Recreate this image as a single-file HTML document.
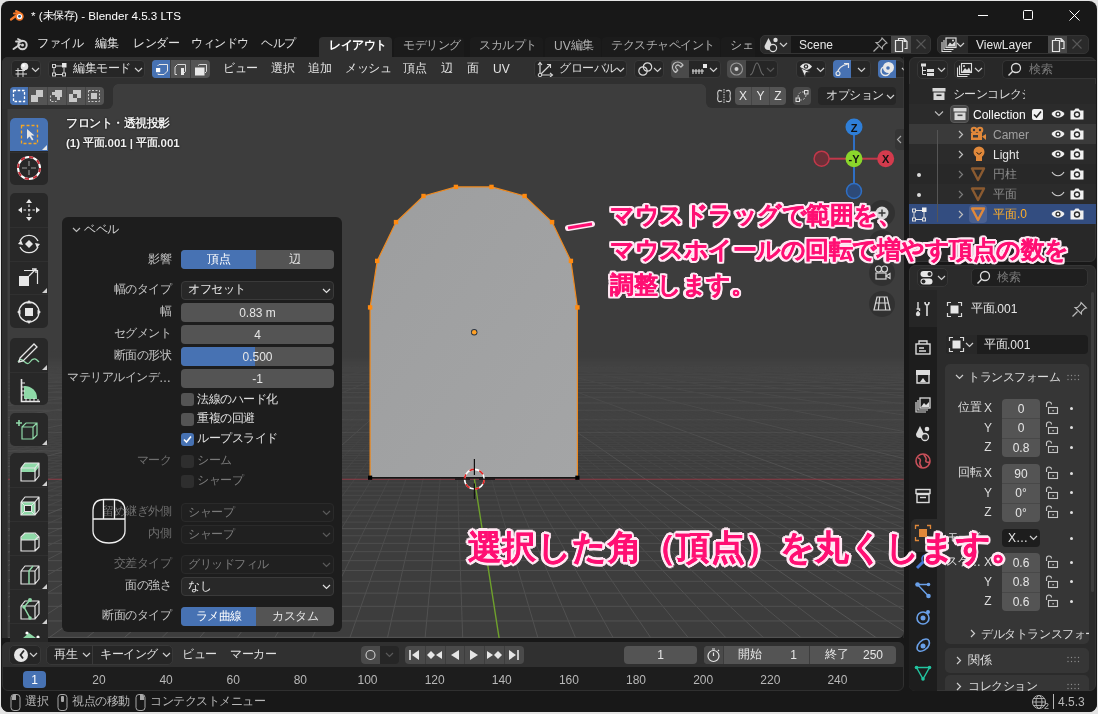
<!DOCTYPE html>
<html lang="ja"><head><meta charset="utf-8"><title>Blender</title>
<style>
*{box-sizing:border-box;margin:0;padding:0}
html,body{width:1098px;height:714px;overflow:hidden}
body{position:relative;background:#e4e4e4;font-family:"Liberation Sans",sans-serif;font-size:12px;color:#e6e6e6}
.a{position:absolute}
.t{white-space:nowrap}
#root{position:absolute;left:0;top:0;width:1098px;height:714px;will-change:transform}
</style></head><body><div id="root">
<div class="a" style="left:1px;top:1px;width:1096px;height:711px;background:#181818;border-radius:8px;"></div>
<svg class="a" style="left:9px;top:8px;" width="16" height="15" viewBox="0 0 16 15"><path d="M2 11.5L8 7" stroke="#f5792a" stroke-width="2.2" stroke-linecap="round"/><path d="M5 5.5L10 5" stroke="#f5792a" stroke-width="2" stroke-linecap="round"/><path d="M7 3L11 5" stroke="#f5792a" stroke-width="2" stroke-linecap="round"/><circle cx="10.5" cy="8.5" r="4.2" fill="#f5792a"/><circle cx="10.5" cy="8.5" r="2.6" fill="#fff"/><circle cx="10.5" cy="8.3" r="1.4" fill="#265787"/></svg>
<div class="a t" style="left:31px;top:6px;height:20px;line-height:20px;font-size:11.6px;color:#ffffff;">* (<span style="font-size:11.12px;letter-spacing:-0.48px;position:relative;top:-0.8px">未保存</span>) - Blender 4.5.3 LTS</div>
<div class="a" style="left:978px;top:15px;width:10px;height:1px;background:#ffffff;"></div>
<div class="a" style="left:1023px;top:10px;width:10px;height:10px;background:transparent;border:1px solid #fff;border-radius:1.5px;"></div>
<svg class="a" style="left:1069px;top:10px;" width="11" height="11" viewBox="0 0 11 11"><path d="M0.5 0.5L10.5 10.5M10.5 0.5L0.5 10.5" stroke="#fff" stroke-width="1"/></svg>
<svg class="a" style="left:12px;top:37px;" width="17" height="14" viewBox="0 0 17 14"><path d="M1.5 12L8 7.5" stroke="#d0d0d0" stroke-width="2" stroke-linecap="round"/><path d="M4 4.5L9 4.5M6 2L10 4" stroke="#d0d0d0" stroke-width="1.8" stroke-linecap="round"/><circle cx="10.5" cy="8" r="4.2" fill="none" stroke="#d0d0d0" stroke-width="2"/><circle cx="10.5" cy="8" r="1.5" fill="#d0d0d0"/></svg>
<div class="a t" style="left:37px;top:34px;height:20px;line-height:20px;font-size:12px;color:#e2e2e2;"><span style="font-size:11.50px;letter-spacing:-0.50px;position:relative;top:-0.8px">ファイル</span></div>
<div class="a t" style="left:95px;top:34px;height:20px;line-height:20px;font-size:12px;color:#e2e2e2;"><span style="font-size:11.50px;letter-spacing:-0.50px;position:relative;top:-0.8px">編集</span></div>
<div class="a t" style="left:133px;top:34px;height:20px;line-height:20px;font-size:12px;color:#e2e2e2;"><span style="font-size:11.50px;letter-spacing:-0.50px;position:relative;top:-0.8px">レンダー</span></div>
<div class="a t" style="left:191px;top:34px;height:20px;line-height:20px;font-size:12px;color:#e2e2e2;"><span style="font-size:11.50px;letter-spacing:-0.50px;position:relative;top:-0.8px">ウィンドウ</span></div>
<div class="a t" style="left:261px;top:34px;height:20px;line-height:20px;font-size:12px;color:#e2e2e2;"><span style="font-size:11.50px;letter-spacing:-0.50px;position:relative;top:-0.8px">ヘルプ</span></div>
<div class="a" style="left:319px;top:37px;width:73px;height:20px;background:#303030;border-radius:4px 4px 0 0;"></div>
<div class="a t" style="left:329px;top:36px;height:20px;line-height:20px;font-size:12px;color:#ffffff;font-weight:bold;"><span style="font-size:11.50px;letter-spacing:-0.50px;position:relative;top:-0.8px">レイアウト</span></div>
<div class="a" style="left:394px;top:37px;width:70px;height:20px;background:#1b1b1b;border-radius:4px 4px 0 0;"></div>
<div class="a t" style="left:403px;top:36px;height:20px;line-height:20px;font-size:12px;color:#b0b0b0;"><span style="font-size:11.50px;letter-spacing:-0.50px;position:relative;top:-0.8px">モデリング</span></div>
<div class="a" style="left:470px;top:37px;width:73px;height:20px;background:#1b1b1b;border-radius:4px 4px 0 0;"></div>
<div class="a t" style="left:479px;top:36px;height:20px;line-height:20px;font-size:12px;color:#b0b0b0;"><span style="font-size:11.50px;letter-spacing:-0.50px;position:relative;top:-0.8px">スカルプト</span></div>
<div class="a" style="left:545px;top:37px;width:56px;height:20px;background:#1b1b1b;border-radius:4px 4px 0 0;"></div>
<div class="a t" style="left:554px;top:36px;height:20px;line-height:20px;font-size:12px;color:#b0b0b0;">UV<span style="font-size:11.50px;letter-spacing:-0.50px;position:relative;top:-0.8px">編集</span></div>
<div class="a" style="left:602px;top:37px;width:118px;height:20px;background:#1b1b1b;border-radius:4px 4px 0 0;"></div>
<div class="a t" style="left:611px;top:36px;height:20px;line-height:20px;font-size:12px;color:#b0b0b0;"><span style="font-size:11.50px;letter-spacing:-0.50px;position:relative;top:-0.8px">テクスチャペイント</span></div>
<div class="a" style="left:721px;top:37px;width:34px;height:20px;background:#1b1b1b;border-radius:4px 4px 0 0;"></div>
<div class="a t" style="left:730px;top:36px;height:20px;line-height:20px;font-size:12px;color:#b0b0b0;"><span style="font-size:11.50px;letter-spacing:-0.50px;position:relative;top:-0.8px">シェ</span></div>
<div class="a" style="left:760px;top:35px;width:171px;height:19px;background:#2a2a2a;border-radius:5px;border:1px solid #343434;"></div>
<div class="a" style="left:791px;top:36px;width:100px;height:17px;background:#181818;"></div>
<div class="a" style="left:891px;top:36px;width:20px;height:17px;background:#484848;"></div>
<svg class="a" style="left:763px;top:36px;" width="18" height="17" viewBox="0 0 18 17"><path d="M5.5 2L1.5 10A4 4 0 0 0 9.5 10Z" fill="#dcdcdc"/><circle cx="12.5" cy="4" r="2.2" fill="#dcdcdc"/><circle cx="10" cy="12" r="3.6" fill="#2a2a2a" stroke="#dcdcdc" stroke-width="1.2"/></svg>
<svg class="a" style="left:779px;top:42px;" width="9" height="6" viewBox="0 0 9 6"><path d="M1 1L4.5 4.5L8 1" fill="none" stroke="#d0d0d0" stroke-width="1.2"/></svg>
<div class="a t" style="left:799px;top:34.5px;height:20px;line-height:20px;font-size:12px;color:#e6e6e6;">Scene</div>
<svg class="a" style="left:872px;top:36px;" width="17" height="17" viewBox="0 0 17 17"><path d="M10 2L15 7L13.5 7.5L10.5 10.5L10.5 13L4 6.5L6.5 6.5L9.5 3.5Z" fill="none" stroke="#a8a8a8" stroke-width="1.1"/><path d="M6.5 10.5L1.5 15.5" stroke="#a8a8a8" stroke-width="1.2"/></svg>
<svg class="a" style="left:892px;top:36px;" width="18" height="17" viewBox="0 0 18 17"><path d="M6.5 4.5V2.5H12L15 5.5V12.5H12.5" fill="none" stroke="#e6e6e6" stroke-width="1.2"/><path d="M3.5 4.5H10.5V15.5H3.5Z" fill="none" stroke="#e6e6e6" stroke-width="1.2"/><path d="M11.5 2.5V6H15" fill="#e6e6e6"/></svg>
<svg class="a" style="left:914px;top:37px;" width="14" height="14" viewBox="0 0 14 14"><path d="M2.5 2.5L11.5 11.5M11.5 2.5L2.5 11.5" stroke="#585858" stroke-width="1.1"/></svg>
<div class="a" style="left:937px;top:35px;width:152px;height:19px;background:#2a2a2a;border-radius:5px;border:1px solid #343434;"></div>
<div class="a" style="left:968px;top:36px;width:80px;height:17px;background:#181818;"></div>
<div class="a" style="left:1048px;top:36px;width:19px;height:17px;background:#484848;"></div>
<svg class="a" style="left:940px;top:36px;" width="18" height="17" viewBox="0 0 18 17"><rect x="6" y="2" width="10" height="9.5" fill="none" stroke="#dcdcdc" stroke-width="1.2"/><path d="M4 4V13.5H13.5M2 6V15.5H11.5" fill="none" stroke="#dcdcdc" stroke-width="1.1"/><path d="M7 10.5L10 6.5L12 8.5L15 5.5V10.5Z" fill="#dcdcdc"/><circle cx="13" cy="4.5" r="1" fill="#dcdcdc"/></svg>
<svg class="a" style="left:956px;top:42px;" width="9" height="6" viewBox="0 0 9 6"><path d="M1 1L4.5 4.5L8 1" fill="none" stroke="#d0d0d0" stroke-width="1.2"/></svg>
<div class="a t" style="left:976px;top:34.5px;height:20px;line-height:20px;font-size:12px;color:#e6e6e6;">ViewLayer</div>
<svg class="a" style="left:1049px;top:36px;" width="18" height="17" viewBox="0 0 18 17"><path d="M6.5 4.5V2.5H12L15 5.5V12.5H12.5" fill="none" stroke="#e6e6e6" stroke-width="1.2"/><path d="M3.5 4.5H10.5V15.5H3.5Z" fill="none" stroke="#e6e6e6" stroke-width="1.2"/><path d="M11.5 2.5V6H15" fill="#e6e6e6"/></svg>
<svg class="a" style="left:1070px;top:37px;" width="14" height="14" viewBox="0 0 14 14"><path d="M2.5 2.5L11.5 11.5M11.5 2.5L2.5 11.5" stroke="#585858" stroke-width="1.1"/></svg>
<div class="a" style="left:2px;top:57px;width:902px;height:581px;background:#3d3d3d;border-radius:6px;overflow:hidden;"><svg style="position:absolute;left:0;top:0" width="902" height="581" viewBox="0 0 902 581"><defs><linearGradient id="gmi" x1="0" y1="0" x2="0" y2="1"><stop offset="0.5095" stop-color="#fff" stop-opacity="0"/><stop offset="0.5508" stop-color="#fff" stop-opacity="0.18"/><stop offset="0.6368" stop-color="#fff" stop-opacity="0.3"/><stop offset="0.7267" stop-color="#fff" stop-opacity="0.45"/><stop offset="0.8657" stop-color="#fff" stop-opacity="0.85"/><stop offset="1.0034" stop-color="#fff" stop-opacity="1"/></linearGradient><mask id="gmim" maskUnits="userSpaceOnUse" x="0" y="0" width="902" height="581"><rect x="0" y="0" width="902" height="581" fill="url(#gmi)"/></mask><linearGradient id="gma" x1="0" y1="0" x2="0" y2="1"><stop offset="0.5060" stop-color="#fff" stop-opacity="0"/><stop offset="0.5508" stop-color="#fff" stop-opacity="0.3"/><stop offset="0.6540" stop-color="#fff" stop-opacity="0.6"/><stop offset="0.7267" stop-color="#fff" stop-opacity="0.8"/><stop offset="1.0034" stop-color="#fff" stop-opacity="1"/></linearGradient><mask id="gmam" maskUnits="userSpaceOnUse" x="0" y="0" width="902" height="581"><rect x="0" y="0" width="902" height="581" fill="url(#gma)"/></mask></defs><g stroke="#525252" stroke-width="1" fill="none" mask="url(#gmim)"><line x1="142.12" y1="296.00" x2="-14623.19" y2="583.00"/><line x1="142.89" y1="296.00" x2="-14585.29" y2="583.00"/><line x1="143.67" y1="296.00" x2="-14547.39" y2="583.00"/><line x1="144.45" y1="296.00" x2="-14509.49" y2="583.00"/><line x1="145.22" y1="296.00" x2="-14471.59" y2="583.00"/><line x1="146.00" y1="296.00" x2="-14433.69" y2="583.00"/><line x1="146.77" y1="296.00" x2="-14395.79" y2="583.00"/><line x1="147.55" y1="296.00" x2="-14357.89" y2="583.00"/><line x1="148.33" y1="296.00" x2="-14319.99" y2="583.00"/><line x1="149.88" y1="296.00" x2="-14244.19" y2="583.00"/><line x1="150.65" y1="296.00" x2="-14206.29" y2="583.00"/><line x1="151.43" y1="296.00" x2="-14168.39" y2="583.00"/><line x1="152.21" y1="296.00" x2="-14130.49" y2="583.00"/><line x1="152.98" y1="296.00" x2="-14092.59" y2="583.00"/><line x1="153.76" y1="296.00" x2="-14054.69" y2="583.00"/><line x1="154.54" y1="296.00" x2="-14016.80" y2="583.00"/><line x1="155.31" y1="296.00" x2="-13978.90" y2="583.00"/><line x1="156.09" y1="296.00" x2="-13941.00" y2="583.00"/><line x1="157.64" y1="296.00" x2="-13865.20" y2="583.00"/><line x1="158.42" y1="296.00" x2="-13827.30" y2="583.00"/><line x1="159.19" y1="296.00" x2="-13789.40" y2="583.00"/><line x1="159.97" y1="296.00" x2="-13751.50" y2="583.00"/><line x1="160.74" y1="296.00" x2="-13713.60" y2="583.00"/><line x1="161.52" y1="296.00" x2="-13675.70" y2="583.00"/><line x1="162.30" y1="296.00" x2="-13637.80" y2="583.00"/><line x1="163.07" y1="296.00" x2="-13599.90" y2="583.00"/><line x1="163.85" y1="296.00" x2="-13562.00" y2="583.00"/><line x1="165.40" y1="296.00" x2="-13486.20" y2="583.00"/><line x1="166.18" y1="296.00" x2="-13448.30" y2="583.00"/><line x1="166.95" y1="296.00" x2="-13410.40" y2="583.00"/><line x1="167.73" y1="296.00" x2="-13372.51" y2="583.00"/><line x1="168.50" y1="296.00" x2="-13334.61" y2="583.00"/><line x1="169.28" y1="296.00" x2="-13296.71" y2="583.00"/><line x1="170.06" y1="296.00" x2="-13258.81" y2="583.00"/><line x1="170.83" y1="296.00" x2="-13220.91" y2="583.00"/><line x1="171.61" y1="296.00" x2="-13183.01" y2="583.00"/><line x1="173.16" y1="296.00" x2="-13107.21" y2="583.00"/><line x1="173.94" y1="296.00" x2="-13069.31" y2="583.00"/><line x1="174.71" y1="296.00" x2="-13031.41" y2="583.00"/><line x1="175.49" y1="296.00" x2="-12993.51" y2="583.00"/><line x1="176.27" y1="296.00" x2="-12955.61" y2="583.00"/><line x1="177.04" y1="296.00" x2="-12917.71" y2="583.00"/><line x1="177.82" y1="296.00" x2="-12879.81" y2="583.00"/><line x1="178.59" y1="296.00" x2="-12841.91" y2="583.00"/><line x1="179.37" y1="296.00" x2="-12804.01" y2="583.00"/><line x1="180.92" y1="296.00" x2="-12728.22" y2="583.00"/><line x1="181.70" y1="296.00" x2="-12690.32" y2="583.00"/><line x1="182.47" y1="296.00" x2="-12652.42" y2="583.00"/><line x1="183.25" y1="296.00" x2="-12614.52" y2="583.00"/><line x1="184.03" y1="296.00" x2="-12576.62" y2="583.00"/><line x1="184.80" y1="296.00" x2="-12538.72" y2="583.00"/><line x1="185.58" y1="296.00" x2="-12500.82" y2="583.00"/><line x1="186.36" y1="296.00" x2="-12462.92" y2="583.00"/><line x1="187.13" y1="296.00" x2="-12425.02" y2="583.00"/><line x1="188.68" y1="296.00" x2="-12349.22" y2="583.00"/><line x1="189.46" y1="296.00" x2="-12311.32" y2="583.00"/><line x1="190.24" y1="296.00" x2="-12273.42" y2="583.00"/><line x1="191.01" y1="296.00" x2="-12235.52" y2="583.00"/><line x1="191.79" y1="296.00" x2="-12197.62" y2="583.00"/><line x1="192.56" y1="296.00" x2="-12159.72" y2="583.00"/><line x1="193.34" y1="296.00" x2="-12121.83" y2="583.00"/><line x1="194.12" y1="296.00" x2="-12083.93" y2="583.00"/><line x1="194.89" y1="296.00" x2="-12046.03" y2="583.00"/><line x1="196.44" y1="296.00" x2="-11970.23" y2="583.00"/><line x1="197.22" y1="296.00" x2="-11932.33" y2="583.00"/><line x1="198.00" y1="296.00" x2="-11894.43" y2="583.00"/><line x1="198.77" y1="296.00" x2="-11856.53" y2="583.00"/><line x1="199.55" y1="296.00" x2="-11818.63" y2="583.00"/><line x1="200.32" y1="296.00" x2="-11780.73" y2="583.00"/><line x1="201.10" y1="296.00" x2="-11742.83" y2="583.00"/><line x1="201.88" y1="296.00" x2="-11704.93" y2="583.00"/><line x1="202.65" y1="296.00" x2="-11667.03" y2="583.00"/><line x1="204.21" y1="296.00" x2="-11591.23" y2="583.00"/><line x1="204.98" y1="296.00" x2="-11553.33" y2="583.00"/><line x1="205.76" y1="296.00" x2="-11515.44" y2="583.00"/><line x1="206.53" y1="296.00" x2="-11477.54" y2="583.00"/><line x1="207.31" y1="296.00" x2="-11439.64" y2="583.00"/><line x1="208.09" y1="296.00" x2="-11401.74" y2="583.00"/><line x1="208.86" y1="296.00" x2="-11363.84" y2="583.00"/><line x1="209.64" y1="296.00" x2="-11325.94" y2="583.00"/><line x1="210.41" y1="296.00" x2="-11288.04" y2="583.00"/><line x1="211.97" y1="296.00" x2="-11212.24" y2="583.00"/><line x1="212.74" y1="296.00" x2="-11174.34" y2="583.00"/><line x1="213.52" y1="296.00" x2="-11136.44" y2="583.00"/><line x1="214.29" y1="296.00" x2="-11098.54" y2="583.00"/><line x1="215.07" y1="296.00" x2="-11060.64" y2="583.00"/><line x1="215.85" y1="296.00" x2="-11022.74" y2="583.00"/><line x1="216.62" y1="296.00" x2="-10984.84" y2="583.00"/><line x1="217.40" y1="296.00" x2="-10946.94" y2="583.00"/><line x1="218.18" y1="296.00" x2="-10909.04" y2="583.00"/><line x1="219.73" y1="296.00" x2="-10833.25" y2="583.00"/><line x1="220.50" y1="296.00" x2="-10795.35" y2="583.00"/><line x1="221.28" y1="296.00" x2="-10757.45" y2="583.00"/><line x1="222.06" y1="296.00" x2="-10719.55" y2="583.00"/><line x1="222.83" y1="296.00" x2="-10681.65" y2="583.00"/><line x1="223.61" y1="296.00" x2="-10643.75" y2="583.00"/><line x1="224.38" y1="296.00" x2="-10605.85" y2="583.00"/><line x1="225.16" y1="296.00" x2="-10567.95" y2="583.00"/><line x1="225.94" y1="296.00" x2="-10530.05" y2="583.00"/><line x1="227.49" y1="296.00" x2="-10454.25" y2="583.00"/><line x1="228.26" y1="296.00" x2="-10416.35" y2="583.00"/><line x1="229.04" y1="296.00" x2="-10378.45" y2="583.00"/><line x1="229.82" y1="296.00" x2="-10340.55" y2="583.00"/><line x1="230.59" y1="296.00" x2="-10302.65" y2="583.00"/><line x1="231.37" y1="296.00" x2="-10264.76" y2="583.00"/><line x1="232.14" y1="296.00" x2="-10226.86" y2="583.00"/><line x1="232.92" y1="296.00" x2="-10188.96" y2="583.00"/><line x1="233.70" y1="296.00" x2="-10151.06" y2="583.00"/><line x1="235.25" y1="296.00" x2="-10075.26" y2="583.00"/><line x1="236.03" y1="296.00" x2="-10037.36" y2="583.00"/><line x1="236.80" y1="296.00" x2="-9999.46" y2="583.00"/><line x1="237.58" y1="296.00" x2="-9961.56" y2="583.00"/><line x1="238.35" y1="296.00" x2="-9923.66" y2="583.00"/><line x1="239.13" y1="296.00" x2="-9885.76" y2="583.00"/><line x1="239.91" y1="296.00" x2="-9847.86" y2="583.00"/><line x1="240.68" y1="296.00" x2="-9809.96" y2="583.00"/><line x1="241.46" y1="296.00" x2="-9772.06" y2="583.00"/><line x1="243.01" y1="296.00" x2="-9696.26" y2="583.00"/><line x1="243.79" y1="296.00" x2="-9658.36" y2="583.00"/><line x1="244.56" y1="296.00" x2="-9620.47" y2="583.00"/><line x1="245.34" y1="296.00" x2="-9582.57" y2="583.00"/><line x1="246.11" y1="296.00" x2="-9544.67" y2="583.00"/><line x1="246.89" y1="296.00" x2="-9506.77" y2="583.00"/><line x1="247.67" y1="296.00" x2="-9468.87" y2="583.00"/><line x1="248.44" y1="296.00" x2="-9430.97" y2="583.00"/><line x1="249.22" y1="296.00" x2="-9393.07" y2="583.00"/><line x1="250.77" y1="296.00" x2="-9317.27" y2="583.00"/><line x1="251.55" y1="296.00" x2="-9279.37" y2="583.00"/><line x1="252.32" y1="296.00" x2="-9241.47" y2="583.00"/><line x1="253.10" y1="296.00" x2="-9203.57" y2="583.00"/><line x1="253.88" y1="296.00" x2="-9165.67" y2="583.00"/><line x1="254.65" y1="296.00" x2="-9127.77" y2="583.00"/><line x1="255.43" y1="296.00" x2="-9089.87" y2="583.00"/><line x1="256.20" y1="296.00" x2="-9051.97" y2="583.00"/><line x1="256.98" y1="296.00" x2="-9014.08" y2="583.00"/><line x1="258.53" y1="296.00" x2="-8938.28" y2="583.00"/><line x1="259.31" y1="296.00" x2="-8900.38" y2="583.00"/><line x1="260.08" y1="296.00" x2="-8862.48" y2="583.00"/><line x1="260.86" y1="296.00" x2="-8824.58" y2="583.00"/><line x1="261.64" y1="296.00" x2="-8786.68" y2="583.00"/><line x1="262.41" y1="296.00" x2="-8748.78" y2="583.00"/><line x1="263.19" y1="296.00" x2="-8710.88" y2="583.00"/><line x1="263.96" y1="296.00" x2="-8672.98" y2="583.00"/><line x1="264.74" y1="296.00" x2="-8635.08" y2="583.00"/><line x1="266.29" y1="296.00" x2="-8559.28" y2="583.00"/><line x1="267.07" y1="296.00" x2="-8521.38" y2="583.00"/><line x1="267.85" y1="296.00" x2="-8483.48" y2="583.00"/><line x1="268.62" y1="296.00" x2="-8445.58" y2="583.00"/><line x1="269.40" y1="296.00" x2="-8407.68" y2="583.00"/><line x1="270.17" y1="296.00" x2="-8369.79" y2="583.00"/><line x1="270.95" y1="296.00" x2="-8331.89" y2="583.00"/><line x1="271.73" y1="296.00" x2="-8293.99" y2="583.00"/><line x1="272.50" y1="296.00" x2="-8256.09" y2="583.00"/><line x1="274.05" y1="296.00" x2="-8180.29" y2="583.00"/><line x1="274.83" y1="296.00" x2="-8142.39" y2="583.00"/><line x1="275.61" y1="296.00" x2="-8104.49" y2="583.00"/><line x1="276.38" y1="296.00" x2="-8066.59" y2="583.00"/><line x1="277.16" y1="296.00" x2="-8028.69" y2="583.00"/><line x1="277.93" y1="296.00" x2="-7990.79" y2="583.00"/><line x1="278.71" y1="296.00" x2="-7952.89" y2="583.00"/><line x1="279.49" y1="296.00" x2="-7914.99" y2="583.00"/><line x1="280.26" y1="296.00" x2="-7877.09" y2="583.00"/><line x1="281.82" y1="296.00" x2="-7801.29" y2="583.00"/><line x1="282.59" y1="296.00" x2="-7763.40" y2="583.00"/><line x1="283.37" y1="296.00" x2="-7725.50" y2="583.00"/><line x1="284.14" y1="296.00" x2="-7687.60" y2="583.00"/><line x1="284.92" y1="296.00" x2="-7649.70" y2="583.00"/><line x1="285.70" y1="296.00" x2="-7611.80" y2="583.00"/><line x1="286.47" y1="296.00" x2="-7573.90" y2="583.00"/><line x1="287.25" y1="296.00" x2="-7536.00" y2="583.00"/><line x1="288.02" y1="296.00" x2="-7498.10" y2="583.00"/><line x1="289.58" y1="296.00" x2="-7422.30" y2="583.00"/><line x1="290.35" y1="296.00" x2="-7384.40" y2="583.00"/><line x1="291.13" y1="296.00" x2="-7346.50" y2="583.00"/><line x1="291.90" y1="296.00" x2="-7308.60" y2="583.00"/><line x1="292.68" y1="296.00" x2="-7270.70" y2="583.00"/><line x1="293.46" y1="296.00" x2="-7232.80" y2="583.00"/><line x1="294.23" y1="296.00" x2="-7194.90" y2="583.00"/><line x1="295.01" y1="296.00" x2="-7157.00" y2="583.00"/><line x1="295.78" y1="296.00" x2="-7119.11" y2="583.00"/><line x1="297.34" y1="296.00" x2="-7043.31" y2="583.00"/><line x1="298.11" y1="296.00" x2="-7005.41" y2="583.00"/><line x1="298.89" y1="296.00" x2="-6967.51" y2="583.00"/><line x1="299.67" y1="296.00" x2="-6929.61" y2="583.00"/><line x1="300.44" y1="296.00" x2="-6891.71" y2="583.00"/><line x1="301.22" y1="296.00" x2="-6853.81" y2="583.00"/><line x1="301.99" y1="296.00" x2="-6815.91" y2="583.00"/><line x1="302.77" y1="296.00" x2="-6778.01" y2="583.00"/><line x1="303.55" y1="296.00" x2="-6740.11" y2="583.00"/><line x1="305.10" y1="296.00" x2="-6664.31" y2="583.00"/><line x1="305.87" y1="296.00" x2="-6626.41" y2="583.00"/><line x1="306.65" y1="296.00" x2="-6588.51" y2="583.00"/><line x1="307.43" y1="296.00" x2="-6550.61" y2="583.00"/><line x1="308.20" y1="296.00" x2="-6512.72" y2="583.00"/><line x1="308.98" y1="296.00" x2="-6474.82" y2="583.00"/><line x1="309.75" y1="296.00" x2="-6436.92" y2="583.00"/><line x1="310.53" y1="296.00" x2="-6399.02" y2="583.00"/><line x1="311.31" y1="296.00" x2="-6361.12" y2="583.00"/><line x1="312.86" y1="296.00" x2="-6285.32" y2="583.00"/><line x1="313.64" y1="296.00" x2="-6247.42" y2="583.00"/><line x1="314.41" y1="296.00" x2="-6209.52" y2="583.00"/><line x1="315.19" y1="296.00" x2="-6171.62" y2="583.00"/><line x1="315.96" y1="296.00" x2="-6133.72" y2="583.00"/><line x1="316.74" y1="296.00" x2="-6095.82" y2="583.00"/><line x1="317.52" y1="296.00" x2="-6057.92" y2="583.00"/><line x1="318.29" y1="296.00" x2="-6020.02" y2="583.00"/><line x1="319.07" y1="296.00" x2="-5982.12" y2="583.00"/><line x1="320.62" y1="296.00" x2="-5906.32" y2="583.00"/><line x1="321.40" y1="296.00" x2="-5868.43" y2="583.00"/><line x1="322.17" y1="296.00" x2="-5830.53" y2="583.00"/><line x1="322.95" y1="296.00" x2="-5792.63" y2="583.00"/><line x1="323.72" y1="296.00" x2="-5754.73" y2="583.00"/><line x1="324.50" y1="296.00" x2="-5716.83" y2="583.00"/><line x1="325.28" y1="296.00" x2="-5678.93" y2="583.00"/><line x1="326.05" y1="296.00" x2="-5641.03" y2="583.00"/><line x1="326.83" y1="296.00" x2="-5603.13" y2="583.00"/><line x1="328.38" y1="296.00" x2="-5527.33" y2="583.00"/><line x1="329.16" y1="296.00" x2="-5489.43" y2="583.00"/><line x1="329.93" y1="296.00" x2="-5451.53" y2="583.00"/><line x1="330.71" y1="296.00" x2="-5413.63" y2="583.00"/><line x1="331.49" y1="296.00" x2="-5375.73" y2="583.00"/><line x1="332.26" y1="296.00" x2="-5337.83" y2="583.00"/><line x1="333.04" y1="296.00" x2="-5299.93" y2="583.00"/><line x1="333.81" y1="296.00" x2="-5262.04" y2="583.00"/><line x1="334.59" y1="296.00" x2="-5224.14" y2="583.00"/><line x1="336.14" y1="296.00" x2="-5148.34" y2="583.00"/><line x1="336.92" y1="296.00" x2="-5110.44" y2="583.00"/><line x1="337.69" y1="296.00" x2="-5072.54" y2="583.00"/><line x1="338.47" y1="296.00" x2="-5034.64" y2="583.00"/><line x1="339.25" y1="296.00" x2="-4996.74" y2="583.00"/><line x1="340.02" y1="296.00" x2="-4958.84" y2="583.00"/><line x1="340.80" y1="296.00" x2="-4920.94" y2="583.00"/><line x1="341.57" y1="296.00" x2="-4883.04" y2="583.00"/><line x1="342.35" y1="296.00" x2="-4845.14" y2="583.00"/><line x1="343.90" y1="296.00" x2="-4769.34" y2="583.00"/><line x1="344.68" y1="296.00" x2="-4731.44" y2="583.00"/><line x1="345.46" y1="296.00" x2="-4693.54" y2="583.00"/><line x1="346.23" y1="296.00" x2="-4655.64" y2="583.00"/><line x1="347.01" y1="296.00" x2="-4617.75" y2="583.00"/><line x1="347.78" y1="296.00" x2="-4579.85" y2="583.00"/><line x1="348.56" y1="296.00" x2="-4541.95" y2="583.00"/><line x1="349.34" y1="296.00" x2="-4504.05" y2="583.00"/><line x1="350.11" y1="296.00" x2="-4466.15" y2="583.00"/><line x1="351.66" y1="296.00" x2="-4390.35" y2="583.00"/><line x1="352.44" y1="296.00" x2="-4352.45" y2="583.00"/><line x1="353.22" y1="296.00" x2="-4314.55" y2="583.00"/><line x1="353.99" y1="296.00" x2="-4276.65" y2="583.00"/><line x1="354.77" y1="296.00" x2="-4238.75" y2="583.00"/><line x1="355.54" y1="296.00" x2="-4200.85" y2="583.00"/><line x1="356.32" y1="296.00" x2="-4162.95" y2="583.00"/><line x1="357.10" y1="296.00" x2="-4125.05" y2="583.00"/><line x1="357.87" y1="296.00" x2="-4087.15" y2="583.00"/><line x1="359.42" y1="296.00" x2="-4011.36" y2="583.00"/><line x1="360.20" y1="296.00" x2="-3973.46" y2="583.00"/><line x1="360.98" y1="296.00" x2="-3935.56" y2="583.00"/><line x1="361.75" y1="296.00" x2="-3897.66" y2="583.00"/><line x1="362.53" y1="296.00" x2="-3859.76" y2="583.00"/><line x1="363.31" y1="296.00" x2="-3821.86" y2="583.00"/><line x1="364.08" y1="296.00" x2="-3783.96" y2="583.00"/><line x1="364.86" y1="296.00" x2="-3746.06" y2="583.00"/><line x1="365.63" y1="296.00" x2="-3708.16" y2="583.00"/><line x1="367.19" y1="296.00" x2="-3632.36" y2="583.00"/><line x1="367.96" y1="296.00" x2="-3594.46" y2="583.00"/><line x1="368.74" y1="296.00" x2="-3556.56" y2="583.00"/><line x1="369.51" y1="296.00" x2="-3518.66" y2="583.00"/><line x1="370.29" y1="296.00" x2="-3480.76" y2="583.00"/><line x1="371.07" y1="296.00" x2="-3442.86" y2="583.00"/><line x1="371.84" y1="296.00" x2="-3404.96" y2="583.00"/><line x1="372.62" y1="296.00" x2="-3367.07" y2="583.00"/><line x1="373.39" y1="296.00" x2="-3329.17" y2="583.00"/><line x1="374.95" y1="296.00" x2="-3253.37" y2="583.00"/><line x1="375.72" y1="296.00" x2="-3215.47" y2="583.00"/><line x1="376.50" y1="296.00" x2="-3177.57" y2="583.00"/><line x1="377.28" y1="296.00" x2="-3139.67" y2="583.00"/><line x1="378.05" y1="296.00" x2="-3101.77" y2="583.00"/><line x1="378.83" y1="296.00" x2="-3063.87" y2="583.00"/><line x1="379.60" y1="296.00" x2="-3025.97" y2="583.00"/><line x1="380.38" y1="296.00" x2="-2988.07" y2="583.00"/><line x1="381.16" y1="296.00" x2="-2950.17" y2="583.00"/><line x1="382.71" y1="296.00" x2="-2874.37" y2="583.00"/><line x1="383.48" y1="296.00" x2="-2836.47" y2="583.00"/><line x1="384.26" y1="296.00" x2="-2798.57" y2="583.00"/><line x1="385.04" y1="296.00" x2="-2760.68" y2="583.00"/><line x1="385.81" y1="296.00" x2="-2722.78" y2="583.00"/><line x1="386.59" y1="296.00" x2="-2684.88" y2="583.00"/><line x1="387.36" y1="296.00" x2="-2646.98" y2="583.00"/><line x1="388.14" y1="296.00" x2="-2609.08" y2="583.00"/><line x1="388.92" y1="296.00" x2="-2571.18" y2="583.00"/><line x1="390.47" y1="296.00" x2="-2495.38" y2="583.00"/><line x1="391.24" y1="296.00" x2="-2457.48" y2="583.00"/><line x1="392.02" y1="296.00" x2="-2419.58" y2="583.00"/><line x1="392.80" y1="296.00" x2="-2381.68" y2="583.00"/><line x1="393.57" y1="296.00" x2="-2343.78" y2="583.00"/><line x1="394.35" y1="296.00" x2="-2305.88" y2="583.00"/><line x1="395.13" y1="296.00" x2="-2267.98" y2="583.00"/><line x1="395.90" y1="296.00" x2="-2230.08" y2="583.00"/><line x1="396.68" y1="296.00" x2="-2192.18" y2="583.00"/><line x1="398.23" y1="296.00" x2="-2116.39" y2="583.00"/><line x1="399.01" y1="296.00" x2="-2078.49" y2="583.00"/><line x1="399.78" y1="296.00" x2="-2040.59" y2="583.00"/><line x1="400.56" y1="296.00" x2="-2002.69" y2="583.00"/><line x1="401.33" y1="296.00" x2="-1964.79" y2="583.00"/><line x1="402.11" y1="296.00" x2="-1926.89" y2="583.00"/><line x1="402.89" y1="296.00" x2="-1888.99" y2="583.00"/><line x1="403.66" y1="296.00" x2="-1851.09" y2="583.00"/><line x1="404.44" y1="296.00" x2="-1813.19" y2="583.00"/><line x1="405.99" y1="296.00" x2="-1737.39" y2="583.00"/><line x1="406.77" y1="296.00" x2="-1699.49" y2="583.00"/><line x1="407.54" y1="296.00" x2="-1661.59" y2="583.00"/><line x1="408.32" y1="296.00" x2="-1623.69" y2="583.00"/><line x1="409.10" y1="296.00" x2="-1585.79" y2="583.00"/><line x1="409.87" y1="296.00" x2="-1547.89" y2="583.00"/><line x1="410.65" y1="296.00" x2="-1510.00" y2="583.00"/><line x1="411.42" y1="296.00" x2="-1472.10" y2="583.00"/><line x1="412.20" y1="296.00" x2="-1434.20" y2="583.00"/><line x1="413.75" y1="296.00" x2="-1358.40" y2="583.00"/><line x1="414.53" y1="296.00" x2="-1320.50" y2="583.00"/><line x1="415.30" y1="296.00" x2="-1282.60" y2="583.00"/><line x1="416.08" y1="296.00" x2="-1244.70" y2="583.00"/><line x1="416.86" y1="296.00" x2="-1206.80" y2="583.00"/><line x1="417.63" y1="296.00" x2="-1168.90" y2="583.00"/><line x1="418.41" y1="296.00" x2="-1131.00" y2="583.00"/><line x1="419.18" y1="296.00" x2="-1093.10" y2="583.00"/><line x1="419.96" y1="296.00" x2="-1055.20" y2="583.00"/><line x1="421.51" y1="296.00" x2="-979.40" y2="583.00"/><line x1="422.29" y1="296.00" x2="-941.50" y2="583.00"/><line x1="423.06" y1="296.00" x2="-903.60" y2="583.00"/><line x1="423.84" y1="296.00" x2="-865.71" y2="583.00"/><line x1="424.62" y1="296.00" x2="-827.81" y2="583.00"/><line x1="425.39" y1="296.00" x2="-789.91" y2="583.00"/><line x1="426.17" y1="296.00" x2="-752.01" y2="583.00"/><line x1="426.95" y1="296.00" x2="-714.11" y2="583.00"/><line x1="427.72" y1="296.00" x2="-676.21" y2="583.00"/><line x1="429.27" y1="296.00" x2="-600.41" y2="583.00"/><line x1="430.05" y1="296.00" x2="-562.51" y2="583.00"/><line x1="430.83" y1="296.00" x2="-524.61" y2="583.00"/><line x1="431.60" y1="296.00" x2="-486.71" y2="583.00"/><line x1="432.38" y1="296.00" x2="-448.81" y2="583.00"/><line x1="433.15" y1="296.00" x2="-410.91" y2="583.00"/><line x1="433.93" y1="296.00" x2="-373.01" y2="583.00"/><line x1="434.71" y1="296.00" x2="-335.11" y2="583.00"/><line x1="435.48" y1="296.00" x2="-297.21" y2="583.00"/><line x1="437.03" y1="296.00" x2="-221.42" y2="583.00"/><line x1="437.81" y1="296.00" x2="-183.52" y2="583.00"/><line x1="438.59" y1="296.00" x2="-145.62" y2="583.00"/><line x1="439.36" y1="296.00" x2="-107.72" y2="583.00"/><line x1="440.14" y1="296.00" x2="-69.82" y2="583.00"/><line x1="440.91" y1="296.00" x2="-31.92" y2="583.00"/><line x1="441.69" y1="296.00" x2="5.98" y2="583.00"/><line x1="442.47" y1="296.00" x2="43.88" y2="583.00"/><line x1="443.24" y1="296.00" x2="81.78" y2="583.00"/><line x1="444.80" y1="296.00" x2="157.58" y2="583.00"/><line x1="445.57" y1="296.00" x2="195.48" y2="583.00"/><line x1="446.35" y1="296.00" x2="233.38" y2="583.00"/><line x1="447.12" y1="296.00" x2="271.28" y2="583.00"/><line x1="447.90" y1="296.00" x2="309.18" y2="583.00"/><line x1="448.68" y1="296.00" x2="347.08" y2="583.00"/><line x1="449.45" y1="296.00" x2="384.97" y2="583.00"/><line x1="450.23" y1="296.00" x2="422.87" y2="583.00"/><line x1="451.00" y1="296.00" x2="460.77" y2="583.00"/><line x1="452.56" y1="296.00" x2="536.57" y2="583.00"/><line x1="453.33" y1="296.00" x2="574.47" y2="583.00"/><line x1="454.11" y1="296.00" x2="612.37" y2="583.00"/><line x1="454.88" y1="296.00" x2="650.27" y2="583.00"/><line x1="455.66" y1="296.00" x2="688.17" y2="583.00"/><line x1="456.44" y1="296.00" x2="726.07" y2="583.00"/><line x1="457.21" y1="296.00" x2="763.97" y2="583.00"/><line x1="457.99" y1="296.00" x2="801.87" y2="583.00"/><line x1="458.77" y1="296.00" x2="839.77" y2="583.00"/><line x1="460.32" y1="296.00" x2="915.57" y2="583.00"/><line x1="461.09" y1="296.00" x2="953.47" y2="583.00"/><line x1="461.87" y1="296.00" x2="991.37" y2="583.00"/><line x1="462.65" y1="296.00" x2="1029.26" y2="583.00"/><line x1="463.42" y1="296.00" x2="1067.16" y2="583.00"/><line x1="464.20" y1="296.00" x2="1105.06" y2="583.00"/><line x1="464.97" y1="296.00" x2="1142.96" y2="583.00"/><line x1="465.75" y1="296.00" x2="1180.86" y2="583.00"/><line x1="466.53" y1="296.00" x2="1218.76" y2="583.00"/><line x1="468.08" y1="296.00" x2="1294.56" y2="583.00"/><line x1="468.85" y1="296.00" x2="1332.46" y2="583.00"/><line x1="469.63" y1="296.00" x2="1370.36" y2="583.00"/><line x1="470.41" y1="296.00" x2="1408.26" y2="583.00"/><line x1="471.18" y1="296.00" x2="1446.16" y2="583.00"/><line x1="471.96" y1="296.00" x2="1484.06" y2="583.00"/><line x1="472.73" y1="296.00" x2="1521.96" y2="583.00"/><line x1="473.51" y1="296.00" x2="1559.86" y2="583.00"/><line x1="474.29" y1="296.00" x2="1597.76" y2="583.00"/><line x1="475.84" y1="296.00" x2="1673.55" y2="583.00"/><line x1="476.62" y1="296.00" x2="1711.45" y2="583.00"/><line x1="477.39" y1="296.00" x2="1749.35" y2="583.00"/><line x1="478.17" y1="296.00" x2="1787.25" y2="583.00"/><line x1="478.94" y1="296.00" x2="1825.15" y2="583.00"/><line x1="479.72" y1="296.00" x2="1863.05" y2="583.00"/><line x1="480.50" y1="296.00" x2="1900.95" y2="583.00"/><line x1="481.27" y1="296.00" x2="1938.85" y2="583.00"/><line x1="482.05" y1="296.00" x2="1976.75" y2="583.00"/><line x1="483.60" y1="296.00" x2="2052.55" y2="583.00"/><line x1="484.38" y1="296.00" x2="2090.45" y2="583.00"/><line x1="485.15" y1="296.00" x2="2128.35" y2="583.00"/><line x1="485.93" y1="296.00" x2="2166.25" y2="583.00"/><line x1="486.70" y1="296.00" x2="2204.15" y2="583.00"/><line x1="487.48" y1="296.00" x2="2242.05" y2="583.00"/><line x1="488.26" y1="296.00" x2="2279.94" y2="583.00"/><line x1="489.03" y1="296.00" x2="2317.84" y2="583.00"/><line x1="489.81" y1="296.00" x2="2355.74" y2="583.00"/><line x1="491.36" y1="296.00" x2="2431.54" y2="583.00"/><line x1="492.14" y1="296.00" x2="2469.44" y2="583.00"/><line x1="492.91" y1="296.00" x2="2507.34" y2="583.00"/><line x1="493.69" y1="296.00" x2="2545.24" y2="583.00"/><line x1="494.47" y1="296.00" x2="2583.14" y2="583.00"/><line x1="495.24" y1="296.00" x2="2621.04" y2="583.00"/><line x1="496.02" y1="296.00" x2="2658.94" y2="583.00"/><line x1="496.79" y1="296.00" x2="2696.84" y2="583.00"/><line x1="497.57" y1="296.00" x2="2734.74" y2="583.00"/><line x1="499.12" y1="296.00" x2="2810.54" y2="583.00"/><line x1="499.90" y1="296.00" x2="2848.44" y2="583.00"/><line x1="500.67" y1="296.00" x2="2886.33" y2="583.00"/><line x1="501.45" y1="296.00" x2="2924.23" y2="583.00"/><line x1="502.23" y1="296.00" x2="2962.13" y2="583.00"/><line x1="503.00" y1="296.00" x2="3000.03" y2="583.00"/><line x1="503.78" y1="296.00" x2="3037.93" y2="583.00"/><line x1="504.55" y1="296.00" x2="3075.83" y2="583.00"/><line x1="505.33" y1="296.00" x2="3113.73" y2="583.00"/><line x1="506.88" y1="296.00" x2="3189.53" y2="583.00"/><line x1="507.66" y1="296.00" x2="3227.43" y2="583.00"/><line x1="508.44" y1="296.00" x2="3265.33" y2="583.00"/><line x1="509.21" y1="296.00" x2="3303.23" y2="583.00"/><line x1="509.99" y1="296.00" x2="3341.13" y2="583.00"/><line x1="510.76" y1="296.00" x2="3379.03" y2="583.00"/><line x1="511.54" y1="296.00" x2="3416.93" y2="583.00"/><line x1="512.32" y1="296.00" x2="3454.83" y2="583.00"/><line x1="513.09" y1="296.00" x2="3492.73" y2="583.00"/><line x1="514.64" y1="296.00" x2="3568.52" y2="583.00"/><line x1="515.42" y1="296.00" x2="3606.42" y2="583.00"/><line x1="516.20" y1="296.00" x2="3644.32" y2="583.00"/><line x1="516.97" y1="296.00" x2="3682.22" y2="583.00"/><line x1="517.75" y1="296.00" x2="3720.12" y2="583.00"/><line x1="518.52" y1="296.00" x2="3758.02" y2="583.00"/><line x1="519.30" y1="296.00" x2="3795.92" y2="583.00"/><line x1="520.08" y1="296.00" x2="3833.82" y2="583.00"/><line x1="520.85" y1="296.00" x2="3871.72" y2="583.00"/><line x1="522.41" y1="296.00" x2="3947.52" y2="583.00"/><line x1="523.18" y1="296.00" x2="3985.42" y2="583.00"/><line x1="523.96" y1="296.00" x2="4023.32" y2="583.00"/><line x1="524.73" y1="296.00" x2="4061.22" y2="583.00"/><line x1="525.51" y1="296.00" x2="4099.12" y2="583.00"/><line x1="526.29" y1="296.00" x2="4137.01" y2="583.00"/><line x1="527.06" y1="296.00" x2="4174.91" y2="583.00"/><line x1="527.84" y1="296.00" x2="4212.81" y2="583.00"/><line x1="528.61" y1="296.00" x2="4250.71" y2="583.00"/><line x1="530.17" y1="296.00" x2="4326.51" y2="583.00"/><line x1="530.94" y1="296.00" x2="4364.41" y2="583.00"/><line x1="531.72" y1="296.00" x2="4402.31" y2="583.00"/><line x1="532.49" y1="296.00" x2="4440.21" y2="583.00"/><line x1="533.27" y1="296.00" x2="4478.11" y2="583.00"/><line x1="534.05" y1="296.00" x2="4516.01" y2="583.00"/><line x1="534.82" y1="296.00" x2="4553.91" y2="583.00"/><line x1="535.60" y1="296.00" x2="4591.81" y2="583.00"/><line x1="536.37" y1="296.00" x2="4629.71" y2="583.00"/><line x1="537.93" y1="296.00" x2="4705.51" y2="583.00"/><line x1="538.70" y1="296.00" x2="4743.41" y2="583.00"/><line x1="539.48" y1="296.00" x2="4781.30" y2="583.00"/><line x1="540.26" y1="296.00" x2="4819.20" y2="583.00"/><line x1="541.03" y1="296.00" x2="4857.10" y2="583.00"/><line x1="541.81" y1="296.00" x2="4895.00" y2="583.00"/><line x1="542.58" y1="296.00" x2="4932.90" y2="583.00"/><line x1="543.36" y1="296.00" x2="4970.80" y2="583.00"/><line x1="544.14" y1="296.00" x2="5008.70" y2="583.00"/><line x1="545.69" y1="296.00" x2="5084.50" y2="583.00"/><line x1="546.46" y1="296.00" x2="5122.40" y2="583.00"/><line x1="547.24" y1="296.00" x2="5160.30" y2="583.00"/><line x1="548.02" y1="296.00" x2="5198.20" y2="583.00"/><line x1="548.79" y1="296.00" x2="5236.10" y2="583.00"/><line x1="549.57" y1="296.00" x2="5274.00" y2="583.00"/><line x1="550.34" y1="296.00" x2="5311.90" y2="583.00"/><line x1="551.12" y1="296.00" x2="5349.80" y2="583.00"/><line x1="551.90" y1="296.00" x2="5387.69" y2="583.00"/><line x1="553.45" y1="296.00" x2="5463.49" y2="583.00"/><line x1="554.23" y1="296.00" x2="5501.39" y2="583.00"/><line x1="555.00" y1="296.00" x2="5539.29" y2="583.00"/><line x1="555.78" y1="296.00" x2="5577.19" y2="583.00"/><line x1="556.55" y1="296.00" x2="5615.09" y2="583.00"/><line x1="557.33" y1="296.00" x2="5652.99" y2="583.00"/><line x1="558.11" y1="296.00" x2="5690.89" y2="583.00"/><line x1="558.88" y1="296.00" x2="5728.79" y2="583.00"/><line x1="559.66" y1="296.00" x2="5766.69" y2="583.00"/><line x1="561.21" y1="296.00" x2="5842.49" y2="583.00"/><line x1="561.99" y1="296.00" x2="5880.39" y2="583.00"/><line x1="562.76" y1="296.00" x2="5918.29" y2="583.00"/><line x1="563.54" y1="296.00" x2="5956.19" y2="583.00"/><line x1="564.31" y1="296.00" x2="5994.09" y2="583.00"/><line x1="565.09" y1="296.00" x2="6031.98" y2="583.00"/><line x1="565.87" y1="296.00" x2="6069.88" y2="583.00"/><line x1="566.64" y1="296.00" x2="6107.78" y2="583.00"/><line x1="567.42" y1="296.00" x2="6145.68" y2="583.00"/><line x1="568.97" y1="296.00" x2="6221.48" y2="583.00"/><line x1="569.75" y1="296.00" x2="6259.38" y2="583.00"/><line x1="570.52" y1="296.00" x2="6297.28" y2="583.00"/><line x1="571.30" y1="296.00" x2="6335.18" y2="583.00"/><line x1="572.08" y1="296.00" x2="6373.08" y2="583.00"/><line x1="572.85" y1="296.00" x2="6410.98" y2="583.00"/><line x1="573.63" y1="296.00" x2="6448.88" y2="583.00"/><line x1="574.40" y1="296.00" x2="6486.78" y2="583.00"/><line x1="575.18" y1="296.00" x2="6524.68" y2="583.00"/><line x1="576.73" y1="296.00" x2="6600.48" y2="583.00"/><line x1="577.51" y1="296.00" x2="6638.37" y2="583.00"/><line x1="578.28" y1="296.00" x2="6676.27" y2="583.00"/><line x1="579.06" y1="296.00" x2="6714.17" y2="583.00"/><line x1="579.84" y1="296.00" x2="6752.07" y2="583.00"/><line x1="580.61" y1="296.00" x2="6789.97" y2="583.00"/><line x1="581.39" y1="296.00" x2="6827.87" y2="583.00"/><line x1="582.16" y1="296.00" x2="6865.77" y2="583.00"/><line x1="582.94" y1="296.00" x2="6903.67" y2="583.00"/><line x1="584.49" y1="296.00" x2="6979.47" y2="583.00"/><line x1="585.27" y1="296.00" x2="7017.37" y2="583.00"/><line x1="586.05" y1="296.00" x2="7055.27" y2="583.00"/><line x1="586.82" y1="296.00" x2="7093.17" y2="583.00"/><line x1="587.60" y1="296.00" x2="7131.07" y2="583.00"/><line x1="588.37" y1="296.00" x2="7168.97" y2="583.00"/><line x1="589.15" y1="296.00" x2="7206.87" y2="583.00"/><line x1="589.93" y1="296.00" x2="7244.77" y2="583.00"/><line x1="590.70" y1="296.00" x2="7282.66" y2="583.00"/><line x1="592.25" y1="296.00" x2="7358.46" y2="583.00"/><line x1="593.03" y1="296.00" x2="7396.36" y2="583.00"/><line x1="593.81" y1="296.00" x2="7434.26" y2="583.00"/><line x1="594.58" y1="296.00" x2="7472.16" y2="583.00"/><line x1="595.36" y1="296.00" x2="7510.06" y2="583.00"/><line x1="596.13" y1="296.00" x2="7547.96" y2="583.00"/><line x1="596.91" y1="296.00" x2="7585.86" y2="583.00"/><line x1="597.69" y1="296.00" x2="7623.76" y2="583.00"/><line x1="598.46" y1="296.00" x2="7661.66" y2="583.00"/><line x1="600.01" y1="296.00" x2="7737.46" y2="583.00"/><line x1="600.79" y1="296.00" x2="7775.36" y2="583.00"/><line x1="601.57" y1="296.00" x2="7813.26" y2="583.00"/><line x1="602.34" y1="296.00" x2="7851.16" y2="583.00"/><line x1="603.12" y1="296.00" x2="7889.05" y2="583.00"/><line x1="603.90" y1="296.00" x2="7926.95" y2="583.00"/><line x1="604.67" y1="296.00" x2="7964.85" y2="583.00"/><line x1="605.45" y1="296.00" x2="8002.75" y2="583.00"/><line x1="606.22" y1="296.00" x2="8040.65" y2="583.00"/><line x1="607.78" y1="296.00" x2="8116.45" y2="583.00"/><line x1="608.55" y1="296.00" x2="8154.35" y2="583.00"/><line x1="609.33" y1="296.00" x2="8192.25" y2="583.00"/><line x1="610.10" y1="296.00" x2="8230.15" y2="583.00"/><line x1="610.88" y1="296.00" x2="8268.05" y2="583.00"/><line x1="611.66" y1="296.00" x2="8305.95" y2="583.00"/><line x1="612.43" y1="296.00" x2="8343.85" y2="583.00"/><line x1="613.21" y1="296.00" x2="8381.75" y2="583.00"/><line x1="613.98" y1="296.00" x2="8419.65" y2="583.00"/><line x1="615.54" y1="296.00" x2="8495.45" y2="583.00"/><line x1="616.31" y1="296.00" x2="8533.34" y2="583.00"/><line x1="617.09" y1="296.00" x2="8571.24" y2="583.00"/><line x1="617.87" y1="296.00" x2="8609.14" y2="583.00"/><line x1="618.64" y1="296.00" x2="8647.04" y2="583.00"/><line x1="619.42" y1="296.00" x2="8684.94" y2="583.00"/><line x1="620.19" y1="296.00" x2="8722.84" y2="583.00"/><line x1="620.97" y1="296.00" x2="8760.74" y2="583.00"/><line x1="621.75" y1="296.00" x2="8798.64" y2="583.00"/><line x1="623.30" y1="296.00" x2="8874.44" y2="583.00"/><line x1="624.07" y1="296.00" x2="8912.34" y2="583.00"/><line x1="624.85" y1="296.00" x2="8950.24" y2="583.00"/><line x1="625.63" y1="296.00" x2="8988.14" y2="583.00"/><line x1="626.40" y1="296.00" x2="9026.04" y2="583.00"/><line x1="627.18" y1="296.00" x2="9063.94" y2="583.00"/><line x1="627.95" y1="296.00" x2="9101.84" y2="583.00"/><line x1="628.73" y1="296.00" x2="9139.73" y2="583.00"/><line x1="629.51" y1="296.00" x2="9177.63" y2="583.00"/><line x1="631.06" y1="296.00" x2="9253.43" y2="583.00"/><line x1="631.83" y1="296.00" x2="9291.33" y2="583.00"/><line x1="632.61" y1="296.00" x2="9329.23" y2="583.00"/><line x1="633.39" y1="296.00" x2="9367.13" y2="583.00"/><line x1="634.16" y1="296.00" x2="9405.03" y2="583.00"/><line x1="634.94" y1="296.00" x2="9442.93" y2="583.00"/><line x1="635.72" y1="296.00" x2="9480.83" y2="583.00"/><line x1="636.49" y1="296.00" x2="9518.73" y2="583.00"/><line x1="637.27" y1="296.00" x2="9556.63" y2="583.00"/><line x1="638.82" y1="296.00" x2="9632.43" y2="583.00"/><line x1="639.60" y1="296.00" x2="9670.33" y2="583.00"/><line x1="640.37" y1="296.00" x2="9708.23" y2="583.00"/><line x1="641.15" y1="296.00" x2="9746.13" y2="583.00"/><line x1="641.92" y1="296.00" x2="9784.02" y2="583.00"/><line x1="642.70" y1="296.00" x2="9821.92" y2="583.00"/><line x1="643.48" y1="296.00" x2="9859.82" y2="583.00"/><line x1="644.25" y1="296.00" x2="9897.72" y2="583.00"/><line x1="645.03" y1="296.00" x2="9935.62" y2="583.00"/><line x1="646.58" y1="296.00" x2="10011.42" y2="583.00"/><line x1="647.36" y1="296.00" x2="10049.32" y2="583.00"/><line x1="648.13" y1="296.00" x2="10087.22" y2="583.00"/><line x1="648.91" y1="296.00" x2="10125.12" y2="583.00"/><line x1="649.69" y1="296.00" x2="10163.02" y2="583.00"/><line x1="650.46" y1="296.00" x2="10200.92" y2="583.00"/><line x1="651.24" y1="296.00" x2="10238.82" y2="583.00"/><line x1="652.01" y1="296.00" x2="10276.72" y2="583.00"/><line x1="652.79" y1="296.00" x2="10314.62" y2="583.00"/><line x1="654.34" y1="296.00" x2="10390.41" y2="583.00"/><line x1="655.12" y1="296.00" x2="10428.31" y2="583.00"/><line x1="655.89" y1="296.00" x2="10466.21" y2="583.00"/><line x1="656.67" y1="296.00" x2="10504.11" y2="583.00"/><line x1="657.45" y1="296.00" x2="10542.01" y2="583.00"/><line x1="658.22" y1="296.00" x2="10579.91" y2="583.00"/><line x1="659.00" y1="296.00" x2="10617.81" y2="583.00"/><line x1="659.77" y1="296.00" x2="10655.71" y2="583.00"/><line x1="660.55" y1="296.00" x2="10693.61" y2="583.00"/><line x1="662.10" y1="296.00" x2="10769.41" y2="583.00"/><line x1="662.88" y1="296.00" x2="10807.31" y2="583.00"/><line x1="663.65" y1="296.00" x2="10845.21" y2="583.00"/><line x1="664.43" y1="296.00" x2="10883.11" y2="583.00"/><line x1="665.21" y1="296.00" x2="10921.01" y2="583.00"/><line x1="665.98" y1="296.00" x2="10958.91" y2="583.00"/><line x1="666.76" y1="296.00" x2="10996.81" y2="583.00"/><line x1="667.54" y1="296.00" x2="11034.70" y2="583.00"/><line x1="668.31" y1="296.00" x2="11072.60" y2="583.00"/><line x1="669.86" y1="296.00" x2="11148.40" y2="583.00"/><line x1="670.64" y1="296.00" x2="11186.30" y2="583.00"/><line x1="671.42" y1="296.00" x2="11224.20" y2="583.00"/><line x1="672.19" y1="296.00" x2="11262.10" y2="583.00"/><line x1="672.97" y1="296.00" x2="11300.00" y2="583.00"/><line x1="673.74" y1="296.00" x2="11337.90" y2="583.00"/><line x1="674.52" y1="296.00" x2="11375.80" y2="583.00"/><line x1="675.30" y1="296.00" x2="11413.70" y2="583.00"/><line x1="676.07" y1="296.00" x2="11451.60" y2="583.00"/><line x1="677.62" y1="296.00" x2="11527.40" y2="583.00"/><line x1="678.40" y1="296.00" x2="11565.30" y2="583.00"/><line x1="679.18" y1="296.00" x2="11603.20" y2="583.00"/><line x1="679.95" y1="296.00" x2="11641.10" y2="583.00"/><line x1="680.73" y1="296.00" x2="11678.99" y2="583.00"/><line x1="681.50" y1="296.00" x2="11716.89" y2="583.00"/><line x1="682.28" y1="296.00" x2="11754.79" y2="583.00"/><line x1="683.06" y1="296.00" x2="11792.69" y2="583.00"/><line x1="683.83" y1="296.00" x2="11830.59" y2="583.00"/><line x1="685.39" y1="296.00" x2="11906.39" y2="583.00"/><line x1="686.16" y1="296.00" x2="11944.29" y2="583.00"/><line x1="686.94" y1="296.00" x2="11982.19" y2="583.00"/><line x1="687.71" y1="296.00" x2="12020.09" y2="583.00"/><line x1="688.49" y1="296.00" x2="12057.99" y2="583.00"/><line x1="689.27" y1="296.00" x2="12095.89" y2="583.00"/><line x1="690.04" y1="296.00" x2="12133.79" y2="583.00"/><line x1="690.82" y1="296.00" x2="12171.69" y2="583.00"/><line x1="691.59" y1="296.00" x2="12209.59" y2="583.00"/><line x1="693.15" y1="296.00" x2="12285.38" y2="583.00"/><line x1="693.92" y1="296.00" x2="12323.28" y2="583.00"/><line x1="694.70" y1="296.00" x2="12361.18" y2="583.00"/><line x1="695.47" y1="296.00" x2="12399.08" y2="583.00"/><line x1="696.25" y1="296.00" x2="12436.98" y2="583.00"/><line x1="697.03" y1="296.00" x2="12474.88" y2="583.00"/><line x1="697.80" y1="296.00" x2="12512.78" y2="583.00"/><line x1="698.58" y1="296.00" x2="12550.68" y2="583.00"/><line x1="699.36" y1="296.00" x2="12588.58" y2="583.00"/><line x1="700.91" y1="296.00" x2="12664.38" y2="583.00"/><line x1="701.68" y1="296.00" x2="12702.28" y2="583.00"/><line x1="702.46" y1="296.00" x2="12740.18" y2="583.00"/><line x1="703.24" y1="296.00" x2="12778.08" y2="583.00"/><line x1="704.01" y1="296.00" x2="12815.98" y2="583.00"/><line x1="704.79" y1="296.00" x2="12853.88" y2="583.00"/><line x1="705.56" y1="296.00" x2="12891.78" y2="583.00"/><line x1="706.34" y1="296.00" x2="12929.67" y2="583.00"/><line x1="707.12" y1="296.00" x2="12967.57" y2="583.00"/><line x1="708.67" y1="296.00" x2="13043.37" y2="583.00"/><line x1="709.44" y1="296.00" x2="13081.27" y2="583.00"/><line x1="710.22" y1="296.00" x2="13119.17" y2="583.00"/><line x1="711.00" y1="296.00" x2="13157.07" y2="583.00"/><line x1="711.77" y1="296.00" x2="13194.97" y2="583.00"/><line x1="712.55" y1="296.00" x2="13232.87" y2="583.00"/><line x1="713.32" y1="296.00" x2="13270.77" y2="583.00"/><line x1="714.10" y1="296.00" x2="13308.67" y2="583.00"/><line x1="714.88" y1="296.00" x2="13346.57" y2="583.00"/><line x1="716.43" y1="296.00" x2="13422.37" y2="583.00"/><line x1="717.21" y1="296.00" x2="13460.27" y2="583.00"/><line x1="717.98" y1="296.00" x2="13498.17" y2="583.00"/><line x1="718.76" y1="296.00" x2="13536.06" y2="583.00"/><line x1="719.53" y1="296.00" x2="13573.96" y2="583.00"/><line x1="720.31" y1="296.00" x2="13611.86" y2="583.00"/><line x1="721.09" y1="296.00" x2="13649.76" y2="583.00"/><line x1="721.86" y1="296.00" x2="13687.66" y2="583.00"/><line x1="722.64" y1="296.00" x2="13725.56" y2="583.00"/><line x1="724.19" y1="296.00" x2="13801.36" y2="583.00"/><line x1="724.97" y1="296.00" x2="13839.26" y2="583.00"/><line x1="725.74" y1="296.00" x2="13877.16" y2="583.00"/><line x1="726.52" y1="296.00" x2="13915.06" y2="583.00"/><line x1="727.29" y1="296.00" x2="13952.96" y2="583.00"/><line x1="728.07" y1="296.00" x2="13990.86" y2="583.00"/><line x1="728.85" y1="296.00" x2="14028.76" y2="583.00"/><line x1="729.62" y1="296.00" x2="14066.66" y2="583.00"/><line x1="730.40" y1="296.00" x2="14104.56" y2="583.00"/><line x1="731.95" y1="296.00" x2="14180.35" y2="583.00"/><line x1="732.73" y1="296.00" x2="14218.25" y2="583.00"/><line x1="733.50" y1="296.00" x2="14256.15" y2="583.00"/><line x1="734.28" y1="296.00" x2="14294.05" y2="583.00"/><line x1="735.06" y1="296.00" x2="14331.95" y2="583.00"/><line x1="735.83" y1="296.00" x2="14369.85" y2="583.00"/><line x1="736.61" y1="296.00" x2="14407.75" y2="583.00"/><line x1="737.38" y1="296.00" x2="14445.65" y2="583.00"/><line x1="738.16" y1="296.00" x2="14483.55" y2="583.00"/><line x1="739.71" y1="296.00" x2="14559.35" y2="583.00"/><line x1="740.49" y1="296.00" x2="14597.25" y2="583.00"/><line x1="741.26" y1="296.00" x2="14635.15" y2="583.00"/><line x1="742.04" y1="296.00" x2="14673.05" y2="583.00"/><line x1="742.82" y1="296.00" x2="14710.95" y2="583.00"/><line x1="743.59" y1="296.00" x2="14748.85" y2="583.00"/><line x1="744.37" y1="296.00" x2="14786.74" y2="583.00"/><line x1="745.14" y1="296.00" x2="14824.64" y2="583.00"/><line x1="745.92" y1="296.00" x2="14862.54" y2="583.00"/><line x1="747.47" y1="296.00" x2="14938.34" y2="583.00"/><line x1="748.25" y1="296.00" x2="14976.24" y2="583.00"/><line x1="749.03" y1="296.00" x2="15014.14" y2="583.00"/><line x1="749.80" y1="296.00" x2="15052.04" y2="583.00"/><line x1="750.58" y1="296.00" x2="15089.94" y2="583.00"/><line x1="751.35" y1="296.00" x2="15127.84" y2="583.00"/><line x1="752.13" y1="296.00" x2="15165.74" y2="583.00"/><line x1="752.91" y1="296.00" x2="15203.64" y2="583.00"/><line x1="753.68" y1="296.00" x2="15241.54" y2="583.00"/><line x1="755.23" y1="296.00" x2="15317.34" y2="583.00"/><line x1="756.01" y1="296.00" x2="15355.24" y2="583.00"/><line x1="756.79" y1="296.00" x2="15393.14" y2="583.00"/><line x1="757.56" y1="296.00" x2="15431.03" y2="583.00"/><line x1="758.34" y1="296.00" x2="15468.93" y2="583.00"/><line x1="759.11" y1="296.00" x2="15506.83" y2="583.00"/><line x1="759.89" y1="296.00" x2="15544.73" y2="583.00"/><line x1="760.67" y1="296.00" x2="15582.63" y2="583.00"/><line x1="761.44" y1="296.00" x2="15620.53" y2="583.00"/><line x1="0" y1="295.00" x2="902" y2="295.00"/><line x1="0" y1="295.01" x2="902" y2="295.01"/><line x1="0" y1="295.01" x2="902" y2="295.01"/><line x1="0" y1="295.02" x2="902" y2="295.02"/><line x1="0" y1="295.03" x2="902" y2="295.03"/><line x1="0" y1="295.03" x2="902" y2="295.03"/><line x1="0" y1="295.04" x2="902" y2="295.04"/><line x1="0" y1="295.04" x2="902" y2="295.04"/><line x1="0" y1="295.05" x2="902" y2="295.05"/><line x1="0" y1="295.05" x2="902" y2="295.05"/><line x1="0" y1="295.06" x2="902" y2="295.06"/><line x1="0" y1="295.06" x2="902" y2="295.06"/><line x1="0" y1="295.07" x2="902" y2="295.07"/><line x1="0" y1="295.08" x2="902" y2="295.08"/><line x1="0" y1="295.08" x2="902" y2="295.08"/><line x1="0" y1="295.09" x2="902" y2="295.09"/><line x1="0" y1="295.10" x2="902" y2="295.10"/><line x1="0" y1="295.10" x2="902" y2="295.10"/><line x1="0" y1="295.11" x2="902" y2="295.11"/><line x1="0" y1="295.11" x2="902" y2="295.11"/><line x1="0" y1="295.12" x2="902" y2="295.12"/><line x1="0" y1="295.12" x2="902" y2="295.12"/><line x1="0" y1="295.13" x2="902" y2="295.13"/><line x1="0" y1="295.14" x2="902" y2="295.14"/><line x1="0" y1="295.14" x2="902" y2="295.14"/><line x1="0" y1="295.15" x2="902" y2="295.15"/><line x1="0" y1="295.15" x2="902" y2="295.15"/><line x1="0" y1="295.16" x2="902" y2="295.16"/><line x1="0" y1="295.17" x2="902" y2="295.17"/><line x1="0" y1="295.17" x2="902" y2="295.17"/><line x1="0" y1="295.18" x2="902" y2="295.18"/><line x1="0" y1="295.19" x2="902" y2="295.19"/><line x1="0" y1="295.19" x2="902" y2="295.19"/><line x1="0" y1="295.20" x2="902" y2="295.20"/><line x1="0" y1="295.20" x2="902" y2="295.20"/><line x1="0" y1="295.21" x2="902" y2="295.21"/><line x1="0" y1="295.22" x2="902" y2="295.22"/><line x1="0" y1="295.22" x2="902" y2="295.22"/><line x1="0" y1="295.23" x2="902" y2="295.23"/><line x1="0" y1="295.23" x2="902" y2="295.23"/><line x1="0" y1="295.24" x2="902" y2="295.24"/><line x1="0" y1="295.25" x2="902" y2="295.25"/><line x1="0" y1="295.26" x2="902" y2="295.26"/><line x1="0" y1="295.26" x2="902" y2="295.26"/><line x1="0" y1="295.27" x2="902" y2="295.27"/><line x1="0" y1="295.27" x2="902" y2="295.27"/><line x1="0" y1="295.28" x2="902" y2="295.28"/><line x1="0" y1="295.28" x2="902" y2="295.28"/><line x1="0" y1="295.29" x2="902" y2="295.29"/><line x1="0" y1="295.30" x2="902" y2="295.30"/><line x1="0" y1="295.31" x2="902" y2="295.31"/><line x1="0" y1="295.31" x2="902" y2="295.31"/><line x1="0" y1="295.32" x2="902" y2="295.32"/><line x1="0" y1="295.32" x2="902" y2="295.32"/><line x1="0" y1="295.33" x2="902" y2="295.33"/><line x1="0" y1="295.34" x2="902" y2="295.34"/><line x1="0" y1="295.34" x2="902" y2="295.34"/><line x1="0" y1="295.35" x2="902" y2="295.35"/><line x1="0" y1="295.36" x2="902" y2="295.36"/><line x1="0" y1="295.37" x2="902" y2="295.37"/><line x1="0" y1="295.37" x2="902" y2="295.37"/><line x1="0" y1="295.38" x2="902" y2="295.38"/><line x1="0" y1="295.38" x2="902" y2="295.38"/><line x1="0" y1="295.39" x2="902" y2="295.39"/><line x1="0" y1="295.40" x2="902" y2="295.40"/><line x1="0" y1="295.40" x2="902" y2="295.40"/><line x1="0" y1="295.41" x2="902" y2="295.41"/><line x1="0" y1="295.42" x2="902" y2="295.42"/><line x1="0" y1="295.43" x2="902" y2="295.43"/><line x1="0" y1="295.43" x2="902" y2="295.43"/><line x1="0" y1="295.44" x2="902" y2="295.44"/><line x1="0" y1="295.44" x2="902" y2="295.44"/><line x1="0" y1="295.45" x2="902" y2="295.45"/><line x1="0" y1="295.46" x2="902" y2="295.46"/><line x1="0" y1="295.46" x2="902" y2="295.46"/><line x1="0" y1="295.47" x2="902" y2="295.47"/><line x1="0" y1="295.48" x2="902" y2="295.48"/><line x1="0" y1="295.49" x2="902" y2="295.49"/><line x1="0" y1="295.49" x2="902" y2="295.49"/><line x1="0" y1="295.50" x2="902" y2="295.50"/><line x1="0" y1="295.51" x2="902" y2="295.51"/><line x1="0" y1="295.51" x2="902" y2="295.51"/><line x1="0" y1="295.52" x2="902" y2="295.52"/><line x1="0" y1="295.52" x2="902" y2="295.52"/><line x1="0" y1="295.53" x2="902" y2="295.53"/><line x1="0" y1="295.54" x2="902" y2="295.54"/><line x1="0" y1="295.55" x2="902" y2="295.55"/><line x1="0" y1="295.56" x2="902" y2="295.56"/><line x1="0" y1="295.56" x2="902" y2="295.56"/><line x1="0" y1="295.57" x2="902" y2="295.57"/><line x1="0" y1="295.58" x2="902" y2="295.58"/><line x1="0" y1="295.58" x2="902" y2="295.58"/><line x1="0" y1="295.59" x2="902" y2="295.59"/><line x1="0" y1="295.59" x2="902" y2="295.59"/><line x1="0" y1="295.61" x2="902" y2="295.61"/><line x1="0" y1="295.61" x2="902" y2="295.61"/><line x1="0" y1="295.62" x2="902" y2="295.62"/><line x1="0" y1="295.63" x2="902" y2="295.63"/><line x1="0" y1="295.63" x2="902" y2="295.63"/><line x1="0" y1="295.64" x2="902" y2="295.64"/><line x1="0" y1="295.65" x2="902" y2="295.65"/><line x1="0" y1="295.65" x2="902" y2="295.65"/><line x1="0" y1="295.66" x2="902" y2="295.66"/><line x1="0" y1="295.67" x2="902" y2="295.67"/><line x1="0" y1="295.68" x2="902" y2="295.68"/><line x1="0" y1="295.69" x2="902" y2="295.69"/><line x1="0" y1="295.69" x2="902" y2="295.69"/><line x1="0" y1="295.70" x2="902" y2="295.70"/><line x1="0" y1="295.71" x2="902" y2="295.71"/><line x1="0" y1="295.71" x2="902" y2="295.71"/><line x1="0" y1="295.72" x2="902" y2="295.72"/><line x1="0" y1="295.73" x2="902" y2="295.73"/><line x1="0" y1="295.74" x2="902" y2="295.74"/><line x1="0" y1="295.75" x2="902" y2="295.75"/><line x1="0" y1="295.75" x2="902" y2="295.75"/><line x1="0" y1="295.76" x2="902" y2="295.76"/><line x1="0" y1="295.77" x2="902" y2="295.77"/><line x1="0" y1="295.77" x2="902" y2="295.77"/><line x1="0" y1="295.78" x2="902" y2="295.78"/><line x1="0" y1="295.79" x2="902" y2="295.79"/><line x1="0" y1="295.79" x2="902" y2="295.79"/><line x1="0" y1="295.81" x2="902" y2="295.81"/><line x1="0" y1="295.82" x2="902" y2="295.82"/><line x1="0" y1="295.82" x2="902" y2="295.82"/><line x1="0" y1="295.83" x2="902" y2="295.83"/><line x1="0" y1="295.84" x2="902" y2="295.84"/><line x1="0" y1="295.84" x2="902" y2="295.84"/><line x1="0" y1="295.85" x2="902" y2="295.85"/><line x1="0" y1="295.86" x2="902" y2="295.86"/><line x1="0" y1="295.86" x2="902" y2="295.86"/><line x1="0" y1="295.88" x2="902" y2="295.88"/><line x1="0" y1="295.89" x2="902" y2="295.89"/><line x1="0" y1="295.89" x2="902" y2="295.89"/><line x1="0" y1="295.90" x2="902" y2="295.90"/><line x1="0" y1="295.91" x2="902" y2="295.91"/><line x1="0" y1="295.91" x2="902" y2="295.91"/><line x1="0" y1="295.92" x2="902" y2="295.92"/><line x1="0" y1="295.93" x2="902" y2="295.93"/><line x1="0" y1="295.94" x2="902" y2="295.94"/><line x1="0" y1="295.95" x2="902" y2="295.95"/><line x1="0" y1="295.96" x2="902" y2="295.96"/><line x1="0" y1="295.97" x2="902" y2="295.97"/><line x1="0" y1="295.97" x2="902" y2="295.97"/><line x1="0" y1="295.98" x2="902" y2="295.98"/><line x1="0" y1="295.99" x2="902" y2="295.99"/><line x1="0" y1="296.00" x2="902" y2="296.00"/><line x1="0" y1="296.00" x2="902" y2="296.00"/><line x1="0" y1="296.01" x2="902" y2="296.01"/><line x1="0" y1="296.02" x2="902" y2="296.02"/><line x1="0" y1="296.03" x2="902" y2="296.03"/><line x1="0" y1="296.04" x2="902" y2="296.04"/><line x1="0" y1="296.05" x2="902" y2="296.05"/><line x1="0" y1="296.05" x2="902" y2="296.05"/><line x1="0" y1="296.06" x2="902" y2="296.06"/><line x1="0" y1="296.07" x2="902" y2="296.07"/><line x1="0" y1="296.08" x2="902" y2="296.08"/><line x1="0" y1="296.09" x2="902" y2="296.09"/><line x1="0" y1="296.10" x2="902" y2="296.10"/><line x1="0" y1="296.11" x2="902" y2="296.11"/><line x1="0" y1="296.12" x2="902" y2="296.12"/><line x1="0" y1="296.12" x2="902" y2="296.12"/><line x1="0" y1="296.13" x2="902" y2="296.13"/><line x1="0" y1="296.14" x2="902" y2="296.14"/><line x1="0" y1="296.15" x2="902" y2="296.15"/><line x1="0" y1="296.15" x2="902" y2="296.15"/><line x1="0" y1="296.16" x2="902" y2="296.16"/><line x1="0" y1="296.18" x2="902" y2="296.18"/><line x1="0" y1="296.19" x2="902" y2="296.19"/><line x1="0" y1="296.19" x2="902" y2="296.19"/><line x1="0" y1="296.20" x2="902" y2="296.20"/><line x1="0" y1="296.21" x2="902" y2="296.21"/><line x1="0" y1="296.22" x2="902" y2="296.22"/><line x1="0" y1="296.23" x2="902" y2="296.23"/><line x1="0" y1="296.23" x2="902" y2="296.23"/><line x1="0" y1="296.24" x2="902" y2="296.24"/><line x1="0" y1="296.26" x2="902" y2="296.26"/><line x1="0" y1="296.27" x2="902" y2="296.27"/><line x1="0" y1="296.27" x2="902" y2="296.27"/><line x1="0" y1="296.28" x2="902" y2="296.28"/><line x1="0" y1="296.29" x2="902" y2="296.29"/><line x1="0" y1="296.30" x2="902" y2="296.30"/><line x1="0" y1="296.31" x2="902" y2="296.31"/><line x1="0" y1="296.31" x2="902" y2="296.31"/><line x1="0" y1="296.32" x2="902" y2="296.32"/><line x1="0" y1="296.34" x2="902" y2="296.34"/><line x1="0" y1="296.35" x2="902" y2="296.35"/><line x1="0" y1="296.36" x2="902" y2="296.36"/><line x1="0" y1="296.36" x2="902" y2="296.36"/><line x1="0" y1="296.37" x2="902" y2="296.37"/><line x1="0" y1="296.38" x2="902" y2="296.38"/><line x1="0" y1="296.39" x2="902" y2="296.39"/><line x1="0" y1="296.40" x2="902" y2="296.40"/><line x1="0" y1="296.41" x2="902" y2="296.41"/><line x1="0" y1="296.42" x2="902" y2="296.42"/><line x1="0" y1="296.43" x2="902" y2="296.43"/><line x1="0" y1="296.44" x2="902" y2="296.44"/><line x1="0" y1="296.45" x2="902" y2="296.45"/><line x1="0" y1="296.46" x2="902" y2="296.46"/><line x1="0" y1="296.47" x2="902" y2="296.47"/><line x1="0" y1="296.47" x2="902" y2="296.47"/><line x1="0" y1="296.48" x2="902" y2="296.48"/><line x1="0" y1="296.49" x2="902" y2="296.49"/><line x1="0" y1="296.51" x2="902" y2="296.51"/><line x1="0" y1="296.52" x2="902" y2="296.52"/><line x1="0" y1="296.53" x2="902" y2="296.53"/><line x1="0" y1="296.54" x2="902" y2="296.54"/><line x1="0" y1="296.54" x2="902" y2="296.54"/><line x1="0" y1="296.55" x2="902" y2="296.55"/><line x1="0" y1="296.56" x2="902" y2="296.56"/><line x1="0" y1="296.57" x2="902" y2="296.57"/><line x1="0" y1="296.58" x2="902" y2="296.58"/><line x1="0" y1="296.60" x2="902" y2="296.60"/><line x1="0" y1="296.61" x2="902" y2="296.61"/><line x1="0" y1="296.62" x2="902" y2="296.62"/><line x1="0" y1="296.63" x2="902" y2="296.63"/><line x1="0" y1="296.63" x2="902" y2="296.63"/><line x1="0" y1="296.64" x2="902" y2="296.64"/><line x1="0" y1="296.65" x2="902" y2="296.65"/><line x1="0" y1="296.66" x2="902" y2="296.66"/><line x1="0" y1="296.67" x2="902" y2="296.67"/><line x1="0" y1="296.69" x2="902" y2="296.69"/><line x1="0" y1="296.70" x2="902" y2="296.70"/><line x1="0" y1="296.71" x2="902" y2="296.71"/><line x1="0" y1="296.72" x2="902" y2="296.72"/><line x1="0" y1="296.73" x2="902" y2="296.73"/><line x1="0" y1="296.74" x2="902" y2="296.74"/><line x1="0" y1="296.74" x2="902" y2="296.74"/><line x1="0" y1="296.75" x2="902" y2="296.75"/><line x1="0" y1="296.76" x2="902" y2="296.76"/><line x1="0" y1="296.78" x2="902" y2="296.78"/><line x1="0" y1="296.79" x2="902" y2="296.79"/><line x1="0" y1="296.80" x2="902" y2="296.80"/><line x1="0" y1="296.81" x2="902" y2="296.81"/><line x1="0" y1="296.82" x2="902" y2="296.82"/><line x1="0" y1="296.83" x2="902" y2="296.83"/><line x1="0" y1="296.84" x2="902" y2="296.84"/><line x1="0" y1="296.85" x2="902" y2="296.85"/><line x1="0" y1="296.86" x2="902" y2="296.86"/><line x1="0" y1="296.88" x2="902" y2="296.88"/><line x1="0" y1="296.89" x2="902" y2="296.89"/><line x1="0" y1="296.90" x2="902" y2="296.90"/><line x1="0" y1="296.91" x2="902" y2="296.91"/><line x1="0" y1="296.92" x2="902" y2="296.92"/><line x1="0" y1="296.93" x2="902" y2="296.93"/><line x1="0" y1="296.94" x2="902" y2="296.94"/><line x1="0" y1="296.95" x2="902" y2="296.95"/><line x1="0" y1="296.96" x2="902" y2="296.96"/><line x1="0" y1="296.98" x2="902" y2="296.98"/><line x1="0" y1="296.99" x2="902" y2="296.99"/><line x1="0" y1="297.00" x2="902" y2="297.00"/><line x1="0" y1="297.01" x2="902" y2="297.01"/><line x1="0" y1="297.02" x2="902" y2="297.02"/><line x1="0" y1="297.03" x2="902" y2="297.03"/><line x1="0" y1="297.04" x2="902" y2="297.04"/><line x1="0" y1="297.05" x2="902" y2="297.05"/><line x1="0" y1="297.06" x2="902" y2="297.06"/><line x1="0" y1="297.08" x2="902" y2="297.08"/><line x1="0" y1="297.09" x2="902" y2="297.09"/><line x1="0" y1="297.10" x2="902" y2="297.10"/><line x1="0" y1="297.11" x2="902" y2="297.11"/><line x1="0" y1="297.12" x2="902" y2="297.12"/><line x1="0" y1="297.13" x2="902" y2="297.13"/><line x1="0" y1="297.14" x2="902" y2="297.14"/><line x1="0" y1="297.15" x2="902" y2="297.15"/><line x1="0" y1="297.16" x2="902" y2="297.16"/><line x1="0" y1="297.18" x2="902" y2="297.18"/><line x1="0" y1="297.19" x2="902" y2="297.19"/><line x1="0" y1="297.21" x2="902" y2="297.21"/><line x1="0" y1="297.22" x2="902" y2="297.22"/><line x1="0" y1="297.23" x2="902" y2="297.23"/><line x1="0" y1="297.24" x2="902" y2="297.24"/><line x1="0" y1="297.25" x2="902" y2="297.25"/><line x1="0" y1="297.26" x2="902" y2="297.26"/><line x1="0" y1="297.27" x2="902" y2="297.27"/><line x1="0" y1="297.29" x2="902" y2="297.29"/><line x1="0" y1="297.30" x2="902" y2="297.30"/><line x1="0" y1="297.31" x2="902" y2="297.31"/><line x1="0" y1="297.32" x2="902" y2="297.32"/><line x1="0" y1="297.34" x2="902" y2="297.34"/><line x1="0" y1="297.35" x2="902" y2="297.35"/><line x1="0" y1="297.36" x2="902" y2="297.36"/><line x1="0" y1="297.37" x2="902" y2="297.37"/><line x1="0" y1="297.38" x2="902" y2="297.38"/><line x1="0" y1="297.40" x2="902" y2="297.40"/><line x1="0" y1="297.41" x2="902" y2="297.41"/><line x1="0" y1="297.43" x2="902" y2="297.43"/><line x1="0" y1="297.44" x2="902" y2="297.44"/><line x1="0" y1="297.45" x2="902" y2="297.45"/><line x1="0" y1="297.46" x2="902" y2="297.46"/><line x1="0" y1="297.47" x2="902" y2="297.47"/><line x1="0" y1="297.48" x2="902" y2="297.48"/><line x1="0" y1="297.49" x2="902" y2="297.49"/><line x1="0" y1="297.52" x2="902" y2="297.52"/><line x1="0" y1="297.53" x2="902" y2="297.53"/><line x1="0" y1="297.54" x2="902" y2="297.54"/><line x1="0" y1="297.55" x2="902" y2="297.55"/><line x1="0" y1="297.56" x2="902" y2="297.56"/><line x1="0" y1="297.58" x2="902" y2="297.58"/><line x1="0" y1="297.59" x2="902" y2="297.59"/><line x1="0" y1="297.60" x2="902" y2="297.60"/><line x1="0" y1="297.61" x2="902" y2="297.61"/><line x1="0" y1="297.64" x2="902" y2="297.64"/><line x1="0" y1="297.65" x2="902" y2="297.65"/><line x1="0" y1="297.66" x2="902" y2="297.66"/><line x1="0" y1="297.67" x2="902" y2="297.67"/><line x1="0" y1="297.68" x2="902" y2="297.68"/><line x1="0" y1="297.70" x2="902" y2="297.70"/><line x1="0" y1="297.71" x2="902" y2="297.71"/><line x1="0" y1="297.72" x2="902" y2="297.72"/><line x1="0" y1="297.73" x2="902" y2="297.73"/><line x1="0" y1="297.76" x2="902" y2="297.76"/><line x1="0" y1="297.77" x2="902" y2="297.77"/><line x1="0" y1="297.78" x2="902" y2="297.78"/><line x1="0" y1="297.80" x2="902" y2="297.80"/><line x1="0" y1="297.81" x2="902" y2="297.81"/><line x1="0" y1="297.82" x2="902" y2="297.82"/><line x1="0" y1="297.83" x2="902" y2="297.83"/><line x1="0" y1="297.85" x2="902" y2="297.85"/><line x1="0" y1="297.86" x2="902" y2="297.86"/><line x1="0" y1="297.88" x2="902" y2="297.88"/><line x1="0" y1="297.90" x2="902" y2="297.90"/><line x1="0" y1="297.91" x2="902" y2="297.91"/><line x1="0" y1="297.92" x2="902" y2="297.92"/><line x1="0" y1="297.94" x2="902" y2="297.94"/><line x1="0" y1="297.95" x2="902" y2="297.95"/><line x1="0" y1="297.96" x2="902" y2="297.96"/><line x1="0" y1="297.97" x2="902" y2="297.97"/><line x1="0" y1="297.99" x2="902" y2="297.99"/><line x1="0" y1="298.01" x2="902" y2="298.01"/><line x1="0" y1="298.03" x2="902" y2="298.03"/><line x1="0" y1="298.04" x2="902" y2="298.04"/><line x1="0" y1="298.05" x2="902" y2="298.05"/><line x1="0" y1="298.07" x2="902" y2="298.07"/><line x1="0" y1="298.08" x2="902" y2="298.08"/><line x1="0" y1="298.09" x2="902" y2="298.09"/><line x1="0" y1="298.11" x2="902" y2="298.11"/><line x1="0" y1="298.12" x2="902" y2="298.12"/><line x1="0" y1="298.15" x2="902" y2="298.15"/><line x1="0" y1="298.16" x2="902" y2="298.16"/><line x1="0" y1="298.18" x2="902" y2="298.18"/><line x1="0" y1="298.19" x2="902" y2="298.19"/><line x1="0" y1="298.20" x2="902" y2="298.20"/><line x1="0" y1="298.22" x2="902" y2="298.22"/><line x1="0" y1="298.23" x2="902" y2="298.23"/><line x1="0" y1="298.25" x2="902" y2="298.25"/><line x1="0" y1="298.26" x2="902" y2="298.26"/><line x1="0" y1="298.29" x2="902" y2="298.29"/><line x1="0" y1="298.30" x2="902" y2="298.30"/><line x1="0" y1="298.32" x2="902" y2="298.32"/><line x1="0" y1="298.33" x2="902" y2="298.33"/><line x1="0" y1="298.34" x2="902" y2="298.34"/><line x1="0" y1="298.36" x2="902" y2="298.36"/><line x1="0" y1="298.37" x2="902" y2="298.37"/><line x1="0" y1="298.39" x2="902" y2="298.39"/><line x1="0" y1="298.40" x2="902" y2="298.40"/><line x1="0" y1="298.43" x2="902" y2="298.43"/><line x1="0" y1="298.45" x2="902" y2="298.45"/><line x1="0" y1="298.46" x2="902" y2="298.46"/><line x1="0" y1="298.48" x2="902" y2="298.48"/><line x1="0" y1="298.49" x2="902" y2="298.49"/><line x1="0" y1="298.51" x2="902" y2="298.51"/><line x1="0" y1="298.52" x2="902" y2="298.52"/><line x1="0" y1="298.54" x2="902" y2="298.54"/><line x1="0" y1="298.55" x2="902" y2="298.55"/><line x1="0" y1="298.58" x2="902" y2="298.58"/><line x1="0" y1="298.60" x2="902" y2="298.60"/><line x1="0" y1="298.61" x2="902" y2="298.61"/><line x1="0" y1="298.63" x2="902" y2="298.63"/><line x1="0" y1="298.64" x2="902" y2="298.64"/><line x1="0" y1="298.66" x2="902" y2="298.66"/><line x1="0" y1="298.67" x2="902" y2="298.67"/><line x1="0" y1="298.69" x2="902" y2="298.69"/><line x1="0" y1="298.70" x2="902" y2="298.70"/><line x1="0" y1="298.74" x2="902" y2="298.74"/><line x1="0" y1="298.75" x2="902" y2="298.75"/><line x1="0" y1="298.77" x2="902" y2="298.77"/><line x1="0" y1="298.78" x2="902" y2="298.78"/><line x1="0" y1="298.80" x2="902" y2="298.80"/><line x1="0" y1="298.81" x2="902" y2="298.81"/><line x1="0" y1="298.83" x2="902" y2="298.83"/><line x1="0" y1="298.85" x2="902" y2="298.85"/><line x1="0" y1="298.86" x2="902" y2="298.86"/><line x1="0" y1="298.90" x2="902" y2="298.90"/><line x1="0" y1="298.91" x2="902" y2="298.91"/><line x1="0" y1="298.93" x2="902" y2="298.93"/><line x1="0" y1="298.94" x2="902" y2="298.94"/><line x1="0" y1="298.96" x2="902" y2="298.96"/><line x1="0" y1="298.98" x2="902" y2="298.98"/><line x1="0" y1="298.99" x2="902" y2="298.99"/><line x1="0" y1="299.01" x2="902" y2="299.01"/><line x1="0" y1="299.03" x2="902" y2="299.03"/><line x1="0" y1="299.06" x2="902" y2="299.06"/><line x1="0" y1="299.08" x2="902" y2="299.08"/><line x1="0" y1="299.10" x2="902" y2="299.10"/><line x1="0" y1="299.11" x2="902" y2="299.11"/><line x1="0" y1="299.13" x2="902" y2="299.13"/><line x1="0" y1="299.15" x2="902" y2="299.15"/><line x1="0" y1="299.16" x2="902" y2="299.16"/><line x1="0" y1="299.18" x2="902" y2="299.18"/><line x1="0" y1="299.20" x2="902" y2="299.20"/><line x1="0" y1="299.23" x2="902" y2="299.23"/><line x1="0" y1="299.25" x2="902" y2="299.25"/><line x1="0" y1="299.27" x2="902" y2="299.27"/><line x1="0" y1="299.29" x2="902" y2="299.29"/><line x1="0" y1="299.30" x2="902" y2="299.30"/><line x1="0" y1="299.32" x2="902" y2="299.32"/><line x1="0" y1="299.34" x2="902" y2="299.34"/><line x1="0" y1="299.36" x2="902" y2="299.36"/><line x1="0" y1="299.38" x2="902" y2="299.38"/><line x1="0" y1="299.41" x2="902" y2="299.41"/><line x1="0" y1="299.43" x2="902" y2="299.43"/><line x1="0" y1="299.45" x2="902" y2="299.45"/><line x1="0" y1="299.47" x2="902" y2="299.47"/><line x1="0" y1="299.49" x2="902" y2="299.49"/><line x1="0" y1="299.50" x2="902" y2="299.50"/><line x1="0" y1="299.52" x2="902" y2="299.52"/><line x1="0" y1="299.54" x2="902" y2="299.54"/><line x1="0" y1="299.56" x2="902" y2="299.56"/><line x1="0" y1="299.60" x2="902" y2="299.60"/><line x1="0" y1="299.62" x2="902" y2="299.62"/><line x1="0" y1="299.64" x2="902" y2="299.64"/><line x1="0" y1="299.66" x2="902" y2="299.66"/><line x1="0" y1="299.68" x2="902" y2="299.68"/><line x1="0" y1="299.69" x2="902" y2="299.69"/><line x1="0" y1="299.71" x2="902" y2="299.71"/><line x1="0" y1="299.73" x2="902" y2="299.73"/><line x1="0" y1="299.75" x2="902" y2="299.75"/><line x1="0" y1="299.79" x2="902" y2="299.79"/><line x1="0" y1="299.81" x2="902" y2="299.81"/><line x1="0" y1="299.83" x2="902" y2="299.83"/><line x1="0" y1="299.85" x2="902" y2="299.85"/><line x1="0" y1="299.87" x2="902" y2="299.87"/><line x1="0" y1="299.89" x2="902" y2="299.89"/><line x1="0" y1="299.91" x2="902" y2="299.91"/><line x1="0" y1="299.93" x2="902" y2="299.93"/><line x1="0" y1="299.95" x2="902" y2="299.95"/><line x1="0" y1="299.99" x2="902" y2="299.99"/><line x1="0" y1="300.01" x2="902" y2="300.01"/><line x1="0" y1="300.04" x2="902" y2="300.04"/><line x1="0" y1="300.06" x2="902" y2="300.06"/><line x1="0" y1="300.08" x2="902" y2="300.08"/><line x1="0" y1="300.10" x2="902" y2="300.10"/><line x1="0" y1="300.12" x2="902" y2="300.12"/><line x1="0" y1="300.14" x2="902" y2="300.14"/><line x1="0" y1="300.16" x2="902" y2="300.16"/><line x1="0" y1="300.20" x2="902" y2="300.20"/><line x1="0" y1="300.23" x2="902" y2="300.23"/><line x1="0" y1="300.25" x2="902" y2="300.25"/><line x1="0" y1="300.27" x2="902" y2="300.27"/><line x1="0" y1="300.29" x2="902" y2="300.29"/><line x1="0" y1="300.31" x2="902" y2="300.31"/><line x1="0" y1="300.33" x2="902" y2="300.33"/><line x1="0" y1="300.36" x2="902" y2="300.36"/><line x1="0" y1="300.38" x2="902" y2="300.38"/><line x1="0" y1="300.42" x2="902" y2="300.42"/><line x1="0" y1="300.45" x2="902" y2="300.45"/><line x1="0" y1="300.47" x2="902" y2="300.47"/><line x1="0" y1="300.49" x2="902" y2="300.49"/><line x1="0" y1="300.51" x2="902" y2="300.51"/><line x1="0" y1="300.54" x2="902" y2="300.54"/><line x1="0" y1="300.56" x2="902" y2="300.56"/><line x1="0" y1="300.58" x2="902" y2="300.58"/><line x1="0" y1="300.61" x2="902" y2="300.61"/><line x1="0" y1="300.65" x2="902" y2="300.65"/><line x1="0" y1="300.68" x2="902" y2="300.68"/><line x1="0" y1="300.70" x2="902" y2="300.70"/><line x1="0" y1="300.72" x2="902" y2="300.72"/><line x1="0" y1="300.75" x2="902" y2="300.75"/><line x1="0" y1="300.77" x2="902" y2="300.77"/><line x1="0" y1="300.79" x2="902" y2="300.79"/><line x1="0" y1="300.82" x2="902" y2="300.82"/><line x1="0" y1="300.84" x2="902" y2="300.84"/><line x1="0" y1="300.89" x2="902" y2="300.89"/><line x1="0" y1="300.92" x2="902" y2="300.92"/><line x1="0" y1="300.94" x2="902" y2="300.94"/><line x1="0" y1="300.96" x2="902" y2="300.96"/><line x1="0" y1="300.99" x2="902" y2="300.99"/><line x1="0" y1="301.01" x2="902" y2="301.01"/><line x1="0" y1="301.04" x2="902" y2="301.04"/><line x1="0" y1="301.06" x2="902" y2="301.06"/><line x1="0" y1="301.09" x2="902" y2="301.09"/><line x1="0" y1="301.14" x2="902" y2="301.14"/><line x1="0" y1="301.17" x2="902" y2="301.17"/><line x1="0" y1="301.19" x2="902" y2="301.19"/><line x1="0" y1="301.22" x2="902" y2="301.22"/><line x1="0" y1="301.24" x2="902" y2="301.24"/><line x1="0" y1="301.27" x2="902" y2="301.27"/><line x1="0" y1="301.30" x2="902" y2="301.30"/><line x1="0" y1="301.32" x2="902" y2="301.32"/><line x1="0" y1="301.35" x2="902" y2="301.35"/><line x1="0" y1="301.40" x2="902" y2="301.40"/><line x1="0" y1="301.43" x2="902" y2="301.43"/><line x1="0" y1="301.46" x2="902" y2="301.46"/><line x1="0" y1="301.48" x2="902" y2="301.48"/><line x1="0" y1="301.51" x2="902" y2="301.51"/><line x1="0" y1="301.54" x2="902" y2="301.54"/><line x1="0" y1="301.57" x2="902" y2="301.57"/><line x1="0" y1="301.59" x2="902" y2="301.59"/><line x1="0" y1="301.62" x2="902" y2="301.62"/><line x1="0" y1="301.68" x2="902" y2="301.68"/><line x1="0" y1="301.71" x2="902" y2="301.71"/><line x1="0" y1="301.73" x2="902" y2="301.73"/><line x1="0" y1="301.76" x2="902" y2="301.76"/><line x1="0" y1="301.79" x2="902" y2="301.79"/><line x1="0" y1="301.82" x2="902" y2="301.82"/><line x1="0" y1="301.85" x2="902" y2="301.85"/><line x1="0" y1="301.88" x2="902" y2="301.88"/><line x1="0" y1="301.91" x2="902" y2="301.91"/><line x1="0" y1="301.96" x2="902" y2="301.96"/><line x1="0" y1="301.99" x2="902" y2="301.99"/><line x1="0" y1="302.02" x2="902" y2="302.02"/><line x1="0" y1="302.05" x2="902" y2="302.05"/><line x1="0" y1="302.08" x2="902" y2="302.08"/><line x1="0" y1="302.11" x2="902" y2="302.11"/><line x1="0" y1="302.14" x2="902" y2="302.14"/><line x1="0" y1="302.17" x2="902" y2="302.17"/><line x1="0" y1="302.21" x2="902" y2="302.21"/><line x1="0" y1="302.27" x2="902" y2="302.27"/><line x1="0" y1="302.30" x2="902" y2="302.30"/><line x1="0" y1="302.33" x2="902" y2="302.33"/><line x1="0" y1="302.36" x2="902" y2="302.36"/><line x1="0" y1="302.39" x2="902" y2="302.39"/><line x1="0" y1="302.42" x2="902" y2="302.42"/><line x1="0" y1="302.46" x2="902" y2="302.46"/><line x1="0" y1="302.49" x2="902" y2="302.49"/><line x1="0" y1="302.52" x2="902" y2="302.52"/><line x1="0" y1="302.59" x2="902" y2="302.59"/><line x1="0" y1="302.62" x2="902" y2="302.62"/><line x1="0" y1="302.65" x2="902" y2="302.65"/><line x1="0" y1="302.68" x2="902" y2="302.68"/><line x1="0" y1="302.72" x2="902" y2="302.72"/><line x1="0" y1="302.75" x2="902" y2="302.75"/><line x1="0" y1="302.78" x2="902" y2="302.78"/><line x1="0" y1="302.82" x2="902" y2="302.82"/><line x1="0" y1="302.85" x2="902" y2="302.85"/><line x1="0" y1="302.92" x2="902" y2="302.92"/><line x1="0" y1="302.95" x2="902" y2="302.95"/><line x1="0" y1="302.99" x2="902" y2="302.99"/><line x1="0" y1="303.02" x2="902" y2="303.02"/><line x1="0" y1="303.06" x2="902" y2="303.06"/><line x1="0" y1="303.09" x2="902" y2="303.09"/><line x1="0" y1="303.13" x2="902" y2="303.13"/><line x1="0" y1="303.17" x2="902" y2="303.17"/><line x1="0" y1="303.20" x2="902" y2="303.20"/><line x1="0" y1="303.27" x2="902" y2="303.27"/><line x1="0" y1="303.31" x2="902" y2="303.31"/><line x1="0" y1="303.35" x2="902" y2="303.35"/><line x1="0" y1="303.38" x2="902" y2="303.38"/><line x1="0" y1="303.42" x2="902" y2="303.42"/><line x1="0" y1="303.46" x2="902" y2="303.46"/><line x1="0" y1="303.49" x2="902" y2="303.49"/><line x1="0" y1="303.53" x2="902" y2="303.53"/><line x1="0" y1="303.57" x2="902" y2="303.57"/><line x1="0" y1="303.65" x2="902" y2="303.65"/><line x1="0" y1="303.69" x2="902" y2="303.69"/><line x1="0" y1="303.72" x2="902" y2="303.72"/><line x1="0" y1="303.76" x2="902" y2="303.76"/><line x1="0" y1="303.80" x2="902" y2="303.80"/><line x1="0" y1="303.84" x2="902" y2="303.84"/><line x1="0" y1="303.88" x2="902" y2="303.88"/><line x1="0" y1="303.92" x2="902" y2="303.92"/><line x1="0" y1="303.96" x2="902" y2="303.96"/><line x1="0" y1="304.04" x2="902" y2="304.04"/><line x1="0" y1="304.08" x2="902" y2="304.08"/><line x1="0" y1="304.12" x2="902" y2="304.12"/><line x1="0" y1="304.16" x2="902" y2="304.16"/><line x1="0" y1="304.21" x2="902" y2="304.21"/><line x1="0" y1="304.25" x2="902" y2="304.25"/><line x1="0" y1="304.29" x2="902" y2="304.29"/><line x1="0" y1="304.33" x2="902" y2="304.33"/><line x1="0" y1="304.37" x2="902" y2="304.37"/><line x1="0" y1="304.46" x2="902" y2="304.46"/><line x1="0" y1="304.50" x2="902" y2="304.50"/><line x1="0" y1="304.55" x2="902" y2="304.55"/><line x1="0" y1="304.59" x2="902" y2="304.59"/><line x1="0" y1="304.63" x2="902" y2="304.63"/><line x1="0" y1="304.68" x2="902" y2="304.68"/><line x1="0" y1="304.72" x2="902" y2="304.72"/><line x1="0" y1="304.77" x2="902" y2="304.77"/><line x1="0" y1="304.81" x2="902" y2="304.81"/><line x1="0" y1="304.90" x2="902" y2="304.90"/><line x1="0" y1="304.95" x2="902" y2="304.95"/><line x1="0" y1="305.00" x2="902" y2="305.00"/><line x1="0" y1="305.04" x2="902" y2="305.04"/><line x1="0" y1="305.09" x2="902" y2="305.09"/><line x1="0" y1="305.14" x2="902" y2="305.14"/><line x1="0" y1="305.18" x2="902" y2="305.18"/><line x1="0" y1="305.23" x2="902" y2="305.23"/><line x1="0" y1="305.28" x2="902" y2="305.28"/><line x1="0" y1="305.38" x2="902" y2="305.38"/><line x1="0" y1="305.42" x2="902" y2="305.42"/><line x1="0" y1="305.47" x2="902" y2="305.47"/><line x1="0" y1="305.52" x2="902" y2="305.52"/><line x1="0" y1="305.57" x2="902" y2="305.57"/><line x1="0" y1="305.62" x2="902" y2="305.62"/><line x1="0" y1="305.67" x2="902" y2="305.67"/><line x1="0" y1="305.72" x2="902" y2="305.72"/><line x1="0" y1="305.78" x2="902" y2="305.78"/><line x1="0" y1="305.88" x2="902" y2="305.88"/><line x1="0" y1="305.93" x2="902" y2="305.93"/><line x1="0" y1="305.98" x2="902" y2="305.98"/><line x1="0" y1="306.04" x2="902" y2="306.04"/><line x1="0" y1="306.09" x2="902" y2="306.09"/><line x1="0" y1="306.14" x2="902" y2="306.14"/><line x1="0" y1="306.20" x2="902" y2="306.20"/><line x1="0" y1="306.25" x2="902" y2="306.25"/><line x1="0" y1="306.31" x2="902" y2="306.31"/><line x1="0" y1="306.42" x2="902" y2="306.42"/><line x1="0" y1="306.47" x2="902" y2="306.47"/><line x1="0" y1="306.53" x2="902" y2="306.53"/><line x1="0" y1="306.58" x2="902" y2="306.58"/><line x1="0" y1="306.64" x2="902" y2="306.64"/><line x1="0" y1="306.70" x2="902" y2="306.70"/><line x1="0" y1="306.76" x2="902" y2="306.76"/><line x1="0" y1="306.81" x2="902" y2="306.81"/><line x1="0" y1="306.87" x2="902" y2="306.87"/><line x1="0" y1="306.99" x2="902" y2="306.99"/><line x1="0" y1="307.05" x2="902" y2="307.05"/><line x1="0" y1="307.11" x2="902" y2="307.11"/><line x1="0" y1="307.17" x2="902" y2="307.17"/><line x1="0" y1="307.23" x2="902" y2="307.23"/><line x1="0" y1="307.29" x2="902" y2="307.29"/><line x1="0" y1="307.35" x2="902" y2="307.35"/><line x1="0" y1="307.42" x2="902" y2="307.42"/><line x1="0" y1="307.48" x2="902" y2="307.48"/><line x1="0" y1="307.61" x2="902" y2="307.61"/><line x1="0" y1="307.67" x2="902" y2="307.67"/><line x1="0" y1="307.73" x2="902" y2="307.73"/><line x1="0" y1="307.80" x2="902" y2="307.80"/><line x1="0" y1="307.87" x2="902" y2="307.87"/><line x1="0" y1="307.93" x2="902" y2="307.93"/><line x1="0" y1="308.00" x2="902" y2="308.00"/><line x1="0" y1="308.06" x2="902" y2="308.06"/><line x1="0" y1="308.13" x2="902" y2="308.13"/><line x1="0" y1="308.27" x2="902" y2="308.27"/><line x1="0" y1="308.34" x2="902" y2="308.34"/><line x1="0" y1="308.41" x2="902" y2="308.41"/><line x1="0" y1="308.48" x2="902" y2="308.48"/><line x1="0" y1="308.55" x2="902" y2="308.55"/><line x1="0" y1="308.62" x2="902" y2="308.62"/><line x1="0" y1="308.69" x2="902" y2="308.69"/><line x1="0" y1="308.76" x2="902" y2="308.76"/><line x1="0" y1="308.84" x2="902" y2="308.84"/><line x1="0" y1="308.98" x2="902" y2="308.98"/><line x1="0" y1="309.06" x2="902" y2="309.06"/><line x1="0" y1="309.13" x2="902" y2="309.13"/><line x1="0" y1="309.21" x2="902" y2="309.21"/><line x1="0" y1="309.28" x2="902" y2="309.28"/><line x1="0" y1="309.36" x2="902" y2="309.36"/><line x1="0" y1="309.44" x2="902" y2="309.44"/><line x1="0" y1="309.52" x2="902" y2="309.52"/><line x1="0" y1="309.60" x2="902" y2="309.60"/><line x1="0" y1="309.76" x2="902" y2="309.76"/><line x1="0" y1="309.84" x2="902" y2="309.84"/><line x1="0" y1="309.92" x2="902" y2="309.92"/><line x1="0" y1="310.00" x2="902" y2="310.00"/><line x1="0" y1="310.08" x2="902" y2="310.08"/><line x1="0" y1="310.17" x2="902" y2="310.17"/><line x1="0" y1="310.25" x2="902" y2="310.25"/><line x1="0" y1="310.34" x2="902" y2="310.34"/><line x1="0" y1="310.42" x2="902" y2="310.42"/><line x1="0" y1="310.59" x2="902" y2="310.59"/><line x1="0" y1="310.68" x2="902" y2="310.68"/><line x1="0" y1="310.77" x2="902" y2="310.77"/><line x1="0" y1="310.86" x2="902" y2="310.86"/><line x1="0" y1="310.95" x2="902" y2="310.95"/><line x1="0" y1="311.04" x2="902" y2="311.04"/><line x1="0" y1="311.13" x2="902" y2="311.13"/><line x1="0" y1="311.22" x2="902" y2="311.22"/><line x1="0" y1="311.32" x2="902" y2="311.32"/><line x1="0" y1="311.51" x2="902" y2="311.51"/><line x1="0" y1="311.60" x2="902" y2="311.60"/><line x1="0" y1="311.70" x2="902" y2="311.70"/><line x1="0" y1="311.80" x2="902" y2="311.80"/><line x1="0" y1="311.89" x2="902" y2="311.89"/><line x1="0" y1="311.99" x2="902" y2="311.99"/><line x1="0" y1="312.09" x2="902" y2="312.09"/><line x1="0" y1="312.19" x2="902" y2="312.19"/><line x1="0" y1="312.30" x2="902" y2="312.30"/><line x1="0" y1="312.50" x2="902" y2="312.50"/><line x1="0" y1="312.61" x2="902" y2="312.61"/><line x1="0" y1="312.71" x2="902" y2="312.71"/><line x1="0" y1="312.82" x2="902" y2="312.82"/><line x1="0" y1="312.93" x2="902" y2="312.93"/><line x1="0" y1="313.04" x2="902" y2="313.04"/><line x1="0" y1="313.15" x2="902" y2="313.15"/><line x1="0" y1="313.26" x2="902" y2="313.26"/><line x1="0" y1="313.37" x2="902" y2="313.37"/><line x1="0" y1="313.60" x2="902" y2="313.60"/><line x1="0" y1="313.71" x2="902" y2="313.71"/><line x1="0" y1="313.83" x2="902" y2="313.83"/><line x1="0" y1="313.95" x2="902" y2="313.95"/><line x1="0" y1="314.06" x2="902" y2="314.06"/><line x1="0" y1="314.18" x2="902" y2="314.18"/><line x1="0" y1="314.31" x2="902" y2="314.31"/><line x1="0" y1="314.43" x2="902" y2="314.43"/><line x1="0" y1="314.55" x2="902" y2="314.55"/><line x1="0" y1="314.80" x2="902" y2="314.80"/><line x1="0" y1="314.93" x2="902" y2="314.93"/><line x1="0" y1="315.06" x2="902" y2="315.06"/><line x1="0" y1="315.19" x2="902" y2="315.19"/><line x1="0" y1="315.32" x2="902" y2="315.32"/><line x1="0" y1="315.45" x2="902" y2="315.45"/><line x1="0" y1="315.59" x2="902" y2="315.59"/><line x1="0" y1="315.72" x2="902" y2="315.72"/><line x1="0" y1="315.86" x2="902" y2="315.86"/><line x1="0" y1="316.14" x2="902" y2="316.14"/><line x1="0" y1="316.28" x2="902" y2="316.28"/><line x1="0" y1="316.42" x2="902" y2="316.42"/><line x1="0" y1="316.57" x2="902" y2="316.57"/><line x1="0" y1="316.71" x2="902" y2="316.71"/><line x1="0" y1="316.86" x2="902" y2="316.86"/><line x1="0" y1="317.01" x2="902" y2="317.01"/><line x1="0" y1="317.16" x2="902" y2="317.16"/><line x1="0" y1="317.31" x2="902" y2="317.31"/><line x1="0" y1="317.63" x2="902" y2="317.63"/><line x1="0" y1="317.78" x2="902" y2="317.78"/><line x1="0" y1="317.94" x2="902" y2="317.94"/><line x1="0" y1="318.11" x2="902" y2="318.11"/><line x1="0" y1="318.27" x2="902" y2="318.27"/><line x1="0" y1="318.43" x2="902" y2="318.43"/><line x1="0" y1="318.60" x2="902" y2="318.60"/><line x1="0" y1="318.77" x2="902" y2="318.77"/><line x1="0" y1="318.94" x2="902" y2="318.94"/><line x1="0" y1="319.29" x2="902" y2="319.29"/><line x1="0" y1="319.47" x2="902" y2="319.47"/><line x1="0" y1="319.65" x2="902" y2="319.65"/><line x1="0" y1="319.83" x2="902" y2="319.83"/><line x1="0" y1="320.02" x2="902" y2="320.02"/><line x1="0" y1="320.20" x2="902" y2="320.20"/><line x1="0" y1="320.39" x2="902" y2="320.39"/><line x1="0" y1="320.58" x2="902" y2="320.58"/><line x1="0" y1="320.78" x2="902" y2="320.78"/><line x1="0" y1="321.17" x2="902" y2="321.17"/><line x1="0" y1="321.38" x2="902" y2="321.38"/><line x1="0" y1="321.58" x2="902" y2="321.58"/><line x1="0" y1="321.79" x2="902" y2="321.79"/><line x1="0" y1="322.00" x2="902" y2="322.00"/><line x1="0" y1="322.21" x2="902" y2="322.21"/><line x1="0" y1="322.42" x2="902" y2="322.42"/><line x1="0" y1="322.64" x2="902" y2="322.64"/><line x1="0" y1="322.86" x2="902" y2="322.86"/><line x1="0" y1="323.31" x2="902" y2="323.31"/><line x1="0" y1="323.54" x2="902" y2="323.54"/><line x1="0" y1="323.78" x2="902" y2="323.78"/><line x1="0" y1="324.01" x2="902" y2="324.01"/><line x1="0" y1="324.25" x2="902" y2="324.25"/><line x1="0" y1="324.50" x2="902" y2="324.50"/><line x1="0" y1="324.74" x2="902" y2="324.74"/><line x1="0" y1="324.99" x2="902" y2="324.99"/><line x1="0" y1="325.25" x2="902" y2="325.25"/><line x1="0" y1="325.77" x2="902" y2="325.77"/><line x1="0" y1="326.03" x2="902" y2="326.03"/><line x1="0" y1="326.30" x2="902" y2="326.30"/><line x1="0" y1="326.58" x2="902" y2="326.58"/><line x1="0" y1="326.85" x2="902" y2="326.85"/><line x1="0" y1="327.14" x2="902" y2="327.14"/><line x1="0" y1="327.42" x2="902" y2="327.42"/><line x1="0" y1="327.71" x2="902" y2="327.71"/><line x1="0" y1="328.01" x2="902" y2="328.01"/><line x1="0" y1="328.61" x2="902" y2="328.61"/><line x1="0" y1="328.92" x2="902" y2="328.92"/><line x1="0" y1="329.24" x2="902" y2="329.24"/><line x1="0" y1="329.56" x2="902" y2="329.56"/><line x1="0" y1="329.88" x2="902" y2="329.88"/><line x1="0" y1="330.21" x2="902" y2="330.21"/><line x1="0" y1="330.55" x2="902" y2="330.55"/><line x1="0" y1="330.89" x2="902" y2="330.89"/><line x1="0" y1="331.24" x2="902" y2="331.24"/><line x1="0" y1="331.95" x2="902" y2="331.95"/><line x1="0" y1="332.31" x2="902" y2="332.31"/><line x1="0" y1="332.69" x2="902" y2="332.69"/><line x1="0" y1="333.07" x2="902" y2="333.07"/><line x1="0" y1="333.45" x2="902" y2="333.45"/><line x1="0" y1="333.84" x2="902" y2="333.84"/><line x1="0" y1="334.24" x2="902" y2="334.24"/><line x1="0" y1="334.65" x2="902" y2="334.65"/><line x1="0" y1="335.06" x2="902" y2="335.06"/><line x1="0" y1="335.92" x2="902" y2="335.92"/><line x1="0" y1="336.36" x2="902" y2="336.36"/><line x1="0" y1="336.80" x2="902" y2="336.80"/><line x1="0" y1="337.26" x2="902" y2="337.26"/><line x1="0" y1="337.72" x2="902" y2="337.72"/><line x1="0" y1="338.20" x2="902" y2="338.20"/><line x1="0" y1="338.68" x2="902" y2="338.68"/><line x1="0" y1="339.17" x2="902" y2="339.17"/><line x1="0" y1="339.68" x2="902" y2="339.68"/><line x1="0" y1="340.71" x2="902" y2="340.71"/><line x1="0" y1="341.25" x2="902" y2="341.25"/><line x1="0" y1="341.80" x2="902" y2="341.80"/><line x1="0" y1="342.36" x2="902" y2="342.36"/><line x1="0" y1="342.93" x2="902" y2="342.93"/><line x1="0" y1="343.51" x2="902" y2="343.51"/><line x1="0" y1="344.11" x2="902" y2="344.11"/><line x1="0" y1="344.72" x2="902" y2="344.72"/><line x1="0" y1="345.34" x2="902" y2="345.34"/><line x1="0" y1="346.63" x2="902" y2="346.63"/><line x1="0" y1="347.30" x2="902" y2="347.30"/><line x1="0" y1="347.98" x2="902" y2="347.98"/><line x1="0" y1="348.68" x2="902" y2="348.68"/><line x1="0" y1="349.40" x2="902" y2="349.40"/><line x1="0" y1="350.14" x2="902" y2="350.14"/><line x1="0" y1="350.89" x2="902" y2="350.89"/><line x1="0" y1="351.67" x2="902" y2="351.67"/><line x1="0" y1="352.46" x2="902" y2="352.46"/><line x1="0" y1="354.11" x2="902" y2="354.11"/><line x1="0" y1="354.97" x2="902" y2="354.97"/><line x1="0" y1="355.85" x2="902" y2="355.85"/><line x1="0" y1="356.75" x2="902" y2="356.75"/><line x1="0" y1="357.69" x2="902" y2="357.69"/><line x1="0" y1="358.64" x2="902" y2="358.64"/><line x1="0" y1="359.63" x2="902" y2="359.63"/><line x1="0" y1="360.64" x2="902" y2="360.64"/><line x1="0" y1="361.68" x2="902" y2="361.68"/><line x1="0" y1="363.86" x2="902" y2="363.86"/><line x1="0" y1="365.01" x2="902" y2="365.01"/><line x1="0" y1="366.18" x2="902" y2="366.18"/><line x1="0" y1="367.40" x2="902" y2="367.40"/><line x1="0" y1="368.65" x2="902" y2="368.65"/><line x1="0" y1="369.95" x2="902" y2="369.95"/><line x1="0" y1="371.29" x2="902" y2="371.29"/><line x1="0" y1="372.67" x2="902" y2="372.67"/><line x1="0" y1="374.10" x2="902" y2="374.10"/><line x1="0" y1="377.12" x2="902" y2="377.12"/><line x1="0" y1="378.71" x2="902" y2="378.71"/><line x1="0" y1="380.36" x2="902" y2="380.36"/><line x1="0" y1="382.08" x2="902" y2="382.08"/><line x1="0" y1="383.86" x2="902" y2="383.86"/><line x1="0" y1="385.71" x2="902" y2="385.71"/><line x1="0" y1="387.63" x2="902" y2="387.63"/><line x1="0" y1="389.64" x2="902" y2="389.64"/><line x1="0" y1="391.73" x2="902" y2="391.73"/><line x1="0" y1="396.18" x2="902" y2="396.18"/><line x1="0" y1="398.55" x2="902" y2="398.55"/><line x1="0" y1="401.03" x2="902" y2="401.03"/><line x1="0" y1="403.63" x2="902" y2="403.63"/><line x1="0" y1="406.36" x2="902" y2="406.36"/><line x1="0" y1="409.21" x2="902" y2="409.21"/><line x1="0" y1="412.22" x2="902" y2="412.22"/><line x1="0" y1="415.37" x2="902" y2="415.37"/><line x1="0" y1="418.70" x2="902" y2="418.70"/><line x1="0" y1="425.90" x2="902" y2="425.90"/><line x1="0" y1="429.82" x2="902" y2="429.82"/><line x1="0" y1="433.96" x2="902" y2="433.96"/><line x1="0" y1="438.36" x2="902" y2="438.36"/><line x1="0" y1="443.04" x2="902" y2="443.04"/><line x1="0" y1="448.02" x2="902" y2="448.02"/><line x1="0" y1="453.34" x2="902" y2="453.34"/><line x1="0" y1="459.02" x2="902" y2="459.02"/><line x1="0" y1="465.12" x2="902" y2="465.12"/><line x1="0" y1="478.74" x2="902" y2="478.74"/><line x1="0" y1="486.38" x2="902" y2="486.38"/><line x1="0" y1="494.65" x2="902" y2="494.65"/><line x1="0" y1="503.66" x2="902" y2="503.66"/><line x1="0" y1="513.50" x2="902" y2="513.50"/><line x1="0" y1="524.29" x2="902" y2="524.29"/><line x1="0" y1="536.17" x2="902" y2="536.17"/><line x1="0" y1="549.32" x2="902" y2="549.32"/><line x1="0" y1="563.95" x2="902" y2="563.95"/></g><g stroke="#575757" stroke-width="1" fill="none" mask="url(#gmam)"><line x1="141.34" y1="296.00" x2="-14661.09" y2="583.00"/><line x1="149.10" y1="296.00" x2="-14282.09" y2="583.00"/><line x1="156.86" y1="296.00" x2="-13903.10" y2="583.00"/><line x1="164.62" y1="296.00" x2="-13524.10" y2="583.00"/><line x1="172.39" y1="296.00" x2="-13145.11" y2="583.00"/><line x1="180.15" y1="296.00" x2="-12766.12" y2="583.00"/><line x1="187.91" y1="296.00" x2="-12387.12" y2="583.00"/><line x1="195.67" y1="296.00" x2="-12008.13" y2="583.00"/><line x1="203.43" y1="296.00" x2="-11629.13" y2="583.00"/><line x1="211.19" y1="296.00" x2="-11250.14" y2="583.00"/><line x1="218.95" y1="296.00" x2="-10871.15" y2="583.00"/><line x1="226.71" y1="296.00" x2="-10492.15" y2="583.00"/><line x1="234.47" y1="296.00" x2="-10113.16" y2="583.00"/><line x1="242.23" y1="296.00" x2="-9734.16" y2="583.00"/><line x1="250.00" y1="296.00" x2="-9355.17" y2="583.00"/><line x1="257.76" y1="296.00" x2="-8976.18" y2="583.00"/><line x1="265.52" y1="296.00" x2="-8597.18" y2="583.00"/><line x1="273.28" y1="296.00" x2="-8218.19" y2="583.00"/><line x1="281.04" y1="296.00" x2="-7839.19" y2="583.00"/><line x1="288.80" y1="296.00" x2="-7460.20" y2="583.00"/><line x1="296.56" y1="296.00" x2="-7081.21" y2="583.00"/><line x1="304.32" y1="296.00" x2="-6702.21" y2="583.00"/><line x1="312.08" y1="296.00" x2="-6323.22" y2="583.00"/><line x1="319.84" y1="296.00" x2="-5944.22" y2="583.00"/><line x1="327.60" y1="296.00" x2="-5565.23" y2="583.00"/><line x1="335.37" y1="296.00" x2="-5186.24" y2="583.00"/><line x1="343.13" y1="296.00" x2="-4807.24" y2="583.00"/><line x1="350.89" y1="296.00" x2="-4428.25" y2="583.00"/><line x1="358.65" y1="296.00" x2="-4049.25" y2="583.00"/><line x1="366.41" y1="296.00" x2="-3670.26" y2="583.00"/><line x1="374.17" y1="296.00" x2="-3291.27" y2="583.00"/><line x1="381.93" y1="296.00" x2="-2912.27" y2="583.00"/><line x1="389.69" y1="296.00" x2="-2533.28" y2="583.00"/><line x1="397.45" y1="296.00" x2="-2154.28" y2="583.00"/><line x1="405.21" y1="296.00" x2="-1775.29" y2="583.00"/><line x1="412.98" y1="296.00" x2="-1396.30" y2="583.00"/><line x1="420.74" y1="296.00" x2="-1017.30" y2="583.00"/><line x1="428.50" y1="296.00" x2="-638.31" y2="583.00"/><line x1="436.26" y1="296.00" x2="-259.31" y2="583.00"/><line x1="444.02" y1="296.00" x2="119.68" y2="583.00"/><line x1="459.54" y1="296.00" x2="877.67" y2="583.00"/><line x1="467.30" y1="296.00" x2="1256.66" y2="583.00"/><line x1="475.06" y1="296.00" x2="1635.65" y2="583.00"/><line x1="482.82" y1="296.00" x2="2014.65" y2="583.00"/><line x1="490.59" y1="296.00" x2="2393.64" y2="583.00"/><line x1="498.35" y1="296.00" x2="2772.64" y2="583.00"/><line x1="506.11" y1="296.00" x2="3151.63" y2="583.00"/><line x1="513.87" y1="296.00" x2="3530.62" y2="583.00"/><line x1="521.63" y1="296.00" x2="3909.62" y2="583.00"/><line x1="529.39" y1="296.00" x2="4288.61" y2="583.00"/><line x1="537.15" y1="296.00" x2="4667.61" y2="583.00"/><line x1="544.91" y1="296.00" x2="5046.60" y2="583.00"/><line x1="552.67" y1="296.00" x2="5425.59" y2="583.00"/><line x1="560.43" y1="296.00" x2="5804.59" y2="583.00"/><line x1="568.19" y1="296.00" x2="6183.58" y2="583.00"/><line x1="575.96" y1="296.00" x2="6562.58" y2="583.00"/><line x1="583.72" y1="296.00" x2="6941.57" y2="583.00"/><line x1="591.48" y1="296.00" x2="7320.56" y2="583.00"/><line x1="599.24" y1="296.00" x2="7699.56" y2="583.00"/><line x1="607.00" y1="296.00" x2="8078.55" y2="583.00"/><line x1="614.76" y1="296.00" x2="8457.55" y2="583.00"/><line x1="622.52" y1="296.00" x2="8836.54" y2="583.00"/><line x1="630.28" y1="296.00" x2="9215.53" y2="583.00"/><line x1="638.04" y1="296.00" x2="9594.53" y2="583.00"/><line x1="645.80" y1="296.00" x2="9973.52" y2="583.00"/><line x1="653.57" y1="296.00" x2="10352.52" y2="583.00"/><line x1="661.33" y1="296.00" x2="10731.51" y2="583.00"/><line x1="669.09" y1="296.00" x2="11110.50" y2="583.00"/><line x1="676.85" y1="296.00" x2="11489.50" y2="583.00"/><line x1="684.61" y1="296.00" x2="11868.49" y2="583.00"/><line x1="692.37" y1="296.00" x2="12247.49" y2="583.00"/><line x1="700.13" y1="296.00" x2="12626.48" y2="583.00"/><line x1="707.89" y1="296.00" x2="13005.47" y2="583.00"/><line x1="715.65" y1="296.00" x2="13384.47" y2="583.00"/><line x1="723.41" y1="296.00" x2="13763.46" y2="583.00"/><line x1="731.18" y1="296.00" x2="14142.46" y2="583.00"/><line x1="738.94" y1="296.00" x2="14521.45" y2="583.00"/><line x1="746.70" y1="296.00" x2="14900.44" y2="583.00"/><line x1="754.46" y1="296.00" x2="15279.44" y2="583.00"/><line x1="762.22" y1="296.00" x2="15658.43" y2="583.00"/><line x1="0" y1="295.02" x2="902" y2="295.02"/><line x1="0" y1="295.07" x2="902" y2="295.07"/><line x1="0" y1="295.13" x2="902" y2="295.13"/><line x1="0" y1="295.18" x2="902" y2="295.18"/><line x1="0" y1="295.24" x2="902" y2="295.24"/><line x1="0" y1="295.30" x2="902" y2="295.30"/><line x1="0" y1="295.35" x2="902" y2="295.35"/><line x1="0" y1="295.41" x2="902" y2="295.41"/><line x1="0" y1="295.47" x2="902" y2="295.47"/><line x1="0" y1="295.54" x2="902" y2="295.54"/><line x1="0" y1="295.60" x2="902" y2="295.60"/><line x1="0" y1="295.67" x2="902" y2="295.67"/><line x1="0" y1="295.73" x2="902" y2="295.73"/><line x1="0" y1="295.80" x2="902" y2="295.80"/><line x1="0" y1="295.87" x2="902" y2="295.87"/><line x1="0" y1="295.94" x2="902" y2="295.94"/><line x1="0" y1="296.02" x2="902" y2="296.02"/><line x1="0" y1="296.09" x2="902" y2="296.09"/><line x1="0" y1="296.17" x2="902" y2="296.17"/><line x1="0" y1="296.25" x2="902" y2="296.25"/><line x1="0" y1="296.33" x2="902" y2="296.33"/><line x1="0" y1="296.42" x2="902" y2="296.42"/><line x1="0" y1="296.50" x2="902" y2="296.50"/><line x1="0" y1="296.59" x2="902" y2="296.59"/><line x1="0" y1="296.68" x2="902" y2="296.68"/><line x1="0" y1="296.77" x2="902" y2="296.77"/><line x1="0" y1="296.87" x2="902" y2="296.87"/><line x1="0" y1="296.97" x2="902" y2="296.97"/><line x1="0" y1="297.07" x2="902" y2="297.07"/><line x1="0" y1="297.17" x2="902" y2="297.17"/><line x1="0" y1="297.28" x2="902" y2="297.28"/><line x1="0" y1="297.39" x2="902" y2="297.39"/><line x1="0" y1="297.51" x2="902" y2="297.51"/><line x1="0" y1="297.62" x2="902" y2="297.62"/><line x1="0" y1="297.75" x2="902" y2="297.75"/><line x1="0" y1="297.87" x2="902" y2="297.87"/><line x1="0" y1="298.00" x2="902" y2="298.00"/><line x1="0" y1="298.14" x2="902" y2="298.14"/><line x1="0" y1="298.27" x2="902" y2="298.27"/><line x1="0" y1="298.42" x2="902" y2="298.42"/><line x1="0" y1="298.57" x2="902" y2="298.57"/><line x1="0" y1="298.72" x2="902" y2="298.72"/><line x1="0" y1="298.88" x2="902" y2="298.88"/><line x1="0" y1="299.04" x2="902" y2="299.04"/><line x1="0" y1="299.22" x2="902" y2="299.22"/><line x1="0" y1="299.39" x2="902" y2="299.39"/><line x1="0" y1="299.58" x2="902" y2="299.58"/><line x1="0" y1="299.77" x2="902" y2="299.77"/><line x1="0" y1="299.97" x2="902" y2="299.97"/><line x1="0" y1="300.18" x2="902" y2="300.18"/><line x1="0" y1="300.40" x2="902" y2="300.40"/><line x1="0" y1="300.63" x2="902" y2="300.63"/><line x1="0" y1="300.87" x2="902" y2="300.87"/><line x1="0" y1="301.12" x2="902" y2="301.12"/><line x1="0" y1="301.38" x2="902" y2="301.38"/><line x1="0" y1="301.65" x2="902" y2="301.65"/><line x1="0" y1="301.94" x2="902" y2="301.94"/><line x1="0" y1="302.24" x2="902" y2="302.24"/><line x1="0" y1="302.55" x2="902" y2="302.55"/><line x1="0" y1="302.89" x2="902" y2="302.89"/><line x1="0" y1="303.24" x2="902" y2="303.24"/><line x1="0" y1="303.61" x2="902" y2="303.61"/><line x1="0" y1="304.00" x2="902" y2="304.00"/><line x1="0" y1="304.42" x2="902" y2="304.42"/><line x1="0" y1="304.86" x2="902" y2="304.86"/><line x1="0" y1="305.33" x2="902" y2="305.33"/><line x1="0" y1="305.83" x2="902" y2="305.83"/><line x1="0" y1="306.36" x2="902" y2="306.36"/><line x1="0" y1="306.93" x2="902" y2="306.93"/><line x1="0" y1="307.54" x2="902" y2="307.54"/><line x1="0" y1="308.20" x2="902" y2="308.20"/><line x1="0" y1="308.91" x2="902" y2="308.91"/><line x1="0" y1="309.68" x2="902" y2="309.68"/><line x1="0" y1="310.51" x2="902" y2="310.51"/><line x1="0" y1="311.41" x2="902" y2="311.41"/><line x1="0" y1="312.40" x2="902" y2="312.40"/><line x1="0" y1="313.48" x2="902" y2="313.48"/><line x1="0" y1="314.68" x2="902" y2="314.68"/><line x1="0" y1="316.00" x2="902" y2="316.00"/><line x1="0" y1="317.47" x2="902" y2="317.47"/><line x1="0" y1="319.12" x2="902" y2="319.12"/><line x1="0" y1="320.97" x2="902" y2="320.97"/><line x1="0" y1="323.09" x2="902" y2="323.09"/><line x1="0" y1="325.51" x2="902" y2="325.51"/><line x1="0" y1="328.31" x2="902" y2="328.31"/><line x1="0" y1="331.59" x2="902" y2="331.59"/><line x1="0" y1="335.49" x2="902" y2="335.49"/><line x1="0" y1="340.19" x2="902" y2="340.19"/><line x1="0" y1="345.98" x2="902" y2="345.98"/><line x1="0" y1="353.27" x2="902" y2="353.27"/><line x1="0" y1="362.76" x2="902" y2="362.76"/><line x1="0" y1="375.58" x2="902" y2="375.58"/><line x1="0" y1="393.90" x2="902" y2="393.90"/><line x1="0" y1="471.68" x2="902" y2="471.68"/><line x1="0" y1="580.34" x2="902" y2="580.34"/></g><line x1="0" y1="422.2" x2="902" y2="422.2" stroke="#8e3b46" stroke-width="1.1"/><line x1="472.4" y1="422.2" x2="497.1" y2="581" stroke="#6fa12c" stroke-width="1.4"/></svg></div>
<div class="a" style="left:2px;top:84px;width:5px;height:554px;background:#2e2e2e;"></div>
<div class="a" style="left:7px;top:84px;width:1px;height:554px;background:#353535;"></div>
<svg class="a" style="left:0px;top:0px;pointer-events:none;" width="1098" height="714" viewBox="0 0 1098 714"><defs><linearGradient id="pg" x1="0" y1="0" x2="1" y2="1"><stop offset="0" stop-color="#9d9e9f"/><stop offset="1" stop-color="#a4a5a6"/></linearGradient></defs><polygon points="370.1,477.7 370.1,307.4 377.2,260.9 396.0,222.1 423.5,196.0 455.9,186.9 491.5,186.9 524.6,196.0 552.1,222.1 570.9,260.9 577.4,307.4 577.4,477.7" fill="url(#pg)"/><polyline points="370.1,477.7 370.1,307.4 377.2,260.9 396.0,222.1 423.5,196.0 455.9,186.9 491.5,186.9 524.6,196.0 552.1,222.1 570.9,260.9 577.4,307.4 577.4,477.7" fill="none" stroke="#f08a1f" stroke-width="1.2"/><line x1="370.1" y1="477.7" x2="577.4" y2="477.7" stroke="#151515" stroke-width="1.6"/><rect x="367.9" y="305.2" width="4.4" height="4.4" fill="#ff8a10"/><rect x="375.0" y="258.7" width="4.4" height="4.4" fill="#ff8a10"/><rect x="393.8" y="219.9" width="4.4" height="4.4" fill="#ff8a10"/><rect x="421.3" y="193.8" width="4.4" height="4.4" fill="#ff8a10"/><rect x="453.7" y="184.7" width="4.4" height="4.4" fill="#ff8a10"/><rect x="489.3" y="184.7" width="4.4" height="4.4" fill="#ff8a10"/><rect x="522.4" y="193.8" width="4.4" height="4.4" fill="#ff8a10"/><rect x="549.9" y="219.9" width="4.4" height="4.4" fill="#ff8a10"/><rect x="568.7" y="258.7" width="4.4" height="4.4" fill="#ff8a10"/><rect x="575.2" y="305.2" width="4.4" height="4.4" fill="#ff8a10"/><rect x="368" y="475.6" width="4.2" height="4.2" fill="#000"/><rect x="575.3" y="475.6" width="4.2" height="4.2" fill="#000"/><circle cx="474.2" cy="332.2" r="3.2" fill="#2a3340"/><circle cx="474.2" cy="332.2" r="2.3" fill="#ffa126"/><circle cx="474.4" cy="479.2" r="9.8" fill="none" stroke="#ffffff" stroke-width="1.6"/><circle cx="474.4" cy="479.2" r="9.8" fill="none" stroke="#e02020" stroke-width="1.6" stroke-dasharray="5.1 5.1"/><path d="M474.4 459V475M474.4 483.5V499M455 479.2H470M479 479.2H495" stroke="#111" stroke-width="1.2"/></svg>
<div class="a" style="left:2px;top:57px;width:902px;height:27px;background:#303030;border-radius:6px 6px 0 0;"></div>
<div class="a" style="left:2px;top:84px;width:111px;height:25px;background:#303030;border-radius:0 0 6px 0;"></div>
<div class="a" style="left:113px;top:84px;width:5px;height:5px;background:radial-gradient(circle at 100% 100%, transparent 4.5px, #303030 5px);"></div>
<div class="a" style="left:706px;top:84px;width:198px;height:24px;background:#303030;border-radius:0 0 0 6px;"></div>
<div class="a" style="left:701px;top:84px;width:5px;height:5px;background:radial-gradient(circle at 0% 100%, transparent 4.5px, #303030 5px);"></div>
<div class="a" style="left:11px;top:60px;width:30px;height:18px;background:#262626;border-radius:4px;border:1px solid #383838;"></div>
<svg class="a" style="left:14px;top:61px;" width="16" height="16" viewBox="0 0 16 16"><path d="M1.5 9.5H11M1.5 13H13M4 7V16M9 10V16" stroke="#d8d8d8" stroke-width="1"/><circle cx="10.5" cy="5.5" r="3.8" fill="#e0e0e0"/><circle cx="9.5" cy="4.5" r="1.4" fill="#fff"/></svg>
<svg class="a" style="left:31px;top:67px;" width="9" height="6" viewBox="0 0 9 6"><path d="M1 1L4.5 4.5L8 1" fill="none" stroke="#d0d0d0" stroke-width="1.2"/></svg>
<div class="a" style="left:48px;top:60px;width:97px;height:18px;background:#262626;border-radius:4px;border:1px solid #383838;"></div>
<svg class="a" style="left:51px;top:61px;" width="17" height="16" viewBox="0 0 17 16"><rect x="1.5" y="3.5" width="3" height="3" fill="none" stroke="#cfcfcf"/><rect x="1.5" y="12" width="3" height="3" fill="none" stroke="#cfcfcf"/><rect x="11.5" y="12" width="3" height="3" fill="none" stroke="#cfcfcf"/><rect x="11" y="2" width="4.5" height="4.5" fill="#e8e8e8"/><path d="M4.5 5H11M3 6.5V12M4.5 13.5H11.5M13 6.5V12" stroke="#cfcfcf"/></svg>
<div class="a t" style="left:73px;top:59px;height:20px;line-height:20px;font-size:12px;color:#dedede;"><span style="font-size:11.50px;letter-spacing:-0.50px;position:relative;top:-0.8px">編集モード</span></div>
<svg class="a" style="left:134px;top:67px;" width="9" height="6" viewBox="0 0 9 6"><path d="M1 1L4.5 4.5L8 1" fill="none" stroke="#d0d0d0" stroke-width="1.2"/></svg>
<div class="a" style="left:152px;top:60px;width:58px;height:18px;background:#545454;border-radius:4px;"></div>
<div class="a" style="left:152px;top:60px;width:18px;height:18px;background:#4772b3;border-radius:4px 0 0 4px;"></div>
<div class="a" style="left:170px;top:60px;width:1px;height:18px;background:#3d3d3d;"></div>
<div class="a" style="left:190px;top:60px;width:1px;height:18px;background:#3d3d3d;"></div>
<svg class="a" style="left:153px;top:61px;" width="17" height="16" viewBox="0 0 17 16"><path d="M5 12.5V13.5H11L14.5 10V3.5H6L4.5 5" fill="none" stroke="#e6e6e6" stroke-width="1"/><rect x="3" y="7" width="4.2" height="4.2" fill="#fff"/></svg>
<svg class="a" style="left:171px;top:61px;" width="19" height="16" viewBox="0 0 19 16"><path d="M6 13.5H4V6L6.5 3.5H14.5V10.5L13 12" fill="none" stroke="#d8d8d8" stroke-width="1"/><rect x="10" y="7" width="3" height="7" fill="#e8e8e8"/></svg>
<svg class="a" style="left:191px;top:61px;" width="19" height="16" viewBox="0 0 19 16"><path d="M7 4.5L8.5 3.5H15.5V10.5L14 12" fill="none" stroke="#d8d8d8" stroke-width="1"/><rect x="4" y="6.5" width="9.5" height="8" fill="#e8e8e8"/></svg>
<div class="a t" style="left:223px;top:59px;height:20px;line-height:20px;font-size:12px;color:#e4e4e4;"><span style="font-size:11.50px;letter-spacing:-0.50px;position:relative;top:-0.8px">ビュー</span></div>
<div class="a t" style="left:271px;top:59px;height:20px;line-height:20px;font-size:12px;color:#e4e4e4;"><span style="font-size:11.50px;letter-spacing:-0.50px;position:relative;top:-0.8px">選択</span></div>
<div class="a t" style="left:308px;top:59px;height:20px;line-height:20px;font-size:12px;color:#e4e4e4;"><span style="font-size:11.50px;letter-spacing:-0.50px;position:relative;top:-0.8px">追加</span></div>
<div class="a t" style="left:345px;top:59px;height:20px;line-height:20px;font-size:12px;color:#e4e4e4;"><span style="font-size:11.50px;letter-spacing:-0.50px;position:relative;top:-0.8px">メッシュ</span></div>
<div class="a t" style="left:403px;top:59px;height:20px;line-height:20px;font-size:12px;color:#e4e4e4;"><span style="font-size:11.50px;letter-spacing:-0.50px;position:relative;top:-0.8px">頂点</span></div>
<div class="a t" style="left:441px;top:59px;height:20px;line-height:20px;font-size:12px;color:#e4e4e4;"><span style="font-size:11.50px;letter-spacing:-0.50px;position:relative;top:-0.8px">辺</span></div>
<div class="a t" style="left:467px;top:59px;height:20px;line-height:20px;font-size:12px;color:#e4e4e4;"><span style="font-size:11.50px;letter-spacing:-0.50px;position:relative;top:-0.8px">面</span></div>
<div class="a t" style="left:493px;top:59px;height:20px;line-height:20px;font-size:12px;color:#e4e4e4;">UV</div>
<div class="a" style="left:534px;top:60px;width:93px;height:18px;background:#262626;border-radius:4px;border:1px solid #383838;"></div>
<svg class="a" style="left:537px;top:61px;" width="17" height="16" viewBox="0 0 17 16"><path d="M3 2V14H15" fill="none" stroke="#d8d8d8" stroke-width="1.2"/><path d="M3 14L13 4" stroke="#d8d8d8" stroke-width="1.2"/><path d="M1 4L3 1.5L5 4M13 12L15.5 14L13 16M10 3.5H13.5V7" fill="none" stroke="#d8d8d8" stroke-width="1.1"/><circle cx="3" cy="14" r="1.8" fill="#303030" stroke="#d8d8d8"/></svg>
<div class="a t" style="left:559px;top:59px;height:20px;line-height:20px;font-size:12px;color:#dedede;"><span style="font-size:11.50px;letter-spacing:-0.50px;position:relative;top:-0.8px">グローバル</span></div>
<svg class="a" style="left:616px;top:67px;" width="9" height="6" viewBox="0 0 9 6"><path d="M1 1L4.5 4.5L8 1" fill="none" stroke="#d0d0d0" stroke-width="1.2"/></svg>
<div class="a" style="left:634px;top:60px;width:30px;height:18px;background:#262626;border-radius:4px;border:1px solid #383838;"></div>
<svg class="a" style="left:637px;top:61px;" width="17" height="16" viewBox="0 0 17 16"><circle cx="6" cy="10" r="4.2" fill="none" stroke="#d8d8d8" stroke-width="1.2"/><circle cx="10.5" cy="6" r="4.2" fill="none" stroke="#d8d8d8" stroke-width="1.2"/></svg>
<svg class="a" style="left:653px;top:67px;" width="9" height="6" viewBox="0 0 9 6"><path d="M1 1L4.5 4.5L8 1" fill="none" stroke="#d0d0d0" stroke-width="1.2"/></svg>
<div class="a" style="left:671px;top:60px;width:50px;height:18px;background:#262626;border-radius:4px;border:1px solid #383838;"></div>
<div class="a" style="left:671px;top:60px;width:18px;height:18px;background:#4a4a4a;border-radius:4px 0 0 4px;"></div>
<svg class="a" style="left:671px;top:60px;" width="18" height="18" viewBox="0 0 18 18"><path d="M4.5 12.5L3 11A5.2 5.2 0 0 1 10.5 3.5L12 5L9.8 7.2L8.3 5.7A2.1 2.1 0 0 0 5.3 8.7L6.8 10.2Z" fill="none" stroke="#c0c0c0" stroke-width="1.1" stroke-linejoin="round"/><path d="M4.5 12.5L6.8 10.2M12 5L9.8 7.2" stroke="#c0c0c0" stroke-width="1.1"/></svg>
<svg class="a" style="left:691px;top:61px;" width="18" height="16" viewBox="0 0 18 16"><path d="M1 10H13M2 8V13M5 8V13M8 8V13M11 8V13" stroke="#d8d8d8" stroke-width="1.1"/><rect x="12" y="3" width="4" height="4" fill="#e8e8e8"/></svg>
<svg class="a" style="left:709px;top:67px;" width="9" height="6" viewBox="0 0 9 6"><path d="M1 1L4.5 4.5L8 1" fill="none" stroke="#d0d0d0" stroke-width="1.2"/></svg>
<div class="a" style="left:727px;top:60px;width:51px;height:18px;background:#262626;border-radius:4px;border:1px solid #383838;"></div>
<div class="a" style="left:727px;top:60px;width:19px;height:18px;background:#4a4a4a;border-radius:4px 0 0 4px;"></div>
<svg class="a" style="left:728px;top:61px;" width="17" height="16" viewBox="0 0 17 16"><circle cx="8.5" cy="8" r="6" fill="none" stroke="#9a9a9a" stroke-width="1.1"/><circle cx="8.5" cy="8" r="2" fill="#cfcfcf"/></svg>
<svg class="a" style="left:749px;top:61px;" width="16" height="16" viewBox="0 0 16 16"><path d="M1 14C5 14 5 2 8 2C11 2 11 14 15 14" fill="none" stroke="#6a6a6a" stroke-width="1.1"/></svg>
<svg class="a" style="left:766px;top:67px;" width="9" height="6" viewBox="0 0 9 6"><path d="M1 1L4.5 4.5L8 1" fill="none" stroke="#5a5a5a" stroke-width="1.2"/></svg>
<div class="a" style="left:796px;top:60px;width:30px;height:18px;background:#262626;border-radius:4px;border:1px solid #383838;"></div>
<svg class="a" style="left:798px;top:61px;" width="18" height="16" viewBox="0 0 18 16"><path d="M2 5.5C5 1 11 1 14 5.5C11 10 5 10 2 5.5Z" fill="#e6e6e6"/><circle cx="8" cy="5.5" r="2.3" fill="#303030"/><circle cx="8" cy="5.5" r="1" fill="#e6e6e6"/><path d="M3 7L7 16L8 11.5L12 11Z" fill="#e6e6e6" stroke="#303030" stroke-width="0.8"/></svg>
<svg class="a" style="left:816px;top:67px;" width="9" height="6" viewBox="0 0 9 6"><path d="M1 1L4.5 4.5L8 1" fill="none" stroke="#d0d0d0" stroke-width="1.2"/></svg>
<div class="a" style="left:833px;top:60px;width:38px;height:18px;background:#262626;border-radius:4px;border:1px solid #383838;"></div>
<div class="a" style="left:833px;top:60px;width:18px;height:18px;background:#4772b3;border-radius:4px 0 0 4px;"></div>
<svg class="a" style="left:834px;top:61px;" width="17" height="16" viewBox="0 0 17 16"><path d="M3 13C4 7 8 4 14 3" fill="none" stroke="#e8e8e8" stroke-width="1.2"/><path d="M10 2.5H14.5V7" fill="none" stroke="#e8e8e8" stroke-width="1.2"/><circle cx="4" cy="12.5" r="2" fill="#4772b3" stroke="#e8e8e8" stroke-width="1.1"/></svg>
<svg class="a" style="left:857px;top:67px;" width="9" height="6" viewBox="0 0 9 6"><path d="M1 1L4.5 4.5L8 1" fill="none" stroke="#d0d0d0" stroke-width="1.2"/></svg>
<div class="a" style="left:878px;top:60px;width:26px;height:18px;background:#262626;border-radius:4px 6px 0 4px;border:1px solid #383838;border-right:0;"></div>
<div class="a" style="left:878px;top:60px;width:18px;height:18px;background:#4772b3;border-radius:4px 0 0 4px;"></div>
<svg class="a" style="left:879px;top:61px;" width="17" height="16" viewBox="0 0 17 16"><circle cx="9.5" cy="6.5" r="5.5" fill="#e8e8e8"/><circle cx="6.5" cy="10" r="4.5" fill="none" stroke="#e8e8e8" stroke-width="1.5"/><circle cx="9" cy="7" r="1.8" fill="#4772b3"/></svg>
<svg class="a" style="left:901px;top:67px;" width="7" height="6" viewBox="0 0 7 6"><path d="M1 1L4.5 4.5L8 1" fill="none" stroke="#d0d0d0" stroke-width="1.2"/></svg>
<div class="a" style="left:10px;top:87px;width:94px;height:18px;background:#545454;border-radius:4px;"></div>
<div class="a" style="left:10px;top:87px;width:18px;height:18px;background:#4772b3;border-radius:4px 0 0 4px;"></div>
<div class="a" style="left:28px;top:87px;width:1px;height:18px;background:#454545;"></div>
<div class="a" style="left:47px;top:87px;width:1px;height:18px;background:#454545;"></div>
<div class="a" style="left:66px;top:87px;width:1px;height:18px;background:#454545;"></div>
<div class="a" style="left:85px;top:87px;width:1px;height:18px;background:#454545;"></div>
<svg class="a" style="left:10px;top:87px;" width="18" height="18" viewBox="0 0 18 18"><rect x="3.5" y="3.5" width="11" height="11" fill="none" stroke="#fff" stroke-width="1.3" stroke-dasharray="2.6 1.6"/></svg>
<svg class="a" style="left:28px;top:87px;" width="19" height="18" viewBox="0 0 19 18"><path d="M3 8H8V3H15V10H10V15H3Z" fill="#c8c8c8"/></svg>
<svg class="a" style="left:47px;top:87px;" width="19" height="18" viewBox="0 0 19 18"><path d="M3.5 8.5V14.5H9.5" fill="none" stroke="#c8c8c8" stroke-width="1.1" stroke-dasharray="2 1.5"/><path d="M8 3H15V10H8Z" fill="#c8c8c8"/><path d="M3 8H8V3H15V10H10V15H3Z" fill="none"/><rect x="5" y="5" width="3" height="3" fill="#c8c8c8"/><rect x="10" y="10" width="3" height="3" fill="#c8c8c8"/></svg>
<svg class="a" style="left:66px;top:87px;" width="19" height="18" viewBox="0 0 19 18"><path d="M3 7H7V3H15V11H11V15H3Z" fill="#c8c8c8"/><rect x="7" y="7" width="4" height="4" fill="#545454"/></svg>
<svg class="a" style="left:85px;top:87px;" width="19" height="18" viewBox="0 0 19 18"><rect x="3.5" y="3.5" width="11" height="11" fill="none" stroke="#c8c8c8" stroke-width="1" stroke-dasharray="2 1.5"/><rect x="6" y="6" width="6" height="6" fill="#c8c8c8"/></svg>
<svg class="a" style="left:716px;top:87px;" width="16" height="18" viewBox="0 0 16 18"><path d="M8 2V16" stroke="#cfcfcf" stroke-width="1" stroke-dasharray="1.5 1"/><path d="M6 4C2 2 1 5 2 9C1 13 2 16 6 14M10 4C14 2 15 5 14 9C15 13 14 16 10 14" fill="none" stroke="#cfcfcf" stroke-width="1.1"/></svg>
<div class="a" style="left:735px;top:87px;width:51px;height:18px;background:#545454;border-radius:4px;"></div>
<div class="a" style="left:751px;top:87px;width:1px;height:18px;background:#454545;"></div>
<div class="a" style="left:769px;top:87px;width:1px;height:18px;background:#454545;"></div>
<div class="a t" style="left:735px;top:86px;width:16px;height:20px;line-height:20px;text-align:center;font-size:12px;color:#e6e6e6;">X</div>
<div class="a t" style="left:752px;top:86px;width:17px;height:20px;line-height:20px;text-align:center;font-size:12px;color:#e6e6e6;">Y</div>
<div class="a t" style="left:770px;top:86px;width:16px;height:20px;line-height:20px;text-align:center;font-size:12px;color:#e6e6e6;">Z</div>
<div class="a" style="left:793px;top:87px;width:18px;height:18px;background:#4a4a4a;border-radius:4px;"></div>
<svg class="a" style="left:793px;top:87px;" width="18" height="18" viewBox="0 0 18 18"><rect x="3" y="11" width="3.5" height="3.5" fill="none" stroke="#e0e0e0" stroke-width="1"/><rect x="11.5" y="3.5" width="3.5" height="3.5" fill="none" stroke="#e0e0e0" stroke-width="1"/><path d="M5 10C5 6 8 4.5 11 5M13 8C13 11 10 13.5 7 13" fill="none" stroke="#bbb" stroke-width="1" stroke-dasharray="2 1.5"/></svg>
<div class="a" style="left:818px;top:87px;width:78px;height:18px;background:#262626;border-radius:4px;"></div>
<div class="a t" style="left:826px;top:86px;height:20px;line-height:20px;font-size:12px;color:#dedede;"><span style="font-size:11.50px;letter-spacing:-0.50px;position:relative;top:-0.8px">オプション</span></div>
<svg class="a" style="left:886px;top:94px;" width="9" height="6" viewBox="0 0 9 6"><path d="M1 1L4.5 4.5L8 1" fill="none" stroke="#d0d0d0" stroke-width="1.2"/></svg>
<div class="a" style="left:904px;top:57px;width:5px;height:581px;background:#181818;"></div>
<div class="a" style="left:903px;top:57px;width:1px;height:581px;background:rgba(70,70,70,0.35);border-radius:0;"></div>
<div class="a t" style="left:66px;top:114px;height:20px;line-height:20px;font-size:12px;color:#f0f0f0;font-weight:bold;text-shadow:0 0 2px #000;"><span style="font-size:11.50px;letter-spacing:-0.50px;position:relative;top:-0.8px">フロント・透視投影</span></div>
<div class="a t" style="left:66px;top:133px;height:20px;line-height:20px;font-size:11.5px;color:#f0f0f0;font-weight:bold;text-shadow:0 0 2px #000;">(1) <span style="font-size:11.02px;letter-spacing:-0.48px;position:relative;top:-0.8px">平面</span>.001 | <span style="font-size:11.02px;letter-spacing:-0.48px;position:relative;top:-0.8px">平面</span>.001</div>
<div class="a" style="left:10px;top:118px;width:38px;height:67.0px;background:#282828;border-radius:5px;"></div>
<div class="a" style="left:10px;top:151.5px;width:38px;height:1px;background:#303030;"></div>
<div class="a" style="left:10px;top:118px;width:38px;height:33px;background:#4772b3;border-radius:5px 5px 0 0;"></div>
<div class="a" style="left:10px;top:193px;width:38px;height:135.0px;background:#282828;border-radius:5px;"></div>
<div class="a" style="left:10px;top:226.75px;width:38px;height:1px;background:#303030;"></div>
<div class="a" style="left:10px;top:260.5px;width:38px;height:1px;background:#303030;"></div>
<div class="a" style="left:10px;top:294.25px;width:38px;height:1px;background:#303030;"></div>
<div class="a" style="left:10px;top:338px;width:38px;height:67.0px;background:#282828;border-radius:5px;"></div>
<div class="a" style="left:10px;top:371.5px;width:38px;height:1px;background:#303030;"></div>
<div class="a" style="left:10px;top:413px;width:38px;height:33px;background:#282828;border-radius:5px;"></div>
<div class="a" style="left:10px;top:453px;width:38px;height:204px;background:#282828;border-radius:5px;"></div>
<div class="a" style="left:10px;top:487px;width:38px;height:1px;background:#303030;"></div>
<div class="a" style="left:10px;top:521px;width:38px;height:1px;background:#303030;"></div>
<div class="a" style="left:10px;top:555px;width:38px;height:1px;background:#303030;"></div>
<div class="a" style="left:10px;top:589px;width:38px;height:1px;background:#303030;"></div>
<div class="a" style="left:10px;top:623px;width:38px;height:1px;background:#303030;"></div>
<svg class="a" style="left:10px;top:118px;" width="38" height="33" viewBox="0 0 38 33"><rect x="11.5" y="7.5" width="16" height="18" fill="none" stroke="#f5a623" stroke-width="1.3" stroke-dasharray="3 2"/><path d="M17 11V21L19.5 18.5L22 22.5L23.5 21.5L21 17.5H24.5Z" fill="#e6e6e6"/></svg>
<svg class="a" style="left:42px;top:145px;" width="5" height="5" viewBox="0 0 5 5"><path d="M5 0V5H0Z" fill="#e6e6e6"/></svg>
<svg class="a" style="left:10px;top:151px;" width="38" height="34" viewBox="0 0 38 34"><circle cx="19" cy="17" r="11" fill="none" stroke="#ffffff" stroke-width="2"/><circle cx="19" cy="17" r="11" fill="none" stroke="#c0303a" stroke-width="2" stroke-dasharray="4.3 4.3"/><path d="M19 10V15M19 19V24M12 17H17M21 17H26" stroke="#9a9a9a" stroke-width="1.1"/></svg>
<svg class="a" style="left:10px;top:193px;" width="38" height="34" viewBox="0 0 38 34"><path d="M19 7V27M9 17H29" stroke="#e6e6e6" stroke-width="1.2" stroke-dasharray="2.5 2"/><path d="M19 6L16 10H22ZM19 28L16 24H22ZM8 17L12 14V20ZM30 17L26 14V20Z" fill="#e6e6e6"/></svg>
<svg class="a" style="left:10px;top:227px;" width="38" height="34" viewBox="0 0 38 34"><path d="M10 14A10 10 0 0 1 28 14M28 20A10 10 0 0 1 10 20" fill="none" stroke="#e6e6e6" stroke-width="1.3"/><path d="M19 13L23 17L19 21L15 17Z" fill="#e6e6e6"/><path d="M8 17L11 13L13 18ZM30 17L27 21L25 16Z" fill="#e6e6e6"/></svg>
<svg class="a" style="left:10px;top:261px;" width="38" height="34" viewBox="0 0 38 34"><rect x="9" y="15" width="10" height="10" fill="#e6e6e6"/><path d="M14 9.5H27.5V23" fill="none" stroke="#e6e6e6" stroke-width="1.2"/><path d="M19 15L26 8M22 8H26V12" fill="none" stroke="#e6e6e6" stroke-width="1.3"/></svg>
<svg class="a" style="left:42px;top:288px;" width="5" height="5" viewBox="0 0 5 5"><path d="M5 0V5H0Z" fill="#cfcfcf"/></svg>
<svg class="a" style="left:10px;top:295px;" width="38" height="34" viewBox="0 0 38 34"><circle cx="19" cy="17" r="10" fill="none" stroke="#e6e6e6" stroke-width="1.3"/><rect x="15" y="13" width="8" height="8" fill="#e6e6e6"/><path d="M19 5L16.5 8.5H21.5ZM19 29L16.5 25.5H21.5ZM7 17L10.5 14.5V19.5ZM31 17L27.5 14.5V19.5Z" fill="#e6e6e6"/></svg>
<svg class="a" style="left:10px;top:338px;" width="38" height="34" viewBox="0 0 38 34"><path d="M8 24C12 16 16 30 20 24C24 18 27 22 29 24" fill="none" stroke="#8fd9a8" stroke-width="1.3"/><path d="M10 20L24 6L27 9L13 23L9 24Z" fill="none" stroke="#e6e6e6" stroke-width="1.3"/></svg>
<svg class="a" style="left:42px;top:365px;" width="5" height="5" viewBox="0 0 5 5"><path d="M5 0V5H0Z" fill="#cfcfcf"/></svg>
<svg class="a" style="left:10px;top:372px;" width="38" height="34" viewBox="0 0 38 34"><path d="M14 14A12 12 0 0 1 27 27H14Z" fill="#8fd9a8"/><path d="M11.5 7V29.5H30" fill="none" stroke="#e6e6e6" stroke-width="1.6"/><path d="M11.5 11H15M11.5 15H14M11.5 19H15M11.5 23H14M16 29.5V26M20 29.5V27M24 29.5V26M28 29.5V27" stroke="#e6e6e6" stroke-width="1"/></svg>
<svg class="a" style="left:10px;top:413px;" width="38" height="33" viewBox="0 0 38 33"><path d="M6 10H12M9 7V13" stroke="#8fd9a8" stroke-width="1.6"/><path d="M12 14L16 10H27V22L23 26H12ZM12 14H23V26M23 14L27 10" fill="none" stroke="#8fd9a8" stroke-width="1.2"/></svg>
<svg class="a" style="left:42px;top:440px;" width="5" height="5" viewBox="0 0 5 5"><path d="M5 0V5H0Z" fill="#cfcfcf"/></svg>
<svg class="a" style="left:10px;top:453px;" width="38" height="34" viewBox="0 0 38 34"><path d="M11 15L15 10H29V14L25 19H11Z" fill="#8fd9a8"/><path d="M11 15H25V28H11ZM11 15L15 10H29V23L25 28M25 15L29 10" fill="none" stroke="#e6e6e6" stroke-width="1.2" stroke-linejoin="round"/></svg>
<svg class="a" style="left:42px;top:481px;" width="5" height="5" viewBox="0 0 5 5"><path d="M5 0V5H0Z" fill="#cfcfcf"/></svg>
<svg class="a" style="left:10px;top:487px;" width="38" height="34" viewBox="0 0 38 34"><path d="M11 15H25V28H11Z" fill="#8fd9a8"/><rect x="14.5" y="18.5" width="7" height="6" fill="#282828" stroke="#e6e6e6" stroke-width="1"/><path d="M11 15L14.5 18.5M25 15L21.5 18.5M11 28L14.5 24.5M25 28L21.5 24.5" stroke="#e6e6e6" stroke-width="1"/><path d="M11 15H25V28H11ZM11 15L15 10H29V23L25 28M25 15L29 10" fill="none" stroke="#e6e6e6" stroke-width="1.2" stroke-linejoin="round"/></svg>
<svg class="a" style="left:10px;top:521px;" width="38" height="35" viewBox="0 0 38 35"><path d="M11 17L15 12H24L28 16V19H11Z" fill="#8fd9a8"/><path d="M11 19H25V30H11ZM11 19V16L15 12H25L29 16V26L25 30M25 19L29 15" fill="none" stroke="#e6e6e6" stroke-width="1.2" stroke-linejoin="round"/><path d="M11 16H25L29 12" fill="none" stroke="#e6e6e6" stroke-width="0"/></svg>
<svg class="a" style="left:10px;top:556px;" width="38" height="35" viewBox="0 0 38 35"><path d="M11 15H25V28H11ZM11 15L15 10H29V23L25 28M25 15L29 10" fill="none" stroke="#e6e6e6" stroke-width="1.2" stroke-linejoin="round"/><path d="M19 28V15L23 10" fill="none" stroke="#8fd9a8" stroke-width="1.5"/></svg>
<svg class="a" style="left:42px;top:584px;" width="5" height="5" viewBox="0 0 5 5"><path d="M5 0V5H0Z" fill="#cfcfcf"/></svg>
<svg class="a" style="left:10px;top:591px;" width="38" height="35" viewBox="0 0 38 35"><path d="M11 15H25V28H11ZM11 15L15 10H29V23L25 28M25 15L29 10" fill="none" stroke="#e6e6e6" stroke-width="1.2" stroke-linejoin="round"/><path d="M20 9L14 16L20 27" fill="none" stroke="#8fd9a8" stroke-width="1.5"/><circle cx="20" cy="9" r="2" fill="#8fd9a8"/><circle cx="14" cy="16" r="1.8" fill="#8fd9a8"/><circle cx="20" cy="27" r="1.8" fill="#8fd9a8"/></svg>
<svg class="a" style="left:42px;top:619px;" width="5" height="5" viewBox="0 0 5 5"><path d="M5 0V5H0Z" fill="#cfcfcf"/></svg>
<svg class="a" style="left:10px;top:626px;" width="38" height="12" viewBox="0 0 38 12"><path d="M13 12L19 7L26 12Z" fill="#8fd9a8"/><circle cx="17" cy="7" r="1.6" fill="#fff"/><circle cx="28" cy="11" r="1.6" fill="#fff"/></svg>
<svg class="a" style="left:805px;top:110px;" width="100" height="95" viewBox="0 0 100 95"><line x1="49" y1="48.7" x2="49" y2="17" stroke="#2f6fc4" stroke-width="2"/><line x1="49" y1="48.7" x2="81" y2="48.7" stroke="#c2384a" stroke-width="2"/><line x1="49" y1="48.7" x2="17" y2="48.7" stroke="#c2384a" stroke-width="2"/><line x1="49" y1="48.7" x2="49" y2="81" stroke="#2f6fc4" stroke-width="2"/><circle cx="16.6" cy="48.7" r="7.5" fill="#6b3038" stroke="#c2384a" stroke-width="1.5"/><circle cx="49" cy="81" r="7.5" fill="#2d4a78" stroke="#2f6fc4" stroke-width="1.5"/><circle cx="49" cy="17" r="8.5" fill="#2f7fd8"/><circle cx="80.7" cy="48.7" r="8.5" fill="#d43b4d"/><circle cx="49" cy="48.7" r="8.5" fill="#8bd62b"/><text x="49" y="21.5" font-size="11" font-weight="bold" fill="#111" text-anchor="middle" font-family="Liberation Sans">Z</text><text x="80.7" y="53" font-size="11" font-weight="bold" fill="#111" text-anchor="middle" font-family="Liberation Sans">X</text><text x="49" y="53" font-size="11" font-weight="bold" fill="#111" text-anchor="middle" font-family="Liberation Sans">-Y</text></svg>
<div class="a" style="left:895px;top:129px;width:9px;height:21px;background:#353535;border-radius:4px 0 0 4px;"></div>
<svg class="a" style="left:896px;top:135px;" width="7" height="9" viewBox="0 0 7 9"><path d="M5 1L1.5 4.5L5 8" fill="none" stroke="#aaa" stroke-width="1.1"/></svg>
<div class="a" style="left:868.7px;top:200px;width:26px;height:26px;border-radius:13px;background:rgba(40,40,40,0.55)"></div>
<div class="a" style="left:868.7px;top:230px;width:26px;height:26px;border-radius:13px;background:rgba(40,40,40,0.55)"></div>
<div class="a" style="left:868.7px;top:260px;width:26px;height:26px;border-radius:13px;background:rgba(40,40,40,0.55)"></div>
<div class="a" style="left:868.7px;top:290.5px;width:26px;height:26px;border-radius:13px;background:rgba(40,40,40,0.55)"></div>
<svg class="a" style="left:869px;top:200px;" width="26" height="26" viewBox="0 0 26 26"><circle cx="13" cy="13" r="6.5" fill="#d8d8d8"/><path d="M13 9.5V16.5M9.5 13H16.5" stroke="#333" stroke-width="1.4"/></svg>
<svg class="a" style="left:869px;top:230px;" width="26" height="26" viewBox="0 0 26 26"><path d="M9 12V16C9 19 11 20 13 20C16 20 17 18 17 16V10M11 12V8M13 12V7M15 12V8" fill="none" stroke="#d8d8d8" stroke-width="1.3"/></svg>
<svg class="a" style="left:869px;top:260px;" width="26" height="26" viewBox="0 0 26 26"><circle cx="9.5" cy="9" r="3" fill="none" stroke="#d8d8d8" stroke-width="1.2"/><circle cx="15.5" cy="9" r="3" fill="none" stroke="#d8d8d8" stroke-width="1.2"/><rect x="7" y="13" width="10" height="6" fill="none" stroke="#d8d8d8" stroke-width="1.2"/><path d="M17 16L21 13.5V18.5Z" fill="none" stroke="#d8d8d8" stroke-width="1.1"/></svg>
<svg class="a" style="left:869px;top:290px;" width="26" height="26" viewBox="0 0 26 26"><path d="M8 7H18L21 20H5Z M10.7 7L9.3 20M15.3 7L16.7 20M6.5 13H19.5" fill="none" stroke="#d8d8d8" stroke-width="1.2"/></svg>
<div class="a" style="left:62px;top:217px;width:280px;height:415px;background:#1d1d1d;border-radius:6px;"></div>
<svg class="a" style="left:72px;top:227px;" width="9" height="6" viewBox="0 0 9 6"><path d="M1 1L4.5 4.5L8 1" fill="none" stroke="#bbbbbb" stroke-width="1.2"/></svg>
<div class="a t" style="left:84px;top:220px;height:20px;line-height:20px;font-size:12px;color:#cfcfcf;"><span style="font-size:11.50px;letter-spacing:-0.50px;position:relative;top:-0.8px">ベベル</span></div>
<div class="a t" style="right:927px;top:250px;height:20px;line-height:20px;text-align:right;font-size:12px;color:#c4c4c4;"><span style="font-size:11.50px;letter-spacing:-0.50px;position:relative;top:-0.8px">影響</span></div>
<div class="a" style="left:181px;top:250px;width:153px;height:19px;background:#545454;border-radius:4px;"></div>
<div class="a" style="left:181px;top:250px;width:75px;height:19px;background:#4772b3;border-radius:4px 0 0 4px;"></div>
<div class="a t" style="left:181px;top:250px;width:75px;height:20px;line-height:20px;text-align:center;font-size:12px;color:#ffffff;"><span style="font-size:11.50px;letter-spacing:-0.50px;position:relative;top:-0.8px">頂点</span></div>
<div class="a t" style="left:256px;top:250px;width:78px;height:20px;line-height:20px;text-align:center;font-size:12px;color:#e6e6e6;"><span style="font-size:11.50px;letter-spacing:-0.50px;position:relative;top:-0.8px">辺</span></div>
<div class="a t" style="right:927px;top:280px;height:20px;line-height:20px;text-align:right;font-size:12px;color:#c4c4c4;"><span style="font-size:11.50px;letter-spacing:-0.50px;position:relative;top:-0.8px">幅のタイプ</span></div>
<div class="a" style="left:181px;top:281px;width:153px;height:19px;background:#282828;border-radius:4px;border:1px solid #3a3a3a;"></div>
<div class="a t" style="left:188px;top:280px;height:20px;line-height:20px;font-size:12px;color:#e6e6e6;"><span style="font-size:11.50px;letter-spacing:-0.50px;position:relative;top:-0.8px">オフセット</span></div>
<svg class="a" style="left:322px;top:288px;" width="9" height="6" viewBox="0 0 9 6"><path d="M1 1L4.5 4.5L8 1" fill="none" stroke="#e0e0e0" stroke-width="1.2"/></svg>
<div class="a t" style="right:927px;top:302px;height:20px;line-height:20px;text-align:right;font-size:12px;color:#c4c4c4;"><span style="font-size:11.50px;letter-spacing:-0.50px;position:relative;top:-0.8px">幅</span></div>
<div class="a" style="left:181px;top:303px;width:153px;height:19px;background:#545454;border-radius:4px;"></div>
<div class="a t" style="left:181px;top:302.5px;width:153px;height:20px;line-height:20px;text-align:center;font-size:12px;color:#e6e6e6;">0.83 m</div>
<div class="a t" style="right:927px;top:324px;height:20px;line-height:20px;text-align:right;font-size:12px;color:#c4c4c4;"><span style="font-size:11.50px;letter-spacing:-0.50px;position:relative;top:-0.8px">セグメント</span></div>
<div class="a" style="left:181px;top:325px;width:153px;height:19px;background:#545454;border-radius:4px;"></div>
<div class="a t" style="left:181px;top:324.5px;width:153px;height:20px;line-height:20px;text-align:center;font-size:12px;color:#e6e6e6;">4</div>
<div class="a t" style="right:927px;top:346px;height:20px;line-height:20px;text-align:right;font-size:12px;color:#c4c4c4;"><span style="font-size:11.50px;letter-spacing:-0.50px;position:relative;top:-0.8px">断面の形状</span></div>
<div class="a" style="left:181px;top:347px;width:153px;height:19px;background:#545454;border-radius:4px;"></div>
<div class="a" style="left:181px;top:347px;width:74px;height:19px;background:#4772b3;border-radius:4px 0 0 4px;"></div>
<div class="a t" style="left:181px;top:346.5px;width:153px;height:20px;line-height:20px;text-align:center;font-size:12px;color:#e6e6e6;">0.500</div>
<div class="a t" style="right:927px;top:368px;height:20px;line-height:20px;text-align:right;font-size:12px;color:#c4c4c4;"><span style="font-size:11.50px;letter-spacing:-0.50px;position:relative;top:-0.8px">マテリアルインデ</span>…</div>
<div class="a" style="left:181px;top:369px;width:153px;height:19px;background:#545454;border-radius:4px;"></div>
<div class="a t" style="left:181px;top:368.5px;width:153px;height:20px;line-height:20px;text-align:center;font-size:12px;color:#e6e6e6;">-1</div>
<div class="a" style="left:181px;top:393.0px;width:13px;height:13px;background:#545454;border-radius:3px;"></div>
<div class="a t" style="left:197px;top:389.5px;height:20px;line-height:20px;font-size:12px;color:#e0e0e0;"><span style="font-size:11.50px;letter-spacing:-0.50px;position:relative;top:-0.8px">法線のハード化</span></div>
<div class="a" style="left:181px;top:412.5px;width:13px;height:13px;background:#545454;border-radius:3px;"></div>
<div class="a t" style="left:197px;top:409px;height:20px;line-height:20px;font-size:12px;color:#e0e0e0;"><span style="font-size:11.50px;letter-spacing:-0.50px;position:relative;top:-0.8px">重複の回避</span></div>
<div class="a" style="left:181px;top:432.5px;width:13px;height:13px;background:#4772b3;border-radius:3px;"></div>
<svg class="a" style="left:181px;top:432.5px;" width="13" height="13" viewBox="0 0 13 13"><path d="M3 6.5L5.5 9L10 3.5" fill="none" stroke="#fff" stroke-width="1.6"/></svg>
<div class="a t" style="left:197px;top:429px;height:20px;line-height:20px;font-size:12px;color:#e0e0e0;"><span style="font-size:11.50px;letter-spacing:-0.50px;position:relative;top:-0.8px">ループスライド</span></div>
<div class="a t" style="right:927px;top:451px;height:20px;line-height:20px;text-align:right;font-size:12px;color:#6e6e6e;"><span style="font-size:11.50px;letter-spacing:-0.50px;position:relative;top:-0.8px">マーク</span></div>
<div class="a" style="left:181px;top:454.5px;width:13px;height:13px;background:#2e2e2e;border-radius:3px;"></div>
<div class="a t" style="left:197px;top:451px;height:20px;line-height:20px;font-size:12px;color:#7a7a7a;"><span style="font-size:11.50px;letter-spacing:-0.50px;position:relative;top:-0.8px">シーム</span></div>
<div class="a" style="left:181px;top:474.5px;width:13px;height:13px;background:#2e2e2e;border-radius:3px;"></div>
<div class="a t" style="left:197px;top:471px;height:20px;line-height:20px;font-size:12px;color:#7a7a7a;"><span style="font-size:11.50px;letter-spacing:-0.50px;position:relative;top:-0.8px">シャープ</span></div>
<div class="a t" style="right:927px;top:502px;height:20px;line-height:20px;text-align:right;font-size:12px;color:#6e6e6e;"><span style="font-size:11.50px;letter-spacing:-0.50px;position:relative;top:-0.8px">留め継ぎ外側</span></div>
<div class="a" style="left:181px;top:503px;width:153px;height:19px;background:#202020;border-radius:4px;border:1px solid #2a2a2a;"></div>
<div class="a t" style="left:188px;top:502.5px;height:20px;line-height:20px;font-size:12px;color:#7a7a7a;"><span style="font-size:11.50px;letter-spacing:-0.50px;position:relative;top:-0.8px">シャープ</span></div>
<svg class="a" style="left:322px;top:510px;" width="9" height="6" viewBox="0 0 9 6"><path d="M1 1L4.5 4.5L8 1" fill="none" stroke="#5a5a5a" stroke-width="1.2"/></svg>
<div class="a t" style="right:927px;top:524px;height:20px;line-height:20px;text-align:right;font-size:12px;color:#6e6e6e;"><span style="font-size:11.50px;letter-spacing:-0.50px;position:relative;top:-0.8px">内側</span></div>
<div class="a" style="left:181px;top:525px;width:153px;height:19px;background:#202020;border-radius:4px;border:1px solid #2a2a2a;"></div>
<div class="a t" style="left:188px;top:524.5px;height:20px;line-height:20px;font-size:12px;color:#7a7a7a;"><span style="font-size:11.50px;letter-spacing:-0.50px;position:relative;top:-0.8px">シャープ</span></div>
<svg class="a" style="left:322px;top:532px;" width="9" height="6" viewBox="0 0 9 6"><path d="M1 1L4.5 4.5L8 1" fill="none" stroke="#5a5a5a" stroke-width="1.2"/></svg>
<div class="a t" style="right:927px;top:554px;height:20px;line-height:20px;text-align:right;font-size:12px;color:#6e6e6e;"><span style="font-size:11.50px;letter-spacing:-0.50px;position:relative;top:-0.8px">交差タイプ</span></div>
<div class="a" style="left:181px;top:555px;width:153px;height:19px;background:#202020;border-radius:4px;border:1px solid #2a2a2a;"></div>
<div class="a t" style="left:188px;top:554.5px;height:20px;line-height:20px;font-size:12px;color:#7a7a7a;"><span style="font-size:11.50px;letter-spacing:-0.50px;position:relative;top:-0.8px">グリッドフィル</span></div>
<svg class="a" style="left:322px;top:562px;" width="9" height="6" viewBox="0 0 9 6"><path d="M1 1L4.5 4.5L8 1" fill="none" stroke="#5a5a5a" stroke-width="1.2"/></svg>
<div class="a t" style="right:927px;top:576px;height:20px;line-height:20px;text-align:right;font-size:12px;color:#c4c4c4;"><span style="font-size:11.50px;letter-spacing:-0.50px;position:relative;top:-0.8px">面の強さ</span></div>
<div class="a" style="left:181px;top:577px;width:153px;height:19px;background:#282828;border-radius:4px;border:1px solid #3a3a3a;"></div>
<div class="a t" style="left:188px;top:576.5px;height:20px;line-height:20px;font-size:12px;color:#e6e6e6;"><span style="font-size:11.50px;letter-spacing:-0.50px;position:relative;top:-0.8px">なし</span></div>
<svg class="a" style="left:322px;top:584px;" width="9" height="6" viewBox="0 0 9 6"><path d="M1 1L4.5 4.5L8 1" fill="none" stroke="#e0e0e0" stroke-width="1.2"/></svg>
<div class="a t" style="right:927px;top:606px;height:20px;line-height:20px;text-align:right;font-size:12px;color:#c4c4c4;"><span style="font-size:11.50px;letter-spacing:-0.50px;position:relative;top:-0.8px">断面のタイプ</span></div>
<div class="a" style="left:181px;top:607px;width:153px;height:19px;background:#545454;border-radius:4px;"></div>
<div class="a" style="left:181px;top:607px;width:75px;height:19px;background:#4772b3;border-radius:4px 0 0 4px;"></div>
<div class="a t" style="left:181px;top:607px;width:75px;height:20px;line-height:20px;text-align:center;font-size:12px;color:#ffffff;"><span style="font-size:11.50px;letter-spacing:-0.50px;position:relative;top:-0.8px">ラメ曲線</span></div>
<div class="a t" style="left:256px;top:607px;width:78px;height:20px;line-height:20px;text-align:center;font-size:12px;color:#e6e6e6;"><span style="font-size:11.50px;letter-spacing:-0.50px;position:relative;top:-0.8px">カスタム</span></div>
<svg class="a" style="left:90px;top:497px;" width="40" height="50" viewBox="0 0 40 50"><path d="M3 14C3 6 7 2.5 14 2.5H23C30 2.5 35 6 35 14V34C35 41 28 46 19 46C10 46 3 41 3 34Z" fill="none" stroke="#f0f0f0" stroke-width="1.3"/><path d="M3 22H35M13.5 2.5V22M24.5 2.5V22" stroke="#f0f0f0" stroke-width="1.3"/></svg>
<div class="a" style="left:909px;top:57px;width:187px;height:205px;background:#282828;border-radius:6px;border:1px solid #353535;"></div>
<div class="a" style="left:917px;top:60px;width:31px;height:19px;background:#262626;border-radius:5px;border:1px solid #363636;"></div>
<svg class="a" style="left:919px;top:61px;" width="18" height="17" viewBox="0 0 18 17"><rect x="2" y="2.5" width="5" height="3" fill="#dcdcdc"/><path d="M3.5 5.5V13.5H7M3.5 9.5H7" fill="none" stroke="#dcdcdc" stroke-width="1"/><rect x="8" y="8" width="7" height="3" fill="#dcdcdc"/><rect x="8" y="12" width="7" height="3" fill="#dcdcdc"/></svg>
<svg class="a" style="left:937px;top:67px;" width="9" height="6" viewBox="0 0 9 6"><path d="M1 1L4.5 4.5L8 1" fill="none" stroke="#d0d0d0" stroke-width="1.2"/></svg>
<div class="a" style="left:954px;top:60px;width:31px;height:19px;background:#262626;border-radius:5px;border:1px solid #363636;"></div>
<svg class="a" style="left:956px;top:61px;" width="18" height="17" viewBox="0 0 18 17"><rect x="5.5" y="2.5" width="10" height="9" fill="none" stroke="#dcdcdc" stroke-width="1.1"/><path d="M3.5 4.5V13.5H13.5M1.5 6.5V15.5H11.5" fill="none" stroke="#dcdcdc" stroke-width="1.1"/><path d="M6 11L9 7L11 9L13 6.5L15 11Z" fill="#dcdcdc"/><circle cx="8" cy="5" r="1" fill="#dcdcdc"/></svg>
<svg class="a" style="left:974px;top:67px;" width="9" height="6" viewBox="0 0 9 6"><path d="M1 1L4.5 4.5L8 1" fill="none" stroke="#d0d0d0" stroke-width="1.2"/></svg>
<div class="a" style="left:1002px;top:60px;width:94px;height:19px;background:#1f1f1f;border-radius:5px 0 0 5px;border:1px solid #343434;border-right:0;"></div>
<svg class="a" style="left:1006px;top:61px;" width="17" height="17" viewBox="0 0 17 17"><circle cx="10" cy="7" r="4.5" fill="none" stroke="#dcdcdc" stroke-width="1.3"/><path d="M7 10L2.5 14.5" stroke="#dcdcdc" stroke-width="1.5"/></svg>
<div class="a t" style="left:1029px;top:59.5px;height:20px;line-height:20px;font-size:12px;color:#7a7a7a;"><span style="font-size:11.50px;letter-spacing:-0.50px;position:relative;top:-0.8px">検索</span></div>
<div class="a" style="left:909px;top:84.0px;width:187px;height:20px;background:#282828;"></div>
<div class="a" style="left:909px;top:104.0px;width:187px;height:20px;background:#2b2b2b;"></div>
<div class="a" style="left:909px;top:124.0px;width:187px;height:20px;background:#3a3a3a;"></div>
<div class="a" style="left:909px;top:144.0px;width:187px;height:20px;background:#2b2b2b;"></div>
<div class="a" style="left:909px;top:164.0px;width:187px;height:20px;background:#282828;"></div>
<div class="a" style="left:909px;top:184.0px;width:187px;height:20px;background:#2b2b2b;"></div>
<div class="a" style="left:909px;top:204.0px;width:187px;height:20px;background:#334d80;"></div>
<svg class="a" style="left:931px;top:86.0px;" width="16" height="16" viewBox="0 0 16 16"><rect x="1.5" y="2" width="13" height="3.5" fill="#d8d8d8"/><path d="M2.5 6.5H13.5V14H2.5Z" fill="#d8d8d8"/><rect x="5.5" y="8.5" width="5" height="1.6" fill="#282828"/></svg>
<div class="a t" style="left:953px;top:84.0px;width:72px;letter-spacing:-0.6px;height:20px;line-height:20px;overflow:hidden;color:#dcdcdc;font-size:12px">シーンコレクション</div>
<svg class="a" style="left:934px;top:110.0px;" width="10" height="8" viewBox="0 0 10 8"><path d="M1 1.5L5 5.5L9 1.5" fill="none" stroke="#bdbdbd" stroke-width="1.1"/></svg>
<div class="a" style="left:950px;top:105.0px;width:19px;height:18px;background:#484848;border-radius:4px;border:1px solid #5a5a5a;"></div>
<svg class="a" style="left:952px;top:106.0px;" width="16" height="16" viewBox="0 0 16 16"><rect x="1.5" y="2" width="13" height="3.5" fill="#d8d8d8"/><path d="M2.5 6.5H13.5V14H2.5Z" fill="#d8d8d8"/><rect x="5.5" y="8.5" width="5" height="1.6" fill="#484848"/></svg>
<div class="a t" style="left:973px;top:104.5px;height:20px;line-height:20px;font-size:12px;color:#ffffff;">Collection</div>
<div class="a" style="left:1032px;top:109.0px;width:11px;height:11px;background:#f0f0f0;border-radius:2px;"></div>
<svg class="a" style="left:1032px;top:109.0px;" width="11" height="11" viewBox="0 0 11 11"><path d="M2 5.5L4.5 8L9 2.5" fill="none" stroke="#222" stroke-width="1.6"/></svg>
<svg class="a" style="left:1050px;top:107.0px;" width="16" height="14" viewBox="0 0 16 14"><path d="M1.5 7C4.5 2 11.5 2 14.5 7C11.5 12 4.5 12 1.5 7Z" fill="#f0f0f0"/><circle cx="8" cy="7" r="2.6" fill="#2b2b2b"/><circle cx="8" cy="7" r="1.3" fill="#f0f0f0"/></svg>
<svg class="a" style="left:1069px;top:107.0px;" width="16" height="14" viewBox="0 0 16 14"><path d="M1.5 3.5H5L6.5 1.5H9.5L11 3.5H14.5V12.5H1.5Z" fill="#f0f0f0"/><circle cx="8" cy="7.5" r="3.2" fill="#2b2b2b"/><circle cx="8" cy="7.5" r="1.8" fill="#f0f0f0"/></svg>
<svg class="a" style="left:1050px;top:127.0px;" width="16" height="14" viewBox="0 0 16 14"><path d="M1.5 7C4.5 2 11.5 2 14.5 7C11.5 12 4.5 12 1.5 7Z" fill="#f0f0f0"/><circle cx="8" cy="7" r="2.6" fill="#2b2b2b"/><circle cx="8" cy="7" r="1.3" fill="#f0f0f0"/></svg>
<svg class="a" style="left:1069px;top:127.0px;" width="16" height="14" viewBox="0 0 16 14"><path d="M1.5 3.5H5L6.5 1.5H9.5L11 3.5H14.5V12.5H1.5Z" fill="#f0f0f0"/><circle cx="8" cy="7.5" r="3.2" fill="#2b2b2b"/><circle cx="8" cy="7.5" r="1.8" fill="#f0f0f0"/></svg>
<svg class="a" style="left:1050px;top:147.0px;" width="16" height="14" viewBox="0 0 16 14"><path d="M1.5 7C4.5 2 11.5 2 14.5 7C11.5 12 4.5 12 1.5 7Z" fill="#f0f0f0"/><circle cx="8" cy="7" r="2.6" fill="#2b2b2b"/><circle cx="8" cy="7" r="1.3" fill="#f0f0f0"/></svg>
<svg class="a" style="left:1069px;top:147.0px;" width="16" height="14" viewBox="0 0 16 14"><path d="M1.5 3.5H5L6.5 1.5H9.5L11 3.5H14.5V12.5H1.5Z" fill="#f0f0f0"/><circle cx="8" cy="7.5" r="3.2" fill="#2b2b2b"/><circle cx="8" cy="7.5" r="1.8" fill="#f0f0f0"/></svg>
<svg class="a" style="left:1050px;top:167.0px;" width="16" height="14" viewBox="0 0 16 14"><path d="M2 5C5 10 11 10 14 5" fill="none" stroke="#cfcfcf" stroke-width="1.1"/></svg>
<svg class="a" style="left:1069px;top:167.0px;" width="16" height="14" viewBox="0 0 16 14"><path d="M1.5 3.5H5L6.5 1.5H9.5L11 3.5H14.5V12.5H1.5Z" fill="#f0f0f0"/><circle cx="8" cy="7.5" r="3.2" fill="#2b2b2b"/><circle cx="8" cy="7.5" r="1.8" fill="#f0f0f0"/></svg>
<svg class="a" style="left:1050px;top:187.0px;" width="16" height="14" viewBox="0 0 16 14"><path d="M2 5C5 10 11 10 14 5" fill="none" stroke="#cfcfcf" stroke-width="1.1"/></svg>
<svg class="a" style="left:1069px;top:187.0px;" width="16" height="14" viewBox="0 0 16 14"><path d="M1.5 3.5H5L6.5 1.5H9.5L11 3.5H14.5V12.5H1.5Z" fill="#f0f0f0"/><circle cx="8" cy="7.5" r="3.2" fill="#2b2b2b"/><circle cx="8" cy="7.5" r="1.8" fill="#f0f0f0"/></svg>
<svg class="a" style="left:1050px;top:207.0px;" width="16" height="14" viewBox="0 0 16 14"><path d="M1.5 7C4.5 2 11.5 2 14.5 7C11.5 12 4.5 12 1.5 7Z" fill="#f0f0f0"/><circle cx="8" cy="7" r="2.6" fill="#2b2b2b"/><circle cx="8" cy="7" r="1.3" fill="#f0f0f0"/></svg>
<svg class="a" style="left:1069px;top:207.0px;" width="16" height="14" viewBox="0 0 16 14"><path d="M1.5 3.5H5L6.5 1.5H9.5L11 3.5H14.5V12.5H1.5Z" fill="#f0f0f0"/><circle cx="8" cy="7.5" r="3.2" fill="#2b2b2b"/><circle cx="8" cy="7.5" r="1.8" fill="#f0f0f0"/></svg>
<div class="a" style="left:937px;top:130.0px;width:1px;height:92px;background:#555555;"></div>
<svg class="a" style="left:958px;top:130.0px;" width="6" height="9" viewBox="0 0 6 9"><path d="M1 1L4.5 4.5L1 8" fill="none" stroke="#bdbdbd" stroke-width="1.2"/></svg>
<svg class="a" style="left:958px;top:150.0px;" width="6" height="9" viewBox="0 0 6 9"><path d="M1 1L4.5 4.5L1 8" fill="none" stroke="#bdbdbd" stroke-width="1.2"/></svg>
<svg class="a" style="left:958px;top:170.0px;" width="6" height="9" viewBox="0 0 6 9"><path d="M1 1L4.5 4.5L1 8" fill="none" stroke="#7a7a7a" stroke-width="1.2"/></svg>
<svg class="a" style="left:958px;top:190.0px;" width="6" height="9" viewBox="0 0 6 9"><path d="M1 1L4.5 4.5L1 8" fill="none" stroke="#7a7a7a" stroke-width="1.2"/></svg>
<svg class="a" style="left:958px;top:210.0px;" width="6" height="9" viewBox="0 0 6 9"><path d="M1 1L4.5 4.5L1 8" fill="none" stroke="#bdbdbd" stroke-width="1.2"/></svg>
<svg class="a" style="left:969px;top:125.0px;" width="18" height="18" viewBox="0 0 18 18"><circle cx="5" cy="5" r="3.3" fill="#e0883a"/><circle cx="11" cy="5" r="3.3" fill="#e0883a"/><rect x="2" y="8" width="11" height="7" fill="#e0883a"/><path d="M13 11.5L17 9V15Z" fill="#e0883a"/><circle cx="5" cy="5" r="1.2" fill="#3a3a3a"/><circle cx="11" cy="5" r="1.2" fill="#3a3a3a"/><rect x="4" y="10" width="5" height="2.5" fill="#3a3a3a"/></svg>
<div class="a t" style="left:993px;top:125.0px;height:20px;line-height:20px;font-size:12px;color:#a0a0a0;">Camer</div>
<svg class="a" style="left:971px;top:145.0px;" width="16" height="18" viewBox="0 0 16 18"><circle cx="8" cy="7" r="5.5" fill="#e0883a"/><rect x="5" y="11" width="6" height="5" fill="#e0883a"/><path d="M5.5 7L7 9H9L10.5 7" fill="none" stroke="#3a2a1a" stroke-width="1"/></svg>
<div class="a t" style="left:993px;top:145.0px;height:20px;line-height:20px;font-size:12px;color:#e6e6e6;">Light</div>
<svg class="a" style="left:970px;top:166.0px;" width="16" height="16" viewBox="0 0 16 16"><path d="M2 2.5H14L8 14Z" fill="none" stroke="#8a5a30" stroke-width="2.4" stroke-linejoin="round"/></svg>
<div class="a t" style="left:993px;top:165.0px;height:20px;line-height:20px;font-size:12px;color:#8a8a8a;"><span style="font-size:11.50px;letter-spacing:-0.50px;position:relative;top:-0.8px">円柱</span></div>
<svg class="a" style="left:970px;top:186.0px;" width="16" height="16" viewBox="0 0 16 16"><path d="M2 2.5H14L8 14Z" fill="none" stroke="#8a5a30" stroke-width="2.4" stroke-linejoin="round"/></svg>
<div class="a t" style="left:993px;top:185.0px;height:20px;line-height:20px;font-size:12px;color:#8a8a8a;"><span style="font-size:11.50px;letter-spacing:-0.50px;position:relative;top:-0.8px">平面</span></div>
<div class="a" style="left:969px;top:205.0px;width:18px;height:18px;background:#4a6090;border-radius:4px;"></div>
<svg class="a" style="left:970px;top:206.0px;" width="16" height="16" viewBox="0 0 16 16"><path d="M2 2.5H14L8 14Z" fill="none" stroke="#e0883a" stroke-width="2.4" stroke-linejoin="round"/></svg>
<div class="a t" style="left:993px;top:204.0px;width:34px;height:20px;line-height:20px;overflow:hidden;color:#ffaf29;font-size:12px">平面.001</div>
<div class="a" style="left:917px;top:173.0px;width:4px;height:4px;background:#dcdcdc;border-radius:2px;"></div>
<div class="a" style="left:917px;top:193.0px;width:4px;height:4px;background:#dcdcdc;border-radius:2px;"></div>
<svg class="a" style="left:911px;top:206.0px;" width="16" height="16" viewBox="0 0 16 16"><rect x="1.5" y="3" width="3" height="3" fill="none" stroke="#e0e0e0"/><rect x="1.5" y="12" width="3" height="3" fill="none" stroke="#e0e0e0"/><rect x="11.5" y="12" width="3" height="3" fill="none" stroke="#e0e0e0"/><rect x="11" y="1.5" width="4.5" height="4.5" fill="#f0f0f0"/><path d="M4.5 4.5H11M3 6V12M4.5 13.5H11.5M13 6V12" stroke="#e0e0e0"/></svg>
<div class="a" style="left:909px;top:265px;width:187px;height:426px;background:#2b2b2b;border-radius:6px;border:1px solid #353535;"></div>
<div class="a" style="left:917px;top:268px;width:31px;height:19px;background:#262626;border-radius:5px;border:1px solid #363636;"></div>
<svg class="a" style="left:919px;top:269px;" width="18" height="17" viewBox="0 0 18 17"><rect x="1.5" y="2" width="12" height="6" rx="3" fill="#e6e6e6"/><rect x="1.5" y="9.5" width="12" height="6" rx="3" fill="#e6e6e6"/><circle cx="10.5" cy="5" r="2" fill="#262626"/><circle cx="4.5" cy="12.5" r="2" fill="#262626"/></svg>
<svg class="a" style="left:937px;top:275px;" width="9" height="6" viewBox="0 0 9 6"><path d="M1 1L4.5 4.5L8 1" fill="none" stroke="#d0d0d0" stroke-width="1.2"/></svg>
<div class="a" style="left:971px;top:268px;width:117px;height:19px;background:#1f1f1f;border-radius:5px;border:1px solid #343434;"></div>
<svg class="a" style="left:975px;top:269px;" width="17" height="17" viewBox="0 0 17 17"><circle cx="10" cy="7" r="4.5" fill="none" stroke="#dcdcdc" stroke-width="1.3"/><path d="M7 10L2.5 14.5" stroke="#dcdcdc" stroke-width="1.5"/></svg>
<div class="a t" style="left:997px;top:267.5px;height:20px;line-height:20px;font-size:12px;color:#7a7a7a;"><span style="font-size:11.50px;letter-spacing:-0.50px;position:relative;top:-0.8px">検索</span></div>
<div class="a" style="left:909px;top:290px;width:28px;height:401px;background:#1d1d1d;border-radius:0 0 0 6px;"></div>
<div class="a" style="left:909px;top:290px;width:28px;height:37px;background:#262626;"></div>
<div class="a" style="left:911px;top:519px;width:26px;height:33px;background:#2b2b2b;border-radius:5px 0 0 5px;"></div>
<svg class="a" style="left:914px;top:300px;" width="18" height="18" viewBox="0 0 18 18"><path d="M4 2V9M2.5 9H5.5V11M4 11V16" stroke="#dcdcdc" stroke-width="1.4"/><circle cx="4" cy="14" r="2.2" fill="#dcdcdc"/><path d="M11 2C11 4 12 5 13 5C14 5 15 4 15 2M13 5V16" fill="none" stroke="#dcdcdc" stroke-width="1.6"/></svg>
<svg class="a" style="left:914px;top:338px;" width="18" height="18" viewBox="0 0 18 18"><rect x="2" y="6" width="14" height="10" fill="none" stroke="#dcdcdc" stroke-width="1.4"/><path d="M5 6V3H13V6" fill="none" stroke="#dcdcdc" stroke-width="1.3"/><path d="M5 10H10M5 13H12" stroke="#dcdcdc" stroke-width="1.3"/></svg>
<svg class="a" style="left:914px;top:368px;" width="18" height="18" viewBox="0 0 18 18"><rect x="2" y="2" width="14" height="5" fill="#dcdcdc"/><path d="M3 7V15H15V7" fill="none" stroke="#dcdcdc" stroke-width="1.4"/><path d="M6 14L9 10L12 14Z" fill="#dcdcdc"/></svg>
<svg class="a" style="left:914px;top:396px;" width="18" height="18" viewBox="0 0 18 18"><rect x="6" y="2" width="10" height="10" fill="none" stroke="#dcdcdc" stroke-width="1.3"/><path d="M4 4V14H14M2 6V16H12" fill="none" stroke="#dcdcdc" stroke-width="1.2"/><path d="M7 11L10 7L12 9L15 6V11Z" fill="#dcdcdc"/></svg>
<svg class="a" style="left:914px;top:424px;" width="18" height="18" viewBox="0 0 18 18"><path d="M6 2L2 10A4 4 0 0 0 10 10Z" fill="#dcdcdc"/><circle cx="13" cy="5" r="2.3" fill="#dcdcdc"/><circle cx="11" cy="13" r="3.5" fill="#2b2b2b" stroke="#dcdcdc" stroke-width="1.3"/></svg>
<svg class="a" style="left:914px;top:452px;" width="18" height="18" viewBox="0 0 18 18"><circle cx="9" cy="9" r="7" fill="none" stroke="#c8505a" stroke-width="1.6"/><path d="M4 6C6 6 7 8 6 10C5 12 7 14 8 16M10 2C10 5 13 5 12 8C11 10 14 11 16 10" fill="none" stroke="#c8505a" stroke-width="1.6"/></svg>
<svg class="a" style="left:914px;top:487px;" width="18" height="18" viewBox="0 0 18 18"><rect x="2" y="2.5" width="14" height="4" fill="none" stroke="#dcdcdc" stroke-width="1.4"/><rect x="3" y="7.5" width="12" height="8" fill="none" stroke="#dcdcdc" stroke-width="1.4"/><path d="M6 10.5H12" stroke="#dcdcdc" stroke-width="1.4"/></svg>
<svg class="a" style="left:914px;top:524px;" width="18" height="18" viewBox="0 0 18 18"><path d="M1.5 5V1.5H5M13 1.5H16.5V5M16.5 13V16.5H13M5 16.5H1.5V13" fill="none" stroke="#e0883a" stroke-width="1.3"/><rect x="5" y="5" width="8" height="8" fill="#e0883a"/></svg>
<svg class="a" style="left:914px;top:553px;" width="18" height="18" viewBox="0 0 18 18"><path d="M3 15L9 9" stroke="#4a7ad8" stroke-width="3"/><circle cx="12" cy="6" r="4" fill="none" stroke="#4a7ad8" stroke-width="1.6"/></svg>
<svg class="a" style="left:914px;top:581px;" width="18" height="18" viewBox="0 0 18 18"><circle cx="3.5" cy="3.5" r="2.3" fill="#6aa0e8"/><circle cx="14.5" cy="3.5" r="1.8" fill="#6aa0e8"/><circle cx="14.5" cy="15" r="2.3" fill="#6aa0e8"/><path d="M3.5 3.5H14.5M3.5 3.5L14.5 15" stroke="#6aa0e8" stroke-width="1.4"/></svg>
<svg class="a" style="left:914px;top:608px;" width="18" height="18" viewBox="0 0 18 18"><circle cx="9" cy="10" r="6" fill="none" stroke="#6aa0e8" stroke-width="1.6"/><circle cx="9" cy="10" r="2.5" fill="#6aa0e8"/><circle cx="14" cy="4" r="2" fill="#6aa0e8"/></svg>
<svg class="a" style="left:914px;top:636px;" width="18" height="18" viewBox="0 0 18 18"><path d="M3 12C3 8 8 3 12 3C15 3 16 6 15 9C14 13 8 16 5 15C3.5 14.5 3 13.5 3 12Z" fill="none" stroke="#6aa0e8" stroke-width="1.6"/><circle cx="9" cy="10" r="2.5" fill="#6aa0e8"/></svg>
<svg class="a" style="left:914px;top:664px;" width="18" height="18" viewBox="0 0 18 18"><path d="M2.5 3.5H15.5L9 15Z" fill="none" stroke="#22c4a0" stroke-width="1.4"/><circle cx="2.5" cy="3.5" r="1.8" fill="#22c4a0"/><circle cx="15.5" cy="3.5" r="1.8" fill="#22c4a0"/><circle cx="9" cy="15" r="1.8" fill="#22c4a0"/></svg>
<div class="a" style="left:1091px;top:292px;width:3px;height:300px;background:#3d3d3d;border-radius:2px;"></div>
<svg class="a" style="left:946px;top:301px;" width="17" height="17" viewBox="0 0 17 17"><path d="M1.5 5V1.5H5M12 1.5H15.5V5M15.5 12V15.5H12M5 15.5H1.5V12" fill="none" stroke="#dcdcdc" stroke-width="1.2"/><rect x="4.5" y="4.5" width="8" height="8" fill="#e8e8e8"/></svg>
<div class="a t" style="left:971px;top:299px;height:20px;line-height:20px;font-size:12px;color:#e6e6e6;"><span style="font-size:11.50px;letter-spacing:-0.50px;position:relative;top:-0.8px">平面</span>.001</div>
<svg class="a" style="left:1071px;top:301px;" width="17" height="17" viewBox="0 0 17 17"><path d="M10 1.5L15.5 7L13.5 7.5L10.5 10.5L10.5 13L4 6.5L6.5 6.5L9.5 3.5Z" fill="none" stroke="#b8b8b8" stroke-width="1.1"/><path d="M6.5 10.5L1.5 15.5" stroke="#b8b8b8" stroke-width="1.2"/></svg>
<div class="a" style="left:946px;top:335px;width:142px;height:19px;background:#1d1d1d;border-radius:4px;"></div>
<div class="a" style="left:946px;top:335px;width:31px;height:19px;background:#282828;border-radius:4px 0 0 4px;"></div>
<svg class="a" style="left:948px;top:336px;" width="17" height="17" viewBox="0 0 17 17"><path d="M1.5 5V1.5H5M12 1.5H15.5V5M15.5 12V15.5H12M5 15.5H1.5V12" fill="none" stroke="#dcdcdc" stroke-width="1.2"/><rect x="4.5" y="4.5" width="8" height="8" fill="#e8e8e8"/></svg>
<svg class="a" style="left:965px;top:342px;" width="9" height="6" viewBox="0 0 9 6"><path d="M1 1L4.5 4.5L8 1" fill="none" stroke="#d0d0d0" stroke-width="1.2"/></svg>
<div class="a t" style="left:984px;top:334.5px;height:20px;line-height:20px;font-size:12px;color:#e6e6e6;"><span style="font-size:11.50px;letter-spacing:-0.50px;position:relative;top:-0.8px">平面</span>.001</div>
<div class="a" style="left:945px;top:364px;width:144px;height:280px;background:#363636;border-radius:5px;"></div>
<svg class="a" style="left:955px;top:374px;" width="9" height="6" viewBox="0 0 9 6"><path d="M1 1L4.5 4.5L8 1" fill="none" stroke="#cfcfcf" stroke-width="1.2"/></svg>
<div class="a t" style="left:968px;top:367.5px;height:20px;line-height:20px;font-size:12px;color:#dcdcdc;"><span style="font-size:11.50px;letter-spacing:-0.50px;position:relative;top:-0.8px">トランスフォーム</span></div>
<svg class="a" style="left:1067px;top:374px;" width="16" height="8" viewBox="0 0 16 8"><circle cx="1.0" cy="1.5" r="0.7" fill="#8a8a8a"/><circle cx="1.0" cy="5.5" r="0.7" fill="#8a8a8a"/><circle cx="4.5" cy="1.5" r="0.7" fill="#8a8a8a"/><circle cx="4.5" cy="5.5" r="0.7" fill="#8a8a8a"/><circle cx="8.0" cy="1.5" r="0.7" fill="#8a8a8a"/><circle cx="8.0" cy="5.5" r="0.7" fill="#8a8a8a"/><circle cx="11.5" cy="1.5" r="0.7" fill="#8a8a8a"/><circle cx="11.5" cy="5.5" r="0.7" fill="#8a8a8a"/></svg>
<div class="a" style="left:1002px;top:399.0px;width:38px;height:19px;background:#545454;border-radius:4px 4px 0 0;"></div>
<div class="a t" style="left:1002px;top:398.5px;width:38px;height:20px;line-height:20px;text-align:center;font-size:12px;color:#e6e6e6;">0</div>
<div class="a" style="left:1002px;top:418.5px;width:38px;height:19px;background:#545454;border-radius:0;"></div>
<div class="a t" style="left:1002px;top:418.0px;width:38px;height:20px;line-height:20px;text-align:center;font-size:12px;color:#e6e6e6;">0</div>
<div class="a" style="left:1002px;top:438.0px;width:38px;height:19px;background:#545454;border-radius:0 0 4px 4px;"></div>
<div class="a t" style="left:1002px;top:437.5px;width:38px;height:20px;line-height:20px;text-align:center;font-size:12px;color:#e6e6e6;">0.8</div>
<div class="a" style="left:1002px;top:418.0px;width:38px;height:1px;background:#484848;"></div>
<div class="a" style="left:1002px;top:437.5px;width:38px;height:1px;background:#484848;"></div>
<div class="a t" style="right:117px;top:398px;height:20px;line-height:20px;text-align:right;font-size:12px;color:#dcdcdc;"><span style="font-size:11.50px;letter-spacing:-0.50px;position:relative;top:-0.8px">位置</span></div>
<div class="a t" style="left:983px;top:398px;width:10px;height:20px;line-height:20px;text-align:center;font-size:12px;color:#dcdcdc;">X</div>
<svg class="a" style="left:1043px;top:400px;" width="16" height="16" viewBox="0 0 16 16"><path d="M3.5 7V4.5A2.5 2.5 0 0 1 8.5 4.5" fill="none" stroke="#c8c8c8" stroke-width="1.1"/><rect x="5.5" y="7.5" width="9" height="6" fill="none" stroke="#c8c8c8" stroke-width="1.1"/><rect x="9.5" y="10" width="1.2" height="1.5" fill="#c8c8c8"/></svg>
<div class="a" style="left:1069.5px;top:406.5px;width:3px;height:3px;background:#e0e0e0;border-radius:2px;"></div>
<div class="a t" style="left:983px;top:417.5px;width:10px;height:20px;line-height:20px;text-align:center;font-size:12px;color:#dcdcdc;">Y</div>
<svg class="a" style="left:1043px;top:419.5px;" width="16" height="16" viewBox="0 0 16 16"><path d="M3.5 7V4.5A2.5 2.5 0 0 1 8.5 4.5" fill="none" stroke="#c8c8c8" stroke-width="1.1"/><rect x="5.5" y="7.5" width="9" height="6" fill="none" stroke="#c8c8c8" stroke-width="1.1"/><rect x="9.5" y="10" width="1.2" height="1.5" fill="#c8c8c8"/></svg>
<div class="a" style="left:1069.5px;top:426.0px;width:3px;height:3px;background:#e0e0e0;border-radius:2px;"></div>
<div class="a t" style="left:983px;top:437px;width:10px;height:20px;line-height:20px;text-align:center;font-size:12px;color:#dcdcdc;">Z</div>
<svg class="a" style="left:1043px;top:439px;" width="16" height="16" viewBox="0 0 16 16"><path d="M3.5 7V4.5A2.5 2.5 0 0 1 8.5 4.5" fill="none" stroke="#c8c8c8" stroke-width="1.1"/><rect x="5.5" y="7.5" width="9" height="6" fill="none" stroke="#c8c8c8" stroke-width="1.1"/><rect x="9.5" y="10" width="1.2" height="1.5" fill="#c8c8c8"/></svg>
<div class="a" style="left:1069.5px;top:445.5px;width:3px;height:3px;background:#e0e0e0;border-radius:2px;"></div>
<div class="a" style="left:1002px;top:464.0px;width:38px;height:19px;background:#545454;border-radius:4px 4px 0 0;"></div>
<div class="a t" style="left:1002px;top:463.5px;width:38px;height:20px;line-height:20px;text-align:center;font-size:12px;color:#e6e6e6;">90</div>
<div class="a" style="left:1002px;top:483.5px;width:38px;height:19px;background:#545454;border-radius:0;"></div>
<div class="a t" style="left:1002px;top:483.0px;width:38px;height:20px;line-height:20px;text-align:center;font-size:12px;color:#e6e6e6;">0°</div>
<div class="a" style="left:1002px;top:503.0px;width:38px;height:19px;background:#545454;border-radius:0 0 4px 4px;"></div>
<div class="a t" style="left:1002px;top:502.5px;width:38px;height:20px;line-height:20px;text-align:center;font-size:12px;color:#e6e6e6;">0°</div>
<div class="a" style="left:1002px;top:483.0px;width:38px;height:1px;background:#484848;"></div>
<div class="a" style="left:1002px;top:502.5px;width:38px;height:1px;background:#484848;"></div>
<div class="a t" style="right:117px;top:463px;height:20px;line-height:20px;text-align:right;font-size:12px;color:#dcdcdc;"><span style="font-size:11.50px;letter-spacing:-0.50px;position:relative;top:-0.8px">回転</span></div>
<div class="a t" style="left:983px;top:463px;width:10px;height:20px;line-height:20px;text-align:center;font-size:12px;color:#dcdcdc;">X</div>
<svg class="a" style="left:1043px;top:465px;" width="16" height="16" viewBox="0 0 16 16"><path d="M3.5 7V4.5A2.5 2.5 0 0 1 8.5 4.5" fill="none" stroke="#c8c8c8" stroke-width="1.1"/><rect x="5.5" y="7.5" width="9" height="6" fill="none" stroke="#c8c8c8" stroke-width="1.1"/><rect x="9.5" y="10" width="1.2" height="1.5" fill="#c8c8c8"/></svg>
<div class="a" style="left:1069.5px;top:471.5px;width:3px;height:3px;background:#e0e0e0;border-radius:2px;"></div>
<div class="a t" style="left:983px;top:482.5px;width:10px;height:20px;line-height:20px;text-align:center;font-size:12px;color:#dcdcdc;">Y</div>
<svg class="a" style="left:1043px;top:484.5px;" width="16" height="16" viewBox="0 0 16 16"><path d="M3.5 7V4.5A2.5 2.5 0 0 1 8.5 4.5" fill="none" stroke="#c8c8c8" stroke-width="1.1"/><rect x="5.5" y="7.5" width="9" height="6" fill="none" stroke="#c8c8c8" stroke-width="1.1"/><rect x="9.5" y="10" width="1.2" height="1.5" fill="#c8c8c8"/></svg>
<div class="a" style="left:1069.5px;top:491.0px;width:3px;height:3px;background:#e0e0e0;border-radius:2px;"></div>
<div class="a t" style="left:983px;top:502px;width:10px;height:20px;line-height:20px;text-align:center;font-size:12px;color:#dcdcdc;">Z</div>
<svg class="a" style="left:1043px;top:504px;" width="16" height="16" viewBox="0 0 16 16"><path d="M3.5 7V4.5A2.5 2.5 0 0 1 8.5 4.5" fill="none" stroke="#c8c8c8" stroke-width="1.1"/><rect x="5.5" y="7.5" width="9" height="6" fill="none" stroke="#c8c8c8" stroke-width="1.1"/><rect x="9.5" y="10" width="1.2" height="1.5" fill="#c8c8c8"/></svg>
<div class="a" style="left:1069.5px;top:510.5px;width:3px;height:3px;background:#e0e0e0;border-radius:2px;"></div>
<div class="a" style="left:1002px;top:529px;width:38px;height:18px;background:#1d1d1d;border-radius:4px;"></div>
<div class="a t" style="left:1008px;top:528px;height:20px;line-height:20px;font-size:12px;color:#e6e6e6;">X…</div>
<svg class="a" style="left:1029px;top:535px;" width="9" height="6" viewBox="0 0 9 6"><path d="M1 1L4.5 4.5L8 1" fill="none" stroke="#d0d0d0" stroke-width="1.2"/></svg>
<div class="a" style="left:1069.5px;top:536.5px;width:3px;height:3px;background:#e0e0e0;border-radius:2px;"></div>
<div class="a t" style="right:117px;top:528px;height:20px;line-height:20px;text-align:right;font-size:12px;color:#dcdcdc;"><span style="font-size:11.50px;letter-spacing:-0.50px;position:relative;top:-0.8px">モード</span></div>
<div class="a" style="left:1002px;top:553.0px;width:38px;height:19px;background:#545454;border-radius:4px 4px 0 0;"></div>
<div class="a t" style="left:1002px;top:552.5px;width:38px;height:20px;line-height:20px;text-align:center;font-size:12px;color:#e6e6e6;">0.6</div>
<div class="a" style="left:1002px;top:572.5px;width:38px;height:19px;background:#545454;border-radius:0;"></div>
<div class="a t" style="left:1002px;top:572.0px;width:38px;height:20px;line-height:20px;text-align:center;font-size:12px;color:#e6e6e6;">0.8</div>
<div class="a" style="left:1002px;top:592.0px;width:38px;height:19px;background:#545454;border-radius:0 0 4px 4px;"></div>
<div class="a t" style="left:1002px;top:591.5px;width:38px;height:20px;line-height:20px;text-align:center;font-size:12px;color:#e6e6e6;">0.6</div>
<div class="a" style="left:1002px;top:572.0px;width:38px;height:1px;background:#484848;"></div>
<div class="a" style="left:1002px;top:591.5px;width:38px;height:1px;background:#484848;"></div>
<div class="a t" style="right:117px;top:552px;height:20px;line-height:20px;text-align:right;font-size:12px;color:#dcdcdc;"><span style="font-size:11.50px;letter-spacing:-0.50px;position:relative;top:-0.8px">スケ</span>…</div>
<div class="a t" style="left:983px;top:552px;width:10px;height:20px;line-height:20px;text-align:center;font-size:12px;color:#dcdcdc;">X</div>
<svg class="a" style="left:1043px;top:554px;" width="16" height="16" viewBox="0 0 16 16"><path d="M3.5 7V4.5A2.5 2.5 0 0 1 8.5 4.5" fill="none" stroke="#c8c8c8" stroke-width="1.1"/><rect x="5.5" y="7.5" width="9" height="6" fill="none" stroke="#c8c8c8" stroke-width="1.1"/><rect x="9.5" y="10" width="1.2" height="1.5" fill="#c8c8c8"/></svg>
<div class="a" style="left:1069.5px;top:560.5px;width:3px;height:3px;background:#e0e0e0;border-radius:2px;"></div>
<div class="a t" style="left:983px;top:571.5px;width:10px;height:20px;line-height:20px;text-align:center;font-size:12px;color:#dcdcdc;">Y</div>
<svg class="a" style="left:1043px;top:573.5px;" width="16" height="16" viewBox="0 0 16 16"><path d="M3.5 7V4.5A2.5 2.5 0 0 1 8.5 4.5" fill="none" stroke="#c8c8c8" stroke-width="1.1"/><rect x="5.5" y="7.5" width="9" height="6" fill="none" stroke="#c8c8c8" stroke-width="1.1"/><rect x="9.5" y="10" width="1.2" height="1.5" fill="#c8c8c8"/></svg>
<div class="a" style="left:1069.5px;top:580.0px;width:3px;height:3px;background:#e0e0e0;border-radius:2px;"></div>
<div class="a t" style="left:983px;top:591px;width:10px;height:20px;line-height:20px;text-align:center;font-size:12px;color:#dcdcdc;">Z</div>
<svg class="a" style="left:1043px;top:593px;" width="16" height="16" viewBox="0 0 16 16"><path d="M3.5 7V4.5A2.5 2.5 0 0 1 8.5 4.5" fill="none" stroke="#c8c8c8" stroke-width="1.1"/><rect x="5.5" y="7.5" width="9" height="6" fill="none" stroke="#c8c8c8" stroke-width="1.1"/><rect x="9.5" y="10" width="1.2" height="1.5" fill="#c8c8c8"/></svg>
<div class="a" style="left:1069.5px;top:599.5px;width:3px;height:3px;background:#e0e0e0;border-radius:2px;"></div>
<svg class="a" style="left:970px;top:629px;" width="6" height="9" viewBox="0 0 6 9"><path d="M1 1L4.5 4.5L1 8" fill="none" stroke="#cfcfcf" stroke-width="1.2"/></svg>
<div class="a t" style="left:981px;top:624px;width:108px;letter-spacing:-0.4px;height:20px;line-height:20px;overflow:hidden;color:#dcdcdc;font-size:12px">デルタトランスフォーム</div>
<div class="a" style="left:945px;top:648px;width:144px;height:25px;background:#363636;border-radius:5px;"></div>
<svg class="a" style="left:956px;top:656px;" width="6" height="9" viewBox="0 0 6 9"><path d="M1 1L4.5 4.5L1 8" fill="none" stroke="#cfcfcf" stroke-width="1.2"/></svg>
<div class="a t" style="left:968px;top:650.5px;height:20px;line-height:20px;font-size:12px;color:#dcdcdc;"><span style="font-size:11.50px;letter-spacing:-0.50px;position:relative;top:-0.8px">関係</span></div>
<svg class="a" style="left:1067px;top:656px;" width="16" height="8" viewBox="0 0 16 8"><circle cx="1.0" cy="1.5" r="0.7" fill="#8a8a8a"/><circle cx="1.0" cy="5.5" r="0.7" fill="#8a8a8a"/><circle cx="4.5" cy="1.5" r="0.7" fill="#8a8a8a"/><circle cx="4.5" cy="5.5" r="0.7" fill="#8a8a8a"/><circle cx="8.0" cy="1.5" r="0.7" fill="#8a8a8a"/><circle cx="8.0" cy="5.5" r="0.7" fill="#8a8a8a"/><circle cx="11.5" cy="1.5" r="0.7" fill="#8a8a8a"/><circle cx="11.5" cy="5.5" r="0.7" fill="#8a8a8a"/></svg>
<div class="a" style="left:945px;top:675px;width:144px;height:16px;background:#363636;border-radius:5px 5px 0 0;"></div>
<svg class="a" style="left:956px;top:682px;" width="6" height="9" viewBox="0 0 6 9"><path d="M1 1L4.5 4.5L1 8" fill="none" stroke="#cfcfcf" stroke-width="1.2"/></svg>
<div class="a t" style="left:968px;top:677px;height:20px;line-height:20px;font-size:12px;color:#dcdcdc;"><span style="font-size:11.50px;letter-spacing:-0.50px;position:relative;top:-0.8px">コレクション</span></div>
<svg class="a" style="left:1067px;top:683px;" width="16" height="8" viewBox="0 0 16 8"><circle cx="1.0" cy="1.5" r="0.7" fill="#8a8a8a"/><circle cx="1.0" cy="5.5" r="0.7" fill="#8a8a8a"/><circle cx="4.5" cy="1.5" r="0.7" fill="#8a8a8a"/><circle cx="4.5" cy="5.5" r="0.7" fill="#8a8a8a"/><circle cx="8.0" cy="1.5" r="0.7" fill="#8a8a8a"/><circle cx="8.0" cy="5.5" r="0.7" fill="#8a8a8a"/><circle cx="11.5" cy="1.5" r="0.7" fill="#8a8a8a"/><circle cx="11.5" cy="5.5" r="0.7" fill="#8a8a8a"/></svg>
<div class="a" style="left:1px;top:691px;width:1096px;height:21px;background:#181818;border-radius:0 0 8px 8px;"></div>
<div class="a" style="left:2px;top:642px;width:902px;height:49px;background:#1d1d1d;border-radius:6px;border:1px solid #303030;"></div>
<div class="a" style="left:2px;top:642px;width:902px;height:25px;background:#303030;border-radius:6px 6px 0 0;"></div>
<div class="a" style="left:9px;top:645px;width:32px;height:20px;background:#262626;border-radius:5px;border:1px solid #383838;"></div>
<svg class="a" style="left:13px;top:647px;" width="18" height="17" viewBox="0 0 18 17"><circle cx="8" cy="8" r="7" fill="#e6e6e6"/><path d="M11 3.5L7.5 8L10 11.5" fill="none" stroke="#262626" stroke-width="1.8"/></svg>
<svg class="a" style="left:29px;top:652px;" width="9" height="6" viewBox="0 0 9 6"><path d="M1 1L4.5 4.5L8 1" fill="none" stroke="#d0d0d0" stroke-width="1.2"/></svg>
<div class="a" style="left:46px;top:645px;width:127px;height:20px;background:#262626;border-radius:5px;border:1px solid #383838;"></div>
<div class="a" style="left:92px;top:645px;width:1px;height:19px;background:#3a3a3a;"></div>
<div class="a t" style="left:54px;top:644.5px;height:20px;line-height:20px;font-size:12px;color:#e0e0e0;"><span style="font-size:11.50px;letter-spacing:-0.50px;position:relative;top:-0.8px">再生</span></div>
<svg class="a" style="left:82px;top:652px;" width="9" height="6" viewBox="0 0 9 6"><path d="M1 1L4.5 4.5L8 1" fill="none" stroke="#d0d0d0" stroke-width="1.2"/></svg>
<div class="a t" style="left:100px;top:644.5px;height:20px;line-height:20px;font-size:12px;color:#e0e0e0;"><span style="font-size:11.50px;letter-spacing:-0.50px;position:relative;top:-0.8px">キーイング</span></div>
<svg class="a" style="left:162px;top:652px;" width="9" height="6" viewBox="0 0 9 6"><path d="M1 1L4.5 4.5L8 1" fill="none" stroke="#d0d0d0" stroke-width="1.2"/></svg>
<div class="a t" style="left:182px;top:644.5px;height:20px;line-height:20px;font-size:12px;color:#e0e0e0;"><span style="font-size:11.50px;letter-spacing:-0.50px;position:relative;top:-0.8px">ビュー</span></div>
<div class="a t" style="left:230px;top:644.5px;height:20px;line-height:20px;font-size:12px;color:#e0e0e0;"><span style="font-size:11.50px;letter-spacing:-0.50px;position:relative;top:-0.8px">マーカー</span></div>
<div class="a" style="left:361px;top:646px;width:38px;height:18px;background:#262626;border-radius:4px;"></div>
<div class="a" style="left:361px;top:646px;width:19px;height:18px;background:#4a4a4a;border-radius:4px 0 0 4px;"></div>
<svg class="a" style="left:361px;top:646px;" width="19" height="18" viewBox="0 0 19 18"><circle cx="9.5" cy="9" r="4.5" fill="none" stroke="#cfcfcf" stroke-width="1.1"/></svg>
<svg class="a" style="left:385px;top:652px;" width="9" height="6" viewBox="0 0 9 6"><path d="M1 1L4.5 4.5L8 1" fill="none" stroke="#5a5a5a" stroke-width="1.2"/></svg>
<div class="a" style="left:405px;top:646px;width:119px;height:18px;background:#4a4a4a;border-radius:4px;"></div>
<div class="a" style="left:424.8px;top:646px;width:1px;height:18px;background:#3d3d3d;"></div>
<div class="a" style="left:444.6px;top:646px;width:1px;height:18px;background:#3d3d3d;"></div>
<div class="a" style="left:464.4px;top:646px;width:1px;height:18px;background:#3d3d3d;"></div>
<div class="a" style="left:484.2px;top:646px;width:1px;height:18px;background:#3d3d3d;"></div>
<div class="a" style="left:504.0px;top:646px;width:1px;height:18px;background:#3d3d3d;"></div>
<svg class="a" style="left:405.0px;top:646px;" width="20" height="18" viewBox="0 0 20 18"><path d="M5 4V14" stroke="#e6e6e6" stroke-width="1.6"/><path d="M14 4V14L7 9Z" fill="#e6e6e6"/></svg>
<svg class="a" style="left:424.8px;top:646px;" width="20" height="18" viewBox="0 0 20 18"><path d="M2 9L6 5L10 9L6 13Z" fill="#e6e6e6"/><path d="M17 5V13L11 9Z" fill="#e6e6e6"/></svg>
<svg class="a" style="left:444.6px;top:646px;" width="20" height="18" viewBox="0 0 20 18"><path d="M14 4V14L6 9Z" fill="#e6e6e6"/></svg>
<svg class="a" style="left:464.4px;top:646px;" width="20" height="18" viewBox="0 0 20 18"><path d="M6 4V14L14 9Z" fill="#e6e6e6"/></svg>
<svg class="a" style="left:484.2px;top:646px;" width="20" height="18" viewBox="0 0 20 18"><path d="M3 5V13L9 9Z" fill="#e6e6e6"/><path d="M10 9L14 5L18 9L14 13Z" fill="#e6e6e6"/></svg>
<svg class="a" style="left:504.0px;top:646px;" width="20" height="18" viewBox="0 0 20 18"><path d="M5 4V14L12 9Z" fill="#e6e6e6"/><path d="M14 4V14" stroke="#e6e6e6" stroke-width="1.6"/></svg>
<div class="a" style="left:624px;top:646px;width:73px;height:18px;background:#545454;border-radius:4px;"></div>
<div class="a t" style="left:624px;top:645px;width:73px;height:20px;line-height:20px;text-align:center;font-size:12px;color:#e6e6e6;">1</div>
<div class="a" style="left:704px;top:646px;width:192px;height:18px;background:#545454;border-radius:4px;"></div>
<div class="a" style="left:704px;top:646px;width:19px;height:18px;background:#4a4a4a;border-radius:4px 0 0 4px;"></div>
<div class="a" style="left:723px;top:646px;width:1px;height:18px;background:#3d3d3d;"></div>
<div class="a" style="left:809px;top:646px;width:1px;height:18px;background:#3d3d3d;"></div>
<svg class="a" style="left:704px;top:646px;" width="19" height="18" viewBox="0 0 19 18"><circle cx="9.5" cy="10" r="5.5" fill="none" stroke="#e6e6e6" stroke-width="1.2"/><path d="M9.5 10V6.5M8 3H11M14 5L15 4" stroke="#e6e6e6" stroke-width="1.2"/></svg>
<div class="a t" style="left:738px;top:645px;height:20px;line-height:20px;font-size:12px;color:#e6e6e6;"><span style="font-size:11.50px;letter-spacing:-0.50px;position:relative;top:-0.8px">開始</span></div>
<div class="a t" style="right:301px;top:645px;height:20px;line-height:20px;text-align:right;font-size:12px;color:#e6e6e6;">1</div>
<div class="a t" style="left:825px;top:645px;height:20px;line-height:20px;font-size:12px;color:#e6e6e6;"><span style="font-size:11.50px;letter-spacing:-0.50px;position:relative;top:-0.8px">終了</span></div>
<div class="a t" style="right:215px;top:645px;height:20px;line-height:20px;text-align:right;font-size:12px;color:#e6e6e6;">250</div>
<div class="a" style="left:23px;top:671px;width:23px;height:17px;background:#4772b3;border-radius:4px;"></div>
<div class="a t" style="left:23px;top:669.5px;width:23px;height:20px;line-height:20px;text-align:center;font-size:12px;color:#ffffff;">1</div>
<div class="a t" style="left:79.0px;top:669.5px;width:40px;height:20px;line-height:20px;text-align:center;font-size:12px;color:#b8b8b8;">20</div>
<div class="a t" style="left:146.13px;top:669.5px;width:40px;height:20px;line-height:20px;text-align:center;font-size:12px;color:#b8b8b8;">40</div>
<div class="a t" style="left:213.26px;top:669.5px;width:40px;height:20px;line-height:20px;text-align:center;font-size:12px;color:#b8b8b8;">60</div>
<div class="a t" style="left:280.39px;top:669.5px;width:40px;height:20px;line-height:20px;text-align:center;font-size:12px;color:#b8b8b8;">80</div>
<div class="a t" style="left:347.52px;top:669.5px;width:40px;height:20px;line-height:20px;text-align:center;font-size:12px;color:#b8b8b8;">100</div>
<div class="a t" style="left:414.65px;top:669.5px;width:40px;height:20px;line-height:20px;text-align:center;font-size:12px;color:#b8b8b8;">120</div>
<div class="a t" style="left:481.78px;top:669.5px;width:40px;height:20px;line-height:20px;text-align:center;font-size:12px;color:#b8b8b8;">140</div>
<div class="a t" style="left:548.91px;top:669.5px;width:40px;height:20px;line-height:20px;text-align:center;font-size:12px;color:#b8b8b8;">160</div>
<div class="a t" style="left:616.04px;top:669.5px;width:40px;height:20px;line-height:20px;text-align:center;font-size:12px;color:#b8b8b8;">180</div>
<div class="a t" style="left:683.17px;top:669.5px;width:40px;height:20px;line-height:20px;text-align:center;font-size:12px;color:#b8b8b8;">200</div>
<div class="a t" style="left:750.3px;top:669.5px;width:40px;height:20px;line-height:20px;text-align:center;font-size:12px;color:#b8b8b8;">220</div>
<div class="a t" style="left:817.43px;top:669.5px;width:40px;height:20px;line-height:20px;text-align:center;font-size:12px;color:#b8b8b8;">240</div>
<svg class="a" style="left:10px;top:694px;" width="12" height="18" viewBox="0 0 12 18"><rect x="1" y="0.5" width="9" height="16" rx="3" fill="none" stroke="#a8a8a8" stroke-width="1"/><path d="M2 6V3A2.5 2.5 0 0 1 4.5 0.5H6V6Z" fill="#a8a8a8"/></svg>
<div class="a t" style="left:25px;top:691.5px;height:20px;line-height:20px;font-size:12px;color:#b8b8b8;"><span style="font-size:11.50px;letter-spacing:-0.50px;position:relative;top:-0.8px">選択</span></div>
<svg class="a" style="left:57px;top:694px;" width="12" height="18" viewBox="0 0 12 18"><rect x="1" y="0.5" width="9" height="16" rx="3" fill="none" stroke="#a8a8a8" stroke-width="1"/><rect x="4" y="2" width="3" height="6" rx="1" fill="#a8a8a8"/></svg>
<div class="a t" style="left:72px;top:691.5px;height:20px;line-height:20px;font-size:12px;color:#b8b8b8;"><span style="font-size:11.50px;letter-spacing:-0.50px;position:relative;top:-0.8px">視点の移動</span></div>
<svg class="a" style="left:135px;top:694px;" width="12" height="18" viewBox="0 0 12 18"><rect x="1" y="0.5" width="9" height="16" rx="3" fill="none" stroke="#a8a8a8" stroke-width="1"/><path d="M5 6V0.5H6.5A2.5 2.5 0 0 1 9 3V6Z" fill="#a8a8a8"/></svg>
<div class="a t" style="left:150px;top:691.5px;height:20px;line-height:20px;font-size:12px;color:#b8b8b8;"><span style="font-size:11.50px;letter-spacing:-0.50px;position:relative;top:-0.8px">コンテクストメニュー</span></div>
<svg class="a" style="left:1031px;top:694px;" width="20" height="17" viewBox="0 0 20 17"><circle cx="8" cy="8" r="6.5" fill="none" stroke="#b8b8b8" stroke-width="1"/><ellipse cx="8" cy="8" rx="3" ry="6.5" fill="none" stroke="#b8b8b8" stroke-width="1"/><path d="M1.5 8H14.5M2.5 4.5H13.5M2.5 11.5H13.5" stroke="#b8b8b8" stroke-width="0.9"/></svg>
<div class="a t" style="left:1044px;top:696px;height:20px;line-height:20px;font-size:9px;color:#b8b8b8;">2</div>
<div class="a" style="left:1053px;top:694px;width:1px;height:15px;background:#b8b8b8;"></div>
<div class="a t" style="left:1058px;top:691.5px;height:20px;line-height:20px;font-size:12px;color:#b8b8b8;">4.5.3</div>
<div class="a t" style="left:610px;top:201.5px;font-size:23.5px;line-height:27.5px;font-weight:bold;letter-spacing:-0.5px;color:#ff0f73;-webkit-text-stroke:0.35px #ff0f73;text-shadow:2.30px 0.00px 0.6px #ffe8f3,2.12px 0.88px 0.6px #ffe8f3,1.63px 1.63px 0.6px #ffe8f3,0.88px 2.12px 0.6px #ffe8f3,0.00px 2.30px 0.6px #ffe8f3,-0.88px 2.12px 0.6px #ffe8f3,-1.63px 1.63px 0.6px #ffe8f3,-2.12px 0.88px 0.6px #ffe8f3,-2.30px 0.00px 0.6px #ffe8f3,-2.12px -0.88px 0.6px #ffe8f3,-1.63px -1.63px 0.6px #ffe8f3,-0.88px -2.12px 0.6px #ffe8f3,-0.00px -2.30px 0.6px #ffe8f3,0.88px -2.12px 0.6px #ffe8f3,1.63px -1.63px 0.6px #ffe8f3,2.12px -0.88px 0.6px #ffe8f3,1.15px 0.00px 0px #ffe8f3,0.81px 0.81px 0px #ffe8f3,0.00px 1.15px 0px #ffe8f3,-0.81px 0.81px 0px #ffe8f3,-1.15px 0.00px 0px #ffe8f3,-0.81px -0.81px 0px #ffe8f3,-0.00px -1.15px 0px #ffe8f3,0.81px -0.81px 0px #ffe8f3;">マウスドラッグで範囲を、</div>
<div class="a t" style="left:610px;top:236.5px;font-size:23.5px;line-height:27.5px;font-weight:bold;letter-spacing:-0.5px;color:#ff0f73;-webkit-text-stroke:0.35px #ff0f73;text-shadow:2.30px 0.00px 0.6px #ffe8f3,2.12px 0.88px 0.6px #ffe8f3,1.63px 1.63px 0.6px #ffe8f3,0.88px 2.12px 0.6px #ffe8f3,0.00px 2.30px 0.6px #ffe8f3,-0.88px 2.12px 0.6px #ffe8f3,-1.63px 1.63px 0.6px #ffe8f3,-2.12px 0.88px 0.6px #ffe8f3,-2.30px 0.00px 0.6px #ffe8f3,-2.12px -0.88px 0.6px #ffe8f3,-1.63px -1.63px 0.6px #ffe8f3,-0.88px -2.12px 0.6px #ffe8f3,-0.00px -2.30px 0.6px #ffe8f3,0.88px -2.12px 0.6px #ffe8f3,1.63px -1.63px 0.6px #ffe8f3,2.12px -0.88px 0.6px #ffe8f3,1.15px 0.00px 0px #ffe8f3,0.81px 0.81px 0px #ffe8f3,0.00px 1.15px 0px #ffe8f3,-0.81px 0.81px 0px #ffe8f3,-1.15px 0.00px 0px #ffe8f3,-0.81px -0.81px 0px #ffe8f3,-0.00px -1.15px 0px #ffe8f3,0.81px -0.81px 0px #ffe8f3;">マウスホイールの回転で増やす頂点の数を</div>
<div class="a t" style="left:610px;top:271.5px;font-size:23.5px;line-height:27.5px;font-weight:bold;letter-spacing:-0.5px;color:#ff0f73;-webkit-text-stroke:0.35px #ff0f73;text-shadow:2.30px 0.00px 0.6px #ffe8f3,2.12px 0.88px 0.6px #ffe8f3,1.63px 1.63px 0.6px #ffe8f3,0.88px 2.12px 0.6px #ffe8f3,0.00px 2.30px 0.6px #ffe8f3,-0.88px 2.12px 0.6px #ffe8f3,-1.63px 1.63px 0.6px #ffe8f3,-2.12px 0.88px 0.6px #ffe8f3,-2.30px 0.00px 0.6px #ffe8f3,-2.12px -0.88px 0.6px #ffe8f3,-1.63px -1.63px 0.6px #ffe8f3,-0.88px -2.12px 0.6px #ffe8f3,-0.00px -2.30px 0.6px #ffe8f3,0.88px -2.12px 0.6px #ffe8f3,1.63px -1.63px 0.6px #ffe8f3,2.12px -0.88px 0.6px #ffe8f3,1.15px 0.00px 0px #ffe8f3,0.81px 0.81px 0px #ffe8f3,0.00px 1.15px 0px #ffe8f3,-0.81px 0.81px 0px #ffe8f3,-1.15px 0.00px 0px #ffe8f3,-0.81px -0.81px 0px #ffe8f3,-0.00px -1.15px 0px #ffe8f3,0.81px -0.81px 0px #ffe8f3;">調整します。</div>
<div class="a t" style="left:468px;top:527.5px;font-size:34px;line-height:38px;font-weight:bold;letter-spacing:0.4px;color:#ff0f73;-webkit-text-stroke:0.35px #ff0f73;text-shadow:2.60px 0.00px 0.6px #ffe8f3,2.40px 0.99px 0.6px #ffe8f3,1.84px 1.84px 0.6px #ffe8f3,0.99px 2.40px 0.6px #ffe8f3,0.00px 2.60px 0.6px #ffe8f3,-0.99px 2.40px 0.6px #ffe8f3,-1.84px 1.84px 0.6px #ffe8f3,-2.40px 0.99px 0.6px #ffe8f3,-2.60px 0.00px 0.6px #ffe8f3,-2.40px -0.99px 0.6px #ffe8f3,-1.84px -1.84px 0.6px #ffe8f3,-0.99px -2.40px 0.6px #ffe8f3,-0.00px -2.60px 0.6px #ffe8f3,0.99px -2.40px 0.6px #ffe8f3,1.84px -1.84px 0.6px #ffe8f3,2.40px -0.99px 0.6px #ffe8f3,1.30px 0.00px 0px #ffe8f3,0.92px 0.92px 0px #ffe8f3,0.00px 1.30px 0px #ffe8f3,-0.92px 0.92px 0px #ffe8f3,-1.30px 0.00px 0px #ffe8f3,-0.92px -0.92px 0px #ffe8f3,-0.00px -1.30px 0px #ffe8f3,0.92px -0.92px 0px #ffe8f3;">選択した角（頂点）を丸くします。</div>
<svg class="a" style="left:565px;top:220px;" width="30" height="12" viewBox="0 0 30 12"><path d="M3 8L27 4" stroke="#ffe8f3" stroke-width="6" stroke-linecap="round"/><path d="M3 8L27 4" stroke="#ff0f73" stroke-width="3"/></svg>
</div></body></html>
